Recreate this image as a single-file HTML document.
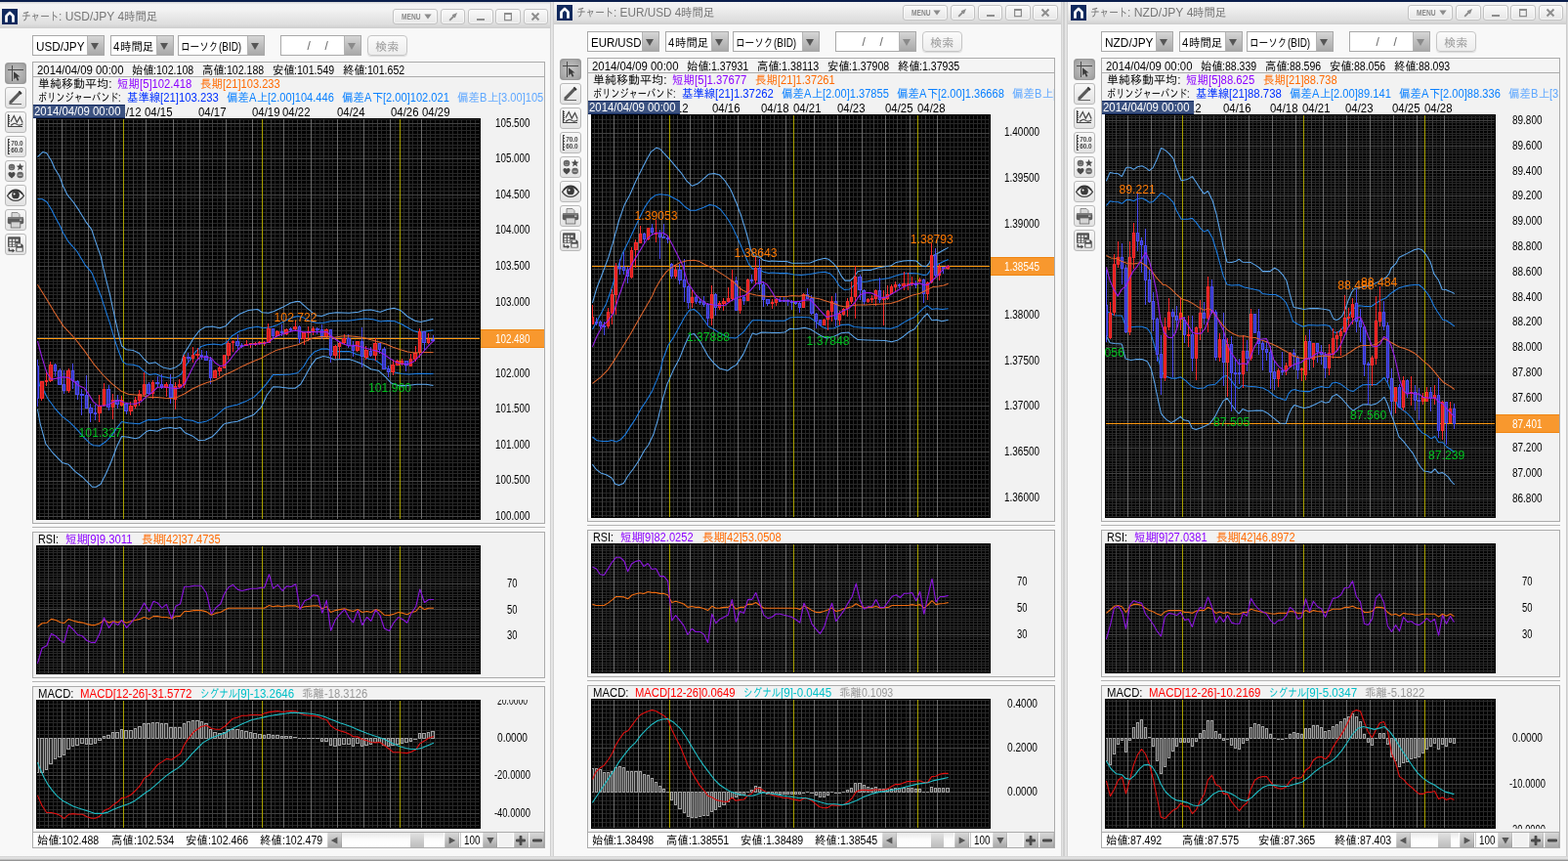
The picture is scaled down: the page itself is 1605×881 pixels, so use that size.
<!DOCTYPE html>
<html lang="ja"><head><meta charset="utf-8"><title>チャート</title>
<style>
html,body{margin:0;padding:0}
body{width:1605px;height:881px;overflow:hidden;position:relative;background:#f8f8f8;font:12px/14px 'Liberation Sans','IPAGothic',sans-serif}
div,span.t,svg{position:absolute;box-sizing:border-box}
span.t{white-space:pre;display:block;transform-origin:0 50%}
.tb{background:linear-gradient(#d4d4d4,#f3f3f3 9%,#f2f2f2 30%,#dedede 88%,#d2d2d2);}
.btn{border:1px solid #c2c2c2;border-radius:3px;background:linear-gradient(#fafafa,#e6e6e6);box-shadow:inset 0 0 0 1px rgba(255,255,255,.6)}
.cb{border:1px solid #a9a9a9;background:#fff}
.dd{background:linear-gradient(#d6d6d6,#bcbcbc 55%,#a9a9a9);border-left:1px solid #b4b4b4}
.tri{width:0;height:0;border-left:4.5px solid transparent;border-right:4.5px solid transparent;border-top:7px solid #555}
.pn{border:1px solid #ababab;background:#f2f2f2}
.tool{border:1px solid #b9b9b9;border-radius:3px;background:linear-gradient(#f8f8f8,#e2e2e2)}
.tool.sel{border-color:#9a9a9a;background:radial-gradient(ellipse at center,#c6c6c6,#a4a4a4 80%,#8c8c8c)}
.sb{background:linear-gradient(#d6d6d6,#c2c2c2 50%,#a8a8a8);box-shadow:inset 1px 0 0 rgba(255,255,255,.25),inset -1px 0 0 rgba(0,0,0,.08)}
</style></head><body>
<div id="root" style="left:0;top:0;width:1605px;height:881px;will-change:transform">
<div style="left:-1.00px;top:2.00px;width:565.50px;height:881.00px;background:#f8f8f8"></div>
<div style="left:-5.00px;top:2.00px;width:573.50px;height:27.00px;"></div>
<div class="tb" style="left:-5.0px;top:2.0px;width:573.5px;height:26.6px;border-bottom:1px solid #cfcfcf"></div>
<svg style="left:2.0px;top:9.0px" width="16" height="16" viewBox="0 0 16 16"><rect width="16" height="16" fill="#10295d"/><path d="M4.500 13.800V7.400L8 3.900L11.500 7.400V13.800" fill="none" stroke="#fff" stroke-width="2.700" stroke-linejoin="round"/></svg>
<span class="t" style="left:21.60px;top:10.30px;line-height:14px;color:#777;transform:scaleX(0.8000);">チャート</span><span class="t" style="left:60.00px;top:10.30px;line-height:14px;color:#777;">: USD/JPY 4</span><span class="t" style="left:127.40px;top:10.30px;line-height:14px;color:#777;transform:scaleX(0.9500);">時間足</span>
<div class="btn" style="left:535.5px;top:9.0px;width:25.5px;height:15.5px"></div>
<svg style="left:543.2px;top:11.8px" width="10" height="10" viewBox="0 0 10 10"><path d="M1.5 1.5l7 7M8.5 1.5l-7 7" stroke="#8c8c8c" stroke-width="1.9" fill="none"/></svg>
<div class="btn" style="left:507.3px;top:9.0px;width:25.5px;height:15.5px"></div>
<svg style="left:515.0px;top:11.8px" width="10" height="10" viewBox="0 0 10 10"><path d="M1.6 2.4h6.8v6.2H1.6z" stroke="#8c8c8c" stroke-width="1.2" fill="none"/><path d="M1 1.9h8" stroke="#8c8c8c" stroke-width="1.8"/></svg>
<div class="btn" style="left:479.1px;top:9.0px;width:25.5px;height:15.5px"></div>
<svg style="left:486.8px;top:11.8px" width="10" height="10" viewBox="0 0 10 10"><path d="M1 8h8" stroke="#8c8c8c" stroke-width="2"/></svg>
<div class="btn" style="left:450.9px;top:9.0px;width:25.5px;height:15.5px"></div>
<svg style="left:458.6px;top:11.8px" width="10" height="10" viewBox="0 0 10 10"><path d="M1.2 8.8L6 4" stroke="#8c8c8c" stroke-width="1.8" fill="none"/><path d="M3.6 3.2L9 1 6.8 6.4z" fill="#8c8c8c"/></svg>
<div class="btn" style="left:402.2px;top:9.0px;width:46.0px;height:15.5px"></div>
<span class="t" style="left:410.80px;top:12.10px;line-height:11px;color:#8a8a8a;font-size:9px;font-weight:bold;transform:scaleX(0.7358);">MENU</span>
<svg style="left:433.6px;top:14.2px" width="8" height="6" viewBox="0 0 8 6"><path d="M0.3 0.6h7.4L4 5.4z" fill="#8c8c8c"/></svg>
<div class="cb" style="left:33.3px;top:36.0px;width:74.0px;height:21px"></div>
<div class="dd" style="left:89.3px;top:37.0px;width:17px;height:19px"></div>
<div class="tri" style="left:93.3px;top:43.5px;"></div>
<span class="t" style="left:36.60px;top:40.50px;line-height:14px;color:#000;transform:scaleX(0.9766);">USD/JPY</span>
<div class="cb" style="left:113.0px;top:36.0px;width:64.5px;height:21px"></div>
<div class="dd" style="left:159.5px;top:37.0px;width:17px;height:19px"></div>
<div class="tri" style="left:163.5px;top:43.5px;"></div>
<span class="t" style="left:116.30px;top:40.50px;line-height:14px;color:#000;transform:scaleX(0.9421);">4</span><span class="t" style="left:122.60px;top:40.50px;line-height:14px;color:#000;transform:scaleX(0.9500);">時間足</span>
<div class="cb" style="left:182.0px;top:36.0px;width:88.5px;height:21px"></div>
<div class="dd" style="left:252.5px;top:37.0px;width:17px;height:19px"></div>
<div class="tri" style="left:256.5px;top:43.5px;"></div>
<span class="t" style="left:185.30px;top:40.50px;line-height:14px;color:#000;transform:scaleX(0.8000);">ローソク</span><span class="t" style="left:223.70px;top:40.50px;line-height:14px;color:#000;transform:scaleX(0.8250);">(BID)</span>
<div class="cb" style="left:287.0px;top:36.0px;width:82.5px;height:21px"></div>
<div class="dd" style="left:351.5px;top:37.0px;width:17px;height:19px"></div>
<div class="tri" style="left:355.5px;top:43.5px;border-top-color:#8a8a8a"></div>
<span class="t" style="left:314.50px;top:40.00px;line-height:14px;color:#666;">/</span>
<span class="t" style="left:332.50px;top:40.00px;line-height:14px;color:#666;">/</span>
<div style="left:375.5px;top:36.0px;width:41.5px;height:21px;border:1px solid #c6c6c6;border-radius:4px;background:linear-gradient(#fbfbfb,#ededed);box-shadow:0 1px 1px rgba(0,0,0,.12)"></div>
<span class="t" style="left:384.20px;top:40.50px;line-height:14px;color:#9a9a9a;">検索</span>
<div class="tool sel" style="left:5.2px;top:64.0px;width:22px;height:22px"></div>
<svg style="left:5.2px;top:64.0px" width="22" height="22" viewBox="0 0 22 22"><path d="M3 7.5h16M7.5 3v16" stroke="#4a4a4a" stroke-width="1" fill="none"/><path d="M9 9.3l0.2 8 2-2 1.6 3.4 1.6-0.8-1.6-3.3 2.8-0.2z" fill="#3c3c3c"/></svg>
<div class="tool" style="left:5.2px;top:89.0px;width:22px;height:22px"></div>
<svg style="left:5.2px;top:89.0px" width="22" height="22" viewBox="0 0 22 22"><path d="M4.500 17.500h12.500" stroke="#666" stroke-width="1"/><path d="M5.600 15.800L15.600 5.600" stroke="#5a5a5a" stroke-width="3.200" stroke-linecap="butt"/><path d="M14.400 4.400l2.600 2.600" stroke="#333" stroke-width="1.800"/><path d="M4.300 17.100l0.600-2.600 2 2z" fill="#444"/></svg>
<div class="tool" style="left:5.2px;top:114.0px;width:22px;height:22px"></div>
<svg style="left:5.2px;top:114.0px" width="22" height="22" viewBox="0 0 22 22"><path d="M3.5 3v12.5H18" stroke="#444" stroke-width="1.2" fill="none"/><path d="M6 10.5l3.3-6 3 6.6 3.2-5.6 2.6 6" stroke="#444" stroke-width="1.2" fill="none"/><path d="M6 14.3c1.6-.4 2.4-2 4-2s2.600 1.800 4.500 1.800 2.600-1 3.800-1.200" stroke="#444" stroke-width="1.1" fill="none"/><path d="M3.500 4.500h1.500M3.500 6.500h1.500M3.500 8.500h1.500M3.500 10.500h1.500M3.500 12.500h1.500" stroke="#444" stroke-width="1"/></svg>
<div class="tool" style="left:5.2px;top:139.0px;width:22px;height:22px"></div>
<svg style="left:5.2px;top:139.0px" width="22" height="22" viewBox="0 0 22 22"><path d="M5 3.500H3.500v15H5M3.500 6.500h1.500M3.500 9.500h1.500M3.500 12.500h1.500M3.500 15.500h1.500" stroke="#444" stroke-width="1.1" fill="none"/><text x="6.200" y="9.600" font-family="Liberation Sans,sans-serif" font-size="6.500" font-weight="bold" fill="#444" textLength="12.500" lengthAdjust="spacingAndGlyphs">70.0</text><text x="6.200" y="16.600" font-family="Liberation Sans,sans-serif" font-size="6.500" font-weight="bold" fill="#444" textLength="12.500" lengthAdjust="spacingAndGlyphs">60.0</text></svg>
<div class="tool" style="left:5.2px;top:164.0px;width:22px;height:22px"></div>
<svg style="left:5.2px;top:164.0px" width="22" height="22" viewBox="0 0 22 22"><circle cx="7" cy="7" r="3.300" fill="#666"/><path d="M5.300 6.200h1.200M7.600 6.200h1.200M5.400 8.200q1.600 1.300 3.200 0" stroke="#aaa" stroke-width=".7" fill="none"/><path d="M15.600 3l1.100 2.600 2.800.2-2.200 1.800.8 2.800-2.500-1.600-2.500 1.600.8-2.800-2.200-1.800 2.800-.2z" fill="#4a4a4a"/><path d="M7 18.400c-2-1.600-3.600-2.800-3.600-4.600 0-1.100.9-1.900 1.900-1.900.7 0 1.300.4 1.700 1 .4-.6 1-1 1.700-1 1 0 1.900.8 1.900 1.900 0 1.800-1.600 3-3.600 4.600z" fill="#4a4a4a"/><circle cx="15.600" cy="15" r="3.300" fill="#666"/><path d="M13.600 15.200h4" stroke="#ccc" stroke-width="1"/></svg>
<div class="tool" style="left:5.2px;top:189.0px;width:22px;height:22px"></div>
<svg style="left:5.2px;top:189.0px" width="22" height="22" viewBox="0 0 22 22"><path d="M2.600 11.400c2.200-3.600 5.200-5.400 8.400-5.400s6.200 1.800 8.400 5.400c-2.200 3.400-5.200 5-8.400 5s-6.200-1.600-8.400-5z" fill="#eee" stroke="#444" stroke-width="1.300"/><circle cx="11" cy="10.400" r="3.900" fill="#3a3a3a"/><path d="M4 9.500c2-2.800 4.400-4.100 7-4.100s5 1.300 7 4.100" stroke="#333" stroke-width="1.600" fill="none"/><circle cx="9.600" cy="9.400" r="1" fill="#fff"/></svg>
<div class="tool" style="left:5.2px;top:214.0px;width:22px;height:22px"></div>
<svg style="left:5.2px;top:214.0px" width="22" height="22" viewBox="0 0 22 22"><path d="M7 3.500h6l2 2v4H7z" fill="#d8d8d8" stroke="#777" stroke-width=".8"/><rect x="2.800" y="8" width="16.400" height="7.200" rx="1.800" fill="#5c5c5c"/><rect x="3" y="8" width="16" height="2" rx="1" fill="#7a7a7a"/><rect x="6.200" y="13" width="9.600" height="6" fill="#d4d4d4" stroke="#666" stroke-width=".8"/><rect x="15" y="10.600" width="2.400" height="1" fill="#eee"/></svg>
<div class="tool" style="left:5.2px;top:239.0px;width:22px;height:22px"></div>
<svg style="left:5.2px;top:239.0px" width="22" height="22" viewBox="0 0 22 22"><rect x="3" y="3.300" width="13" height="10.600" rx="1" fill="#555"/><path d="M4.500 5.700h2.300v2.100H4.500zM7.900 5.700h2.300v2.100H7.900zM11.300 5.700h2.300v2.100h-2.300zM4.500 8.800h2.300v2H4.500zM7.900 8.800h2.300v2H7.900zM4.500 11.600h2.300v1.600H4.500zM7.900 11.600h2.300v1.600H7.900z" fill="#eee"/><rect x="10.800" y="10.200" width="8.200" height="8.600" fill="#f2f2f2"/><path d="M11.300 10.600h6l1.400 1.400v6.400h-7.400z" fill="#444"/><rect x="12.800" y="10.800" width="3.600" height="2.200" fill="#ddd"/><rect x="12.300" y="14.600" width="5.400" height="3.300" fill="#eee"/><path d="M4.200 14.800v2.700h4" stroke="#444" stroke-width="1.300" fill="none"/><path d="M7.600 15.600l2.600 1.900-2.600 1.900z" fill="#444"/></svg>
<div class="pn" style="left:33.0px;top:63.0px;width:525.0px;height:473.0px"></div>
<div style="left:33.0px;top:63.0px;width:525.0px;height:16px;border:1px solid #ababab;background:#f4f4f4"></div>
<span class="t" style="left:37.60px;top:64.70px;line-height:14px;color:#000;transform:scaleX(0.9473);">2014/04/09 00:00</span>
<span class="t" style="left:134.60px;top:64.70px;line-height:14px;color:#000;transform:scaleX(0.9500);">始値</span><span class="t" style="left:157.40px;top:64.70px;line-height:14px;color:#000;transform:scaleX(0.8819);">:102.108</span>
<span class="t" style="left:206.60px;top:64.70px;line-height:14px;color:#000;transform:scaleX(0.9500);">高値</span><span class="t" style="left:229.40px;top:64.70px;line-height:14px;color:#000;transform:scaleX(0.8819);">:102.188</span>
<span class="t" style="left:278.60px;top:64.70px;line-height:14px;color:#000;transform:scaleX(0.9500);">安値</span><span class="t" style="left:301.40px;top:64.70px;line-height:14px;color:#000;transform:scaleX(0.8819);">:101.549</span>
<span class="t" style="left:350.60px;top:64.70px;line-height:14px;color:#000;transform:scaleX(0.9500);">終値</span><span class="t" style="left:373.40px;top:64.70px;line-height:14px;color:#000;transform:scaleX(0.8819);">:101.652</span>
<span class="t" style="left:39.00px;top:79.10px;line-height:14px;color:#000;">単純移動平均</span><span class="t" style="left:111.15px;top:79.10px;line-height:14px;color:#000;">:</span>
<span class="t" style="left:120.40px;top:79.10px;line-height:14px;color:#8c00ff;transform:scaleX(0.9500);">短期</span><span class="t" style="left:143.20px;top:79.10px;line-height:14px;color:#8c00ff;transform:scaleX(0.9380);">[5]102.418</span>
<span class="t" style="left:204.90px;top:79.10px;line-height:14px;color:#ff6a00;transform:scaleX(0.9500);">長期</span><span class="t" style="left:227.70px;top:79.10px;line-height:14px;color:#ff6a00;transform:scaleX(0.9258);">[21]103.233</span>
<span class="t" style="left:39.00px;top:93.10px;line-height:14px;color:#000;transform:scaleX(0.7634);">ボリンジャーバンド</span><span class="t" style="left:121.45px;top:93.10px;line-height:14px;color:#000;transform:scaleX(0.7634);">:</span>
<span class="t" style="left:129.80px;top:93.10px;line-height:14px;color:#0030ff;transform:scaleX(0.9500);">基準線</span><span class="t" style="left:164.00px;top:93.10px;line-height:14px;color:#0030ff;transform:scaleX(0.9431);">[21]103.233</span>
<span class="t" style="left:232.30px;top:93.10px;line-height:14px;color:#0a80ff;transform:scaleX(0.9500);">偏差</span><span class="t" style="left:255.10px;top:93.10px;line-height:14px;color:#0a80ff;transform:scaleX(0.9248);">A</span><span class="t" style="left:262.51px;top:93.10px;line-height:14px;color:#0a80ff;transform:scaleX(0.9500);">上</span><span class="t" style="left:273.91px;top:93.10px;line-height:14px;color:#0a80ff;transform:scaleX(0.9248);">[2.00]104.446</span>
<span class="t" style="left:350.30px;top:93.10px;line-height:14px;color:#0a80ff;transform:scaleX(0.9500);">偏差</span><span class="t" style="left:373.10px;top:93.10px;line-height:14px;color:#0a80ff;transform:scaleX(0.9248);">A</span><span class="t" style="left:380.51px;top:93.10px;line-height:14px;color:#0a80ff;transform:scaleX(0.9500);">下</span><span class="t" style="left:391.91px;top:93.10px;line-height:14px;color:#0a80ff;transform:scaleX(0.9248);">[2.00]102.021</span>
<span class="t" style="left:468.30px;top:93.10px;line-height:14px;color:#60a8ff;transform:scaleX(0.9500);">偏差</span><span class="t" style="left:491.10px;top:93.10px;line-height:14px;color:#60a8ff;transform:scaleX(0.9248);">B</span><span class="t" style="left:498.51px;top:93.10px;line-height:14px;color:#60a8ff;transform:scaleX(0.9500);">上</span><span class="t" style="left:509.91px;top:93.10px;line-height:14px;color:#60a8ff;transform:scaleX(0.9248);width:50.92px;overflow:hidden;">[3.00]105.659</span>
<div style="left:34.00px;top:107.00px;width:3.00px;height:425.00px;background:#fff"></div>
<span class="t" style="left:115.70px;top:107.50px;line-height:14px;color:#000;transform:scaleX(0.9490);">04/12</span>
<span class="t" style="left:148.00px;top:107.50px;line-height:14px;color:#000;transform:scaleX(0.9490);">04/15</span>
<span class="t" style="left:202.80px;top:107.50px;line-height:14px;color:#000;transform:scaleX(0.9490);">04/17</span>
<span class="t" style="left:257.50px;top:107.50px;line-height:14px;color:#000;transform:scaleX(0.9490);">04/19</span>
<span class="t" style="left:289.40px;top:107.50px;line-height:14px;color:#000;transform:scaleX(0.9490);">04/22</span>
<span class="t" style="left:344.60px;top:107.50px;line-height:14px;color:#000;transform:scaleX(0.9490);">04/24</span>
<span class="t" style="left:399.90px;top:107.50px;line-height:14px;color:#000;transform:scaleX(0.9490);">04/26</span>
<span class="t" style="left:431.70px;top:107.50px;line-height:14px;color:#000;transform:scaleX(0.9490);">04/29</span>
<div style="left:34.00px;top:107.00px;width:93.50px;height:14.00px;background:#3c5280;border-top:1px solid #142c62;border-bottom:1px solid #142c62"></div>
<span class="t" style="left:35.00px;top:107.30px;line-height:14px;color:#fff;transform:scaleX(0.9473);">2014/04/09 00:00</span>
<svg style="left:37.0px;top:121.0px;background:#000" width="455" height="411" viewBox="0 0 455 411"><g fill="none" stroke-width="1" shape-rendering="crispEdges"><path d="M1 1.5H454M1 5.5H454M1 8.5H454M1 12.5H454M1 16.5H454M1 19.5H454M1 23.5H454M1 27.5H454M1 30.5H454M1 34.5H454M1 38.5H454M1 41.5H454M1 45.5H454M1 48.5H454M1 52.5H454M1 56.5H454M1 59.5H454M1 63.5H454M1 67.5H454M1 70.5H454M1 74.5H454M1 78.5H454M1 81.5H454M1 85.5H454M1 89.5H454M1 92.5H454M1 96.5H454M1 100.5H454M1 103.5H454M1 107.5H454M1 111.5H454M1 114.5H454M1 118.5H454M1 122.5H454M1 125.5H454M1 129.5H454M1 133.5H454M1 136.5H454M1 140.5H454M1 144.5H454M1 147.5H454M1 151.5H454M1 155.5H454M1 158.5H454M1 162.5H454M1 166.5H454M1 169.5H454M1 173.5H454M1 177.5H454M1 180.5H454M1 184.5H454M1 188.5H454M1 191.5H454M1 195.5H454M1 199.5H454M1 202.5H454M1 206.5H454M1 210.5H454M1 213.5H454M1 217.5H454M1 221.5H454M1 224.5H454M1 228.5H454M1 231.5H454M1 235.5H454M1 239.5H454M1 242.5H454M1 246.5H454M1 250.5H454M1 253.5H454M1 257.5H454M1 261.5H454M1 264.5H454M1 268.5H454M1 272.5H454M1 275.5H454M1 279.5H454M1 283.5H454M1 286.5H454M1 290.5H454M1 294.5H454M1 297.5H454M1 301.5H454M1 305.5H454M1 308.5H454M1 312.5H454M1 316.5H454M1 319.5H454M1 323.5H454M1 327.5H454M1 330.5H454M1 334.5H454M1 338.5H454M1 341.5H454M1 345.5H454M1 349.5H454M1 352.5H454M1 356.5H454M1 360.5H454M1 363.5H454M1 367.5H454M1 371.5H454M1 374.5H454M1 378.5H454M1 382.5H454M1 385.5H454M1 389.5H454M1 393.5H454M1 396.5H454M1 400.5H454M1 404.5H454M1 407.5H454" stroke="#282828"/><path d="M3.5 1V410M8.5 1V410M12.5 1V410M17.5 1V410M21.5 1V410M26.5 1V410M30.5 1V410M35.5 1V410M39.5 1V410M44.5 1V410M49.5 1V410M53.5 1V410M58.5 1V410M62.5 1V410M67.5 1V410M71.5 1V410M76.5 1V410M80.5 1V410M85.5 1V410M89.5 1V410M94.5 1V410M99.5 1V410M103.5 1V410M108.5 1V410M112.5 1V410M117.5 1V410M121.5 1V410M126.5 1V410M130.5 1V410M135.5 1V410M140.5 1V410M144.5 1V410M149.5 1V410M153.5 1V410M158.5 1V410M162.5 1V410M167.5 1V410M171.5 1V410M176.5 1V410M180.5 1V410M185.5 1V410M190.5 1V410M194.5 1V410M199.5 1V410M203.5 1V410M208.5 1V410M212.5 1V410M217.5 1V410M221.5 1V410M226.5 1V410M231.5 1V410M235.5 1V410M240.5 1V410M244.5 1V410M249.5 1V410M253.5 1V410M258.5 1V410M262.5 1V410M267.5 1V410M271.5 1V410M276.5 1V410M281.5 1V410M285.5 1V410M290.5 1V410M294.5 1V410M299.5 1V410M303.5 1V410M308.5 1V410M312.5 1V410M317.5 1V410M322.5 1V410M326.5 1V410M331.5 1V410M335.5 1V410M340.5 1V410M344.5 1V410M349.5 1V410M353.5 1V410M358.5 1V410M362.5 1V410M367.5 1V410M372.5 1V410M376.5 1V410M381.5 1V410M385.5 1V410M390.5 1V410M394.5 1V410M399.5 1V410M403.5 1V410M408.5 1V410M413.5 1V410M417.5 1V410M422.5 1V410M426.5 1V410M431.5 1V410M435.5 1V410M440.5 1V410M444.5 1V410M449.5 1V410" stroke="#282828"/><path d="M1 5.5H454M1 41.5H454M1 78.5H454M1 114.5H454M1 151.5H454M1 188.5H454M1 224.5H454M1 261.5H454M1 297.5H454M1 334.5H454M1 371.5H454M1 407.5H454" stroke="#424242"/><path d="M12.5 1V410M39.5 1V410M67.5 1V410M99.5 1V410M126.5 1V410M153.5 1V410M180.5 1V410M208.5 1V410M240.5 1V410M267.5 1V410M294.5 1V410M322.5 1V410M349.5 1V410M381.5 1V410" stroke="#3e3e3e"/><path d="M26.5 1V410M53.5 1V410M80.5 1V410M112.5 1V410M140.5 1V410M167.5 1V410M194.5 1V410M221.5 1V410M253.5 1V410M281.5 1V410M308.5 1V410M335.5 1V410M362.5 1V410M394.5 1V410" stroke="#6c6c6c"/><path d="M89.5 1V410M231.5 1V410M372.5 1V410" stroke="#aaa200"/></g><path d="M1 225.5H454" stroke="#ff9a10" stroke-width="1.2" fill="none"/><path d="M1.4 39.6L7 34.4L10.8 35.8L15.5 43.3L19.2 51.8L23.9 59.3L27.6 69.6L32.3 78.9L37.9 85.5L43.6 93.9L51 106.1L56.7 113.6L61.3 127.6L66 140.7L70.7 161.3L75.4 180.1L77.3 189L81 205.8L84.8 222.7L87.6 233L92.2 236.7L99.7 237.6L105.4 240.5L111 247L115.7 251.1L122.2 249.8L126 252.6L129.7 254.9L137.2 256.4L142.8 254.9L148.4 250.8L151.2 241.4L155.9 233.9L161.5 224.5L167.2 217.1L172.8 213.7L180.3 212.9L187.8 214.8L194.3 212.4L200.5 205.8L208 200.6L217.3 196.4L226.7 195.5L231.4 198.7L237.9 199.3L243.6 197.4L252.9 193.1L260.4 189L266 187.5L269.8 187.6L275.4 192.7L281 197.4L286.6 201.7L292.2 202.4L299.7 199.8L307.2 198.7L320.3 199.3L329.7 198.3L335.3 196.4L342.8 196.1L352.2 198.3L359.7 195.5L366.2 194.2L372.8 196.4L380.3 203L387.8 207.3L393.4 208.6L399 207.3L406.5 205.2" stroke="#5aa6ee" stroke-width="1.05" fill="none" stroke-linejoin="round" /><path d="M1.4 297.7L4.2 312.7L9.9 333.3L17.3 342.7L26.7 352.4L33.3 354.3L39.8 361.4L47.3 367L52.9 372.6L57.6 377.3L61.3 377.3L66 374.5L71.7 363.3L77.3 350.2L82.9 335.2L87.6 325.4L94.1 326.2L101.6 327.7L105.4 326.8L112.8 320.6L116.6 319.3L124.1 320.2L129.7 317.4L137.2 316.4L142.8 317.4L147.5 316.4L152.2 321.7L159.7 324.9L166.2 329.6L172.8 329.2L180.3 325.8L185.9 320.2L191.5 313.6L193 312.6L200.5 311.1L206.1 310.3L213.6 306.9L223 303.2L230.4 295.7L236.1 283.5L242.6 274.7L249.2 275.1L258.5 276.2L265.1 276.2L270.7 272.3L275.4 263.9L281 253.6L286.6 246.1L294.1 243.6L299.7 244.8L305.4 247L312.9 246.6L320.3 246.6L327.8 248.9L335.3 252.3L342.8 256.8L350.3 258.2L357.8 264.8L363.4 271L370.9 273.6L380.3 273.6L389.6 272.3L399 272.3L406.5 273.6" stroke="#5aa6ee" stroke-width="1.05" fill="none" stroke-linejoin="round" /><path d="M1.4 82.7L6.1 82.7L10.8 85.5L15.5 93L20.1 102.3L24.8 110.8L27.6 117.3L33.3 126.7L41.7 136L50.1 150.1L56.7 157.6L61.3 168.8L67 183.8L69.8 192.7L75.4 209.6L81 228.3L84.8 239.5L88.5 248.9L92.2 251.7L99.7 252.3L105.4 254.1L111 259.2L115.7 262.4L122.2 261.6L127.8 263.9L137.2 266.1L142.8 265.4L148.4 262L152.2 254.5L157.8 247L163.4 238.6L169 233.5L174.7 231.7L182.1 231.1L189.6 232L195.2 229.2L200.5 222.7L208 218L217.3 214.8L226.7 213.3L232.3 214.8L239.8 213.7L247.3 211.4L254.8 207.3L262.3 203.9L267.9 202.4L273.5 203.9L279.1 207.3L286.6 209.2L294.1 209.2L301.6 207.7L309.1 207.3L320.3 207.3L329.7 205.8L337.2 204.9L344.7 205.8L352.2 208.1L359.7 207.3L367.2 207.7L373.7 210.5L380.3 214.2L385.9 217.4L391.5 218.9L399 218L406.5 216.7" stroke="#1c7fe6" stroke-width="1.05" fill="none" stroke-linejoin="round" /><path d="M1.4 263.9L3.3 273.2L8 279L11.7 286.5L19.2 296.8L26.7 305.2L34.2 310.8L41.7 318.3L49.2 326.8L54.8 332.4L58.5 334.8L65.1 335.2L71.7 330.5L77.3 324.9L82.9 316.4L87.6 310.5L94.1 311.8L105.4 312.7L114.7 308.6L124.1 308.6L129.7 306.7L140.9 306.7L147.5 305.6L152.2 308.6L159.7 309.3L166.2 311.8L174.7 309.9L182.1 306.1L189.6 299.6L193 296.6L200.5 294.2L206.1 292.9L213.6 290.1L223 285.4L230.4 277.9L236.1 271.4L242.6 262.4L249.2 262.4L260.4 262L267.9 260.5L273.5 254.5L279.1 245.1L284.8 239.1L292.2 236.1L297.9 236.1L303.5 238.6L312.9 238.6L320.3 238.6L327.8 241.4L335.3 243.3L340.9 246.6L346.6 247L354.1 252.6L359.7 256.4L367.2 260.1L374.6 261.6L382.1 262L391.5 261.2L406.5 261.4" stroke="#1c7fe6" stroke-width="1.05" fill="none" stroke-linejoin="round" /><path d="M5 269h1V289h-1zM4 269h4V287h-4zM10 258h1V274h-1zM9 268h3V270h-3zM14 249h1V270h-1zM13 252h4V269h-4zM33 256h1V281h-1zM31 258h4V279h-4zM64 283h1V311h-1zM63 294h4V302h-4zM69 271h1V295h-1zM68 277h3V294h-3zM78 282h1V308h-1zM77 288h3V296h-3zM87 284h1V295h-1zM86 288h3V294h-3zM96 290h1V304h-1zM95 294h4V300h-4zM101 285h1V297h-1zM100 288h3V295h-3zM105 278h1V294h-1zM104 282h4V289h-4zM110 260h1V284h-1zM109 272h3V283h-3zM119 268h1V287h-1zM118 270h3V282h-3zM133 270h1V285h-1zM131 272h4V276h-4zM142 270h1V298h-1zM141 274h3V288h-3zM146 267h1V276h-1zM145 272h4V275h-4zM151 242h1V276h-1zM150 244h3V273h-3zM160 234h1V250h-1zM159 242h3V246h-3zM165 235h1V247h-1zM163 241h4V243h-4zM183 257h1V266h-1zM181 258h4V266h-4zM187 254h1V264h-1zM186 255h4V259h-4zM192 242h1V256h-1zM191 242h3V256h-3zM196 228h1V247h-1zM195 230h4V243h-4zM201 227h1V239h-1zM200 228h3V230h-3zM215 227h1V233h-1zM213 231h4V233h-4zM219 230h1V235h-1zM218 230h3V232h-3zM224 229h1V233h-1zM222 230h4V232h-4zM228 228h1V232h-1zM227 229h4V231h-4zM233 228h1V233h-1zM232 229h3V231h-3zM237 210h1V230h-1zM236 215h4V230h-4zM246 217h1V223h-1zM245 218h4V223h-4zM256 215h1V222h-1zM254 216h4V221h-4zM265 207h1V217h-1zM263 213h4V216h-4zM274 219h1V232h-1zM272 219h4V226h-4zM278 213h1V228h-1zM277 218h4V220h-4zM283 213h1V222h-1zM282 215h3V218h-3zM297 215h1V225h-1zM295 216h4V224h-4zM306 232h1V246h-1zM304 233h4V243h-4zM310 229h1V246h-1zM309 230h3V234h-3zM315 221h1V232h-1zM313 225h4V230h-4zM328 228h1V239h-1zM327 228h4V238h-4zM337 233h1V247h-1zM336 237h4V245h-4zM347 225h1V248h-1zM345 230h4V243h-4zM365 247h1V263h-1zM363 252h4V260h-4zM369 247h1V253h-1zM368 248h4V253h-4zM374 246h1V253h-1zM373 248h3V252h-3zM383 241h1V254h-1zM382 246h3V254h-3zM388 233h1V249h-1zM386 240h4V247h-4zM392 215h1V245h-1zM391 218h3V240h-3zM401 220h1V231h-1zM400 226h3V230h-3z" fill="#ff2a2a" shape-rendering="crispEdges"/><path d="M5 270h2V286h-2zM14 253h2V268h-2zM32 259h2V278h-2zM64 295h2V301h-2zM69 278h1V293h-1zM78 289h1V295h-1zM87 289h1V293h-1zM96 295h2V299h-2zM101 289h1V294h-1zM105 283h2V288h-2zM110 273h1V282h-1zM119 271h1V281h-1zM132 273h2V275h-2zM142 275h1V287h-1zM146 273h2V274h-2zM151 245h1V272h-1zM160 243h1V245h-1zM182 259h2V265h-2zM187 256h2V258h-2zM192 243h1V255h-1zM196 231h2V242h-2zM237 216h2V229h-2zM246 219h2V222h-2zM255 217h2V220h-2zM264 214h2V215h-2zM273 220h2V225h-2zM283 216h1V217h-1zM296 217h2V223h-2zM305 234h2V242h-2zM310 231h1V233h-1zM314 226h2V229h-2zM328 229h2V237h-2zM337 238h2V244h-2zM346 231h2V242h-2zM364 253h2V259h-2zM369 249h2V252h-2zM374 249h1V251h-1zM383 247h1V253h-1zM387 241h2V246h-2zM392 219h1V239h-1zM401 227h1V229h-1z" fill="#d41c1c" shape-rendering="crispEdges"/><path d="M1 247h1V295h-1zM0 253h3V287h-3zM19 251h1V264h-1zM18 252h3V259h-3zM24 256h1V273h-1zM22 258h4V273h-4zM28 258h1V282h-1zM27 272h3V279h-3zM37 251h1V277h-1zM36 258h3V269h-3zM42 268h1V288h-1zM40 269h4V283h-4zM46 277h1V304h-1zM45 282h4V284h-4zM51 263h1V297h-1zM50 283h3V297h-3zM55 292h1V311h-1zM54 296h4V302h-4zM60 293h1V309h-1zM59 301h3V303h-3zM74 273h1V299h-1zM72 277h4V296h-4zM83 283h1V297h-1zM81 288h4V293h-4zM92 291h1V303h-1zM90 292h4V300h-4zM115 270h1V282h-1zM113 272h4V282h-4zM124 264h1V275h-1zM122 270h4V272h-4zM128 262h1V277h-1zM127 272h3V276h-3zM137 262h1V292h-1zM136 272h4V286h-4zM155 240h1V250h-1zM154 244h4V246h-4zM169 237h1V247h-1zM168 242h3V244h-3zM174 238h1V248h-1zM172 243h4V248h-4zM178 244h1V272h-1zM177 247h3V266h-3zM206 221h1V236h-1zM204 228h4V233h-4zM210 230h1V235h-1zM209 232h3V234h-3zM242 215h1V225h-1zM241 215h3V223h-3zM251 211h1V223h-1zM250 218h3V220h-3zM260 214h1V218h-1zM259 215h3V217h-3zM269 212h1V230h-1zM268 213h3V226h-3zM287 214h1V221h-1zM286 215h4V217h-4zM292 211h1V226h-1zM291 216h3V223h-3zM301 216h1V250h-1zM300 216h3V243h-3zM319 221h1V235h-1zM318 225h4V233h-4zM324 228h1V244h-1zM323 233h3V238h-3zM333 214h1V255h-1zM332 228h3V244h-3zM342 234h1V244h-1zM341 238h3V243h-3zM351 230h1V241h-1zM350 230h3V237h-3zM356 234h1V257h-1zM354 236h4V257h-4zM360 253h1V265h-1zM359 256h3V260h-3zM378 248h1V259h-1zM377 248h4V253h-4zM397 218h1V237h-1zM395 218h4V230h-4zM406 222h1V229h-1zM404 226h4V228h-4z" fill="#4a4af6" shape-rendering="crispEdges"/><path d="M1 254h1V286h-1zM19 253h1V258h-1zM23 259h2V272h-2zM28 273h1V278h-1zM37 259h1V268h-1zM41 270h2V282h-2zM51 284h1V296h-1zM55 297h2V301h-2zM73 278h2V295h-2zM82 289h2V292h-2zM91 293h2V299h-2zM114 273h2V281h-2zM128 273h1V275h-1zM137 273h2V285h-2zM173 244h2V247h-2zM178 248h1V265h-1zM205 229h2V232h-2zM242 216h1V222h-1zM269 214h1V225h-1zM292 217h1V222h-1zM301 217h1V242h-1zM319 226h2V232h-2zM324 234h1V237h-1zM333 229h1V243h-1zM342 239h1V242h-1zM351 231h1V236h-1zM355 237h2V256h-2zM360 257h1V259h-1zM378 249h2V252h-2zM396 219h2V229h-2z" fill="#3232b4" shape-rendering="crispEdges"/><path d="M1.4 170.3L9.9 183.8L19.2 199.3L27.6 212.4L39.8 225.5L49.2 237.6L58.5 250.8L67.9 262L77.3 271.4L86.6 278.9L94.1 282.2L101.6 283L109.1 284.1L116.6 285.4L124.1 285.4L131.6 286.3L139.1 286.7L144.7 285.4L152.2 281.7L159.7 277L167.2 273.6L174.7 270.4L182.1 268.6L189.6 264.8L193 262.4L200.5 259.2L208 255.4L215.5 251.7L223 248.5L230.4 245.5L237.9 241.4L245.4 237.6L252.9 235.4L260.4 233.5L267.9 231.7L275.4 228.3L282.9 224.9L290.4 223.6L297.9 223.6L305.4 224.2L312.9 223L320.3 222.7L327.8 223.6L335.3 224.5L342.8 226.8L350.3 228.7L357.8 231.1L365.3 234.3L372.8 236.7L380.3 239.1L387.8 239.9L395.2 239.5L406.5 239.5" stroke="#e0662c" stroke-width="1.05" fill="none" stroke-linejoin="round" /><path d="M1.4 227.9L6.1 245.1L10.8 260.1L15.5 267.2L21.1 266.1L26.7 264.8L33.3 265.4L38.9 269.5L43.6 273.6L49.2 276L53.9 282.6L58.5 290.1L63.2 294.2L67.9 294.2L73.5 293.5L79.1 290.1L84.8 288.6L90.4 291L96 292.3L101.6 292.3L107.2 290.1L112.8 284.8L118.5 280.7L124.1 275.5L129.7 274.7L135.3 275.5L142.8 276.6L147.5 276L152.2 271.4L157.8 260.1L163.4 248.9L168.1 244.2L173.7 244.2L179.3 245.5L184 250.8L188.7 253.6L191.5 253L193 252.6L198.6 247L204.2 239.5L209.8 233.5L217.3 231.7L224.8 231.1L232.3 230.5L237.9 229.2L243.6 224.5L249.2 221.7L256.7 219.3L264.2 217.1L267.9 217.4L273.5 218.9L281 218.6L288.5 218.6L297.9 218.6L301.6 222.7L307.2 226.8L312.9 230.2L320.3 233L327.8 232.4L335.3 234.8L342.8 236.7L350.3 238.6L355.9 241.4L361.5 245.5L367.2 248.9L372.8 251.1L380.3 251.7L385.9 249.3L391.5 244.2L397.1 238L402.7 231.7L407.4 227.4" stroke="#9a1fe8" stroke-width="1.1" fill="none" stroke-linejoin="round" /><path d="M0.5 0.5H454.5V410.5H0.5z" stroke="#000" stroke-width="1" fill="none" shape-rendering="crispEdges"/><text x="243.6" y="208" fill="#ff7a00" font-family="Liberation Sans,sans-serif" font-size="12.2">102.722</text><text x="43.6" y="326.1" fill="#00c020" font-family="Liberation Sans,sans-serif" font-size="12.2">101.327</text><text x="340" y="279.9" fill="#00c020" font-family="Liberation Sans,sans-serif" font-size="12.2">101.960</text></svg>
<span class="t" style="left:506.55px;top:520.80px;line-height:14px;color:#000;transform:scaleX(0.8181);">100.000</span>
<span class="t" style="left:506.55px;top:484.25px;line-height:14px;color:#000;transform:scaleX(0.8181);">100.500</span>
<span class="t" style="left:506.55px;top:447.70px;line-height:14px;color:#000;transform:scaleX(0.8181);">101.000</span>
<span class="t" style="left:506.55px;top:411.15px;line-height:14px;color:#000;transform:scaleX(0.8181);">101.500</span>
<span class="t" style="left:506.55px;top:374.60px;line-height:14px;color:#000;transform:scaleX(0.8181);">102.000</span>
<span class="t" style="left:506.55px;top:338.05px;line-height:14px;color:#000;transform:scaleX(0.8181);">102.500</span>
<span class="t" style="left:506.55px;top:301.50px;line-height:14px;color:#000;transform:scaleX(0.8181);">103.000</span>
<span class="t" style="left:506.55px;top:264.95px;line-height:14px;color:#000;transform:scaleX(0.8181);">103.500</span>
<span class="t" style="left:506.55px;top:228.40px;line-height:14px;color:#000;transform:scaleX(0.8181);">104.000</span>
<span class="t" style="left:506.55px;top:191.85px;line-height:14px;color:#000;transform:scaleX(0.8181);">104.500</span>
<span class="t" style="left:506.55px;top:155.30px;line-height:14px;color:#000;transform:scaleX(0.8181);">105.000</span>
<span class="t" style="left:506.55px;top:118.75px;line-height:14px;color:#000;transform:scaleX(0.8181);">105.500</span>
<div style="left:492.00px;top:337.00px;width:65.00px;height:19.00px;background:#f8982e;border-top:1px solid #ef8410;border-bottom:1px solid #ef8410"></div>
<span class="t" style="left:506.55px;top:340.00px;line-height:14px;color:#fff;transform:scaleX(0.8181);">102.480</span>
<div style="left:33.0px;top:539.0px;width:525.0px;height:1px;background:#b4b4b4"></div>
<div class="pn" style="left:33.0px;top:544.0px;width:525.0px;height:150.0px"></div>
<span class="t" style="left:39.00px;top:545.10px;line-height:14px;color:#000;transform:scaleX(0.8996);">RSI:</span>
<span class="t" style="left:66.50px;top:545.10px;line-height:14px;color:#8c00ff;transform:scaleX(0.9500);">短期</span><span class="t" style="left:89.30px;top:545.10px;line-height:14px;color:#8c00ff;transform:scaleX(0.9500);">[9]9.3011</span>
<span class="t" style="left:144.50px;top:545.10px;line-height:14px;color:#ff6a00;transform:scaleX(0.9500);">長期</span><span class="t" style="left:167.30px;top:545.10px;line-height:14px;color:#ff6a00;transform:scaleX(0.9258);">[42]37.4735</span>
<svg style="left:37.0px;top:558.0px;background:#000" width="455" height="132" viewBox="0 0 455 132"><g fill="none" stroke-width="1" shape-rendering="crispEdges"><path d="M1 2.5H454M1 5.5H454M1 7.5H454M1 10.5H454M1 13.5H454M1 15.5H454M1 18.5H454M1 21.5H454M1 23.5H454M1 26.5H454M1 29.5H454M1 31.5H454M1 34.5H454M1 36.5H454M1 39.5H454M1 42.5H454M1 44.5H454M1 47.5H454M1 50.5H454M1 52.5H454M1 55.5H454M1 58.5H454M1 60.5H454M1 63.5H454M1 65.5H454M1 68.5H454M1 71.5H454M1 73.5H454M1 76.5H454M1 79.5H454M1 81.5H454M1 84.5H454M1 87.5H454M1 89.5H454M1 92.5H454M1 94.5H454M1 97.5H454M1 100.5H454M1 102.5H454M1 105.5H454M1 108.5H454M1 110.5H454M1 113.5H454M1 116.5H454M1 118.5H454M1 121.5H454M1 123.5H454M1 126.5H454M1 129.5H454" stroke="#282828"/><path d="M3.5 1V131M8.5 1V131M12.5 1V131M17.5 1V131M21.5 1V131M26.5 1V131M30.5 1V131M35.5 1V131M39.5 1V131M44.5 1V131M49.5 1V131M53.5 1V131M58.5 1V131M62.5 1V131M67.5 1V131M71.5 1V131M76.5 1V131M80.5 1V131M85.5 1V131M89.5 1V131M94.5 1V131M99.5 1V131M103.5 1V131M108.5 1V131M112.5 1V131M117.5 1V131M121.5 1V131M126.5 1V131M130.5 1V131M135.5 1V131M140.5 1V131M144.5 1V131M149.5 1V131M153.5 1V131M158.5 1V131M162.5 1V131M167.5 1V131M171.5 1V131M176.5 1V131M180.5 1V131M185.5 1V131M190.5 1V131M194.5 1V131M199.5 1V131M203.5 1V131M208.5 1V131M212.5 1V131M217.5 1V131M221.5 1V131M226.5 1V131M231.5 1V131M235.5 1V131M240.5 1V131M244.5 1V131M249.5 1V131M253.5 1V131M258.5 1V131M262.5 1V131M267.5 1V131M271.5 1V131M276.5 1V131M281.5 1V131M285.5 1V131M290.5 1V131M294.5 1V131M299.5 1V131M303.5 1V131M308.5 1V131M312.5 1V131M317.5 1V131M322.5 1V131M326.5 1V131M331.5 1V131M335.5 1V131M340.5 1V131M344.5 1V131M349.5 1V131M353.5 1V131M358.5 1V131M362.5 1V131M367.5 1V131M372.5 1V131M376.5 1V131M381.5 1V131M385.5 1V131M390.5 1V131M394.5 1V131M399.5 1V131M403.5 1V131M408.5 1V131M413.5 1V131M417.5 1V131M422.5 1V131M426.5 1V131M431.5 1V131M435.5 1V131M440.5 1V131M444.5 1V131M449.5 1V131" stroke="#282828"/><path d="M1 39.5H454M1 65.5H454M1 92.5H454" stroke="#424242"/><path d="M12.5 1V131M39.5 1V131M67.5 1V131M99.5 1V131M126.5 1V131M153.5 1V131M180.5 1V131M208.5 1V131M240.5 1V131M267.5 1V131M294.5 1V131M322.5 1V131M349.5 1V131M381.5 1V131" stroke="#3e3e3e"/><path d="M26.5 1V131M53.5 1V131M80.5 1V131M112.5 1V131M140.5 1V131M167.5 1V131M194.5 1V131M221.5 1V131M253.5 1V131M281.5 1V131M308.5 1V131M335.5 1V131M362.5 1V131M394.5 1V131" stroke="#6c6c6c"/><path d="M89.5 1V131M231.5 1V131M372.5 1V131" stroke="#aaa200"/></g><path d="M1.4 83.4L6.1 79.7L10.8 79.3L15.5 75.4L20.1 76.5L24.8 78.8L28.6 79.7L33.3 75.4L37.9 77.3L42.6 78.4L47.3 79.1L52 80.6L56.7 81.6L60.4 81.6L65.1 79.7L69.4 76.5L74.5 79.1L78.8 77.8L83.8 78.8L87.6 77.3L92.6 79.3L96.9 77.8L101.6 76.5L106.3 75.4L110.6 73.5L115.7 75.4L120 72.6L124.5 72.6L128.8 73.5L133.4 73.5L138.7 75L142.8 72.8L147.5 72.4L151.8 67.5L156.9 67.5L161.5 66.6L169 66.6L174.3 67.9L179.3 71.3L184 69.4L188.7 68.5L191.5 67L193 66L197.1 64.3L211.7 64.3L233.6 64.3L238.5 61.5L242.6 62.8L247.3 61.9L252 62.7L256.7 61.9L265.7 61.9L270.1 64.1L274.8 62.7L283.8 61.9L288.5 61.9L292.8 64.7L297.3 62.7L301.6 68.5L306.3 66.6L311 65.6L315.7 64.7L320.3 66.6L324.6 67.5L329.3 65.6L333.8 68.5L338.5 67.5L342.8 68.5L347.5 65.6L351.8 67.1L356.5 71.3L361.5 71.6L366.2 70.3L370.9 68.6L375.6 69.4L379.7 70.7L384 68.6L388.7 67.5L392.8 62.5L397.5 65.6L401.8 64.3L407 64.3" stroke="#f06c10" stroke-width="1.1" fill="none" stroke-linejoin="round" /><path d="M1.4 120.9L6.1 105L10.8 102.7L15.5 90.4L20.1 92.8L24.8 97.5L28.6 99.4L33.3 81.6L37.9 86.2L42.6 91.5L47.3 92.8L52 97.5L56.7 99.4L60.4 99.4L65.1 90L69.4 74.1L74.5 84.4L78.8 78.4L83.8 81.6L87.6 76.5L92.6 84.4L96.9 79.7L101.6 73.5L106.3 67.1L110.6 59.1L115.7 67.5L120 57.2L124.5 59.1L128.8 64.1L133.4 60.4L138.7 75L142.8 62.3L147.5 60L151.8 42.2L156.9 42.2L161.5 41.3L169 41.3L174.3 48.8L179.3 70.3L184 63.8L188.7 60L191.5 52.5L193 48.8L197.1 42.8L201.4 40.4L206.5 45.4L210.8 46.5L215.5 45.4L220.1 44.3L225.8 44.3L230.4 43.2L233.6 43.2L238.5 29.7L242.6 44.1L247.3 40.4L252 46.5L256.7 41.7L260.8 42.4L265.7 39.8L270.1 65.6L274.8 56.7L279.5 54.8L283.8 50.7L288.5 51.6L292.8 69.4L297.3 56.3L301.6 87.2L306.3 76L311 70.3L315.7 65.6L320.3 74.1L324.6 78.8L329.3 66.6L333.8 81.6L338.5 73.5L342.8 77.5L347.5 66L351.8 71.3L356.5 85.3L361.5 87.6L366.2 78.8L370.9 73.5L375.6 76L379.7 79.3L384 69.4L388.7 62.8L392.8 45L397.5 58.5L401.8 55.5L407 55.5" stroke="#8c14e0" stroke-width="1.1" fill="none" stroke-linejoin="round" /><path d="M0.5 0.5H454.5V131.5H0.5z" stroke="#000" stroke-width="1" fill="none" shape-rendering="crispEdges"/></svg>
<span class="t" style="left:519.05px;top:590.30px;line-height:14px;color:#000;transform:scaleX(0.7860);">70</span>
<span class="t" style="left:519.05px;top:617.00px;line-height:14px;color:#000;transform:scaleX(0.7860);">50</span>
<span class="t" style="left:519.05px;top:643.00px;line-height:14px;color:#000;transform:scaleX(0.7860);">30</span>
<div style="left:33.0px;top:697.0px;width:525.0px;height:1px;background:#b4b4b4"></div>
<div class="pn" style="left:33.0px;top:702.0px;width:525.0px;height:166.0px"></div>
<span class="t" style="left:39.00px;top:703.10px;line-height:14px;color:#000;transform:scaleX(0.9438);">MACD:</span>
<span class="t" style="left:82.00px;top:703.10px;line-height:14px;color:#ff0000;transform:scaleX(0.9535);">MACD[12-26]-31.5772</span>
<span class="t" style="left:204.50px;top:703.10px;line-height:14px;color:#00c0c8;transform:scaleX(0.8000);">シグナル</span><span class="t" style="left:242.90px;top:703.10px;line-height:14px;color:#00c0c8;transform:scaleX(0.9569);">[9]-13.2646</span>
<span class="t" style="left:309.00px;top:703.10px;line-height:14px;color:#999;transform:scaleX(0.9500);">乖離</span><span class="t" style="left:331.80px;top:703.10px;line-height:14px;color:#999;transform:scaleX(0.9330);">-18.3126</span>
<svg style="left:37.0px;top:716.0px;background:#000" width="455" height="132" viewBox="0 0 455 132"><g fill="none" stroke-width="1" shape-rendering="crispEdges"><path d="M1 4.5H454M1 8.5H454M1 12.5H454M1 16.5H454M1 20.5H454M1 23.5H454M1 27.5H454M1 31.5H454M1 35.5H454M1 39.5H454M1 43.5H454M1 47.5H454M1 50.5H454M1 54.5H454M1 58.5H454M1 62.5H454M1 66.5H454M1 70.5H454M1 74.5H454M1 77.5H454M1 81.5H454M1 85.5H454M1 89.5H454M1 93.5H454M1 97.5H454M1 101.5H454M1 104.5H454M1 108.5H454M1 112.5H454M1 116.5H454M1 120.5H454M1 124.5H454M1 128.5H454" stroke="#282828"/><path d="M3.5 1V131M8.5 1V131M12.5 1V131M17.5 1V131M21.5 1V131M26.5 1V131M30.5 1V131M35.5 1V131M39.5 1V131M44.5 1V131M49.5 1V131M53.5 1V131M58.5 1V131M62.5 1V131M67.5 1V131M71.5 1V131M76.5 1V131M80.5 1V131M85.5 1V131M89.5 1V131M94.5 1V131M99.5 1V131M103.5 1V131M108.5 1V131M112.5 1V131M117.5 1V131M121.5 1V131M126.5 1V131M130.5 1V131M135.5 1V131M140.5 1V131M144.5 1V131M149.5 1V131M153.5 1V131M158.5 1V131M162.5 1V131M167.5 1V131M171.5 1V131M176.5 1V131M180.5 1V131M185.5 1V131M190.5 1V131M194.5 1V131M199.5 1V131M203.5 1V131M208.5 1V131M212.5 1V131M217.5 1V131M221.5 1V131M226.5 1V131M231.5 1V131M235.5 1V131M240.5 1V131M244.5 1V131M249.5 1V131M253.5 1V131M258.5 1V131M262.5 1V131M267.5 1V131M271.5 1V131M276.5 1V131M281.5 1V131M285.5 1V131M290.5 1V131M294.5 1V131M299.5 1V131M303.5 1V131M308.5 1V131M312.5 1V131M317.5 1V131M322.5 1V131M326.5 1V131M331.5 1V131M335.5 1V131M340.5 1V131M344.5 1V131M349.5 1V131M353.5 1V131M358.5 1V131M362.5 1V131M367.5 1V131M372.5 1V131M376.5 1V131M381.5 1V131M385.5 1V131M390.5 1V131M394.5 1V131M399.5 1V131M403.5 1V131M408.5 1V131M413.5 1V131M417.5 1V131M422.5 1V131M426.5 1V131M431.5 1V131M435.5 1V131M440.5 1V131M444.5 1V131M449.5 1V131" stroke="#282828"/><path d="M1 39.5H454M1 77.5H454M1 116.5H454" stroke="#424242"/><path d="M12.5 1V131M39.5 1V131M67.5 1V131M99.5 1V131M126.5 1V131M153.5 1V131M180.5 1V131M208.5 1V131M240.5 1V131M267.5 1V131M294.5 1V131M322.5 1V131M349.5 1V131M381.5 1V131" stroke="#3e3e3e"/><path d="M26.5 1V131M53.5 1V131M80.5 1V131M112.5 1V131M140.5 1V131M167.5 1V131M194.5 1V131M221.5 1V131M253.5 1V131M281.5 1V131M308.5 1V131M335.5 1V131M362.5 1V131M394.5 1V131" stroke="#6c6c6c"/><path d="M89.5 1V131M231.5 1V131M372.5 1V131" stroke="#aaa200"/></g><path d="M0 39h3V75h-3zM4 39h4V75h-4zM9 39h3V72h-3zM13 39h4V66h-4zM18 39h3V61h-3zM22 39h4V59h-4zM27 39h3V57h-3zM31 39h4V51h-4zM36 39h3V48h-3zM40 39h4V47h-4zM45 39h4V45h-4zM50 39h3V46h-3zM54 39h4V46h-4zM59 39h3V45h-3zM63 39h4V42h-4zM68 37h3V40h-3zM72 36h4V40h-4zM77 33h3V40h-3zM81 33h4V40h-4zM86 30h3V40h-3zM90 31h4V40h-4zM95 31h4V40h-4zM100 29h3V40h-3zM104 27h4V40h-4zM109 24h3V40h-3zM113 24h4V40h-4zM118 23h3V40h-3zM122 23h4V40h-4zM127 24h3V40h-3zM131 24h4V40h-4zM136 28h4V40h-4zM141 28h3V40h-3zM145 28h4V40h-4zM150 24h3V40h-3zM154 22h4V40h-4zM159 21h3V40h-3zM163 21h4V40h-4zM168 22h3V40h-3zM172 24h4V40h-4zM177 30h3V40h-3zM181 33h4V40h-4zM186 34h4V40h-4zM191 33h3V40h-3zM195 30h4V40h-4zM200 30h3V40h-3zM204 30h4V40h-4zM209 31h3V40h-3zM213 32h4V40h-4zM218 33h3V40h-3zM222 34h4V40h-4zM227 35h4V40h-4zM232 36h3V40h-3zM236 35h4V40h-4zM241 36h3V40h-3zM245 36h4V40h-4zM250 37h3V40h-3zM254 37h4V40h-4zM259 37h3V40h-3zM263 38h4V39h-4zM268 39h3V40h-3zM272 39h4V40h-4zM277 39h4V40h-4zM282 39h3V40h-3zM286 39h4V40h-4zM291 39h3V43h-3zM295 39h4V43h-4zM300 39h3V47h-3zM304 39h4V48h-4zM309 39h3V47h-3zM313 39h4V46h-4zM318 39h4V46h-4zM323 39h3V48h-3zM327 39h4V45h-4zM332 39h3V48h-3zM336 39h4V47h-4zM341 39h3V46h-3zM345 39h4V44h-4zM350 39h3V44h-3zM354 39h4V47h-4zM359 39h3V48h-3zM363 39h4V47h-4zM368 39h4V46h-4zM373 39h3V45h-3zM377 39h4V44h-4zM382 39h3V43h-3zM386 40h4V41h-4zM391 34h3V40h-3zM395 34h4V40h-4zM400 33h3V40h-3zM404 32h4V40h-4z" fill="#a2a2a2" shape-rendering="crispEdges"/><path d="M1 40h1V74h-1zM5 40h2V74h-2zM10 40h1V71h-1zM14 40h2V65h-2zM19 40h1V60h-1zM23 40h2V58h-2zM28 40h1V56h-1zM32 40h2V50h-2zM37 40h1V47h-1zM41 40h2V46h-2zM46 40h2V44h-2zM51 40h1V45h-1zM55 40h2V45h-2zM60 40h1V44h-1zM64 40h2V41h-2zM69 38h1V39h-1zM73 37h2V39h-2zM78 34h1V39h-1zM82 34h2V39h-2zM87 31h1V39h-1zM91 32h2V39h-2zM96 32h2V39h-2zM101 30h1V39h-1zM105 28h2V39h-2zM110 25h1V39h-1zM114 25h2V39h-2zM119 24h1V39h-1zM123 24h2V39h-2zM128 25h1V39h-1zM132 25h2V39h-2zM137 29h2V39h-2zM142 29h1V39h-1zM146 29h2V39h-2zM151 25h1V39h-1zM155 23h2V39h-2zM160 22h1V39h-1zM164 22h2V39h-2zM169 23h1V39h-1zM173 25h2V39h-2zM178 31h1V39h-1zM182 34h2V39h-2zM187 35h2V39h-2zM192 34h1V39h-1zM196 31h2V39h-2zM201 31h1V39h-1zM205 31h2V39h-2zM210 32h1V39h-1zM214 33h2V39h-2zM219 34h1V39h-1zM223 35h2V39h-2zM228 36h2V39h-2zM233 37h1V39h-1zM237 36h2V39h-2zM242 37h1V39h-1zM246 37h2V39h-2zM251 38h1V39h-1zM255 38h2V39h-2zM260 38h1V39h-1zM292 40h1V42h-1zM296 40h2V42h-2zM301 40h1V46h-1zM305 40h2V47h-2zM310 40h1V46h-1zM314 40h2V45h-2zM319 40h2V45h-2zM324 40h1V47h-1zM328 40h2V44h-2zM333 40h1V47h-1zM337 40h2V46h-2zM342 40h1V45h-1zM346 40h2V43h-2zM351 40h1V43h-1zM355 40h2V46h-2zM360 40h1V47h-1zM364 40h2V46h-2zM369 40h2V45h-2zM374 40h1V44h-1zM378 40h2V43h-2zM383 40h1V42h-1zM392 35h1V39h-1zM396 35h2V39h-2zM401 34h1V39h-1zM405 33h2V39h-2z" fill="#2e2e2e" shape-rendering="crispEdges"/><path d="M1.4 97.9L6.1 108.5L10.8 115.5L15.5 115.5L20.1 116.6L24.8 118.5L28.6 121.6L33.3 117.3L37.9 116.6L42.6 117.3L47.3 117.3L52 119.8L56.7 121.3L60.4 121.3L65.1 119.2L69.4 113.6L74.5 111.3L78.8 107.6L83.8 104.2L87.6 100.5L92.2 99.7L96.9 97.3L101.6 93L106.3 87.9L110.6 80.4L115.7 77.3L120 71.6L124.5 66.4L128.8 63.6L133.4 60.4L138.7 61.3L142.8 58.5L147.5 55.2L151.8 45.8L156.9 38.3L161.5 32.7L169 27.5L174.3 26.3L179.3 29.3L184 30.2L188.7 30.1L191.5 28L193 27.5L197.1 23.3L201.4 19.2L206.5 18.1L210.8 16.2L215.5 16.2L220.1 15.5L225.8 15.5L230.4 15.5L233.6 14L238.5 12.6L242.6 12.1L247.3 11.5L252 12.5L256.7 11.7L260.8 11.5L265.7 11.7L270.1 14L274.8 15.5L279.5 16.2L283.8 16.4L288.5 17.3L292.8 19.2L297.3 20.5L301.6 26.7L306.3 29.9L311 31.8L315.7 33.1L320.3 34.9L324.6 37.8L329.3 37.9L333.8 40.5L338.5 41.7L342.8 43.5L347.5 43.9L351.8 43.5L356.5 46.7L361.5 50.5L365.3 53.7L370.9 53.7L375.6 54.2L379.7 54.6L384 53.3L388.7 51L392.8 44.9L397.5 42L401.8 39.2L407 37.4" stroke="#e01010" stroke-width="1.1" fill="none" stroke-linejoin="round" /><path d="M1.4 64.1L4.2 71.1L8 79.5L11.7 86.1L16.4 92.6L21.1 98.2L26.7 102.9L32.3 106.1L37.9 108.9L43.6 111L49.2 112.8L54.8 114.5L60.4 116.4L67.9 116.4L73.5 115.1L79.1 112.3L84.8 110L90.4 108L96 106.1L101.6 102.9L107.2 98.8L112.8 94.5L116.6 92.2L122.2 87.4L127.8 82.3L133.4 77.6L139.1 73.5L144.7 70.1L148.4 67.3L154.1 61.7L159.7 55.2L165.3 49.5L170.9 43.9L176.5 40.5L182.1 37.9L187.8 35.9L191.5 34.6L193 34.2L198.6 30.8L204.2 28L209.8 25.2L215.5 22.8L221.1 20.5L226.7 19.2L232.3 18.1L237.9 16.8L243.6 15.8L249.2 14.9L254.8 14.3L260.4 13.4L266 13.4L271.6 13.6L277.3 14L282.9 14.5L288.5 15.5L294.1 17L299.7 19.2L305.4 21.5L311 23.7L316.6 25.6L322.2 27.5L327.8 29.9L333.4 32.3L339.1 34.6L344.7 36.4L350.3 38.3L355.9 40.2L361.5 43L367.2 45.8L372.8 48L378.4 49.5L384 50.5L389.6 50.5L395.2 49.2L400.9 46.7L407 44.3" stroke="#1fbcc4" stroke-width="1.1" fill="none" stroke-linejoin="round" /><path d="M0.5 0.5H454.5V131.5H0.5z" stroke="#000" stroke-width="1" fill="none" shape-rendering="crispEdges"/></svg>
<div style="left:492.0px;top:715.5px;width:65.0px;height:132.5px;overflow:hidden">
<span class="t" style="left:16.80px;top:-5.80px;line-height:14px;color:#000;transform:scaleX(0.7144);">20.0000</span>
<span class="t" style="left:16.80px;top:32.80px;line-height:14px;color:#000;transform:scaleX(0.8446);">0.0000</span>
<span class="t" style="left:13.80px;top:70.80px;line-height:14px;color:#000;transform:scaleX(0.7810);">-20.0000</span>
<span class="t" style="left:13.80px;top:109.60px;line-height:14px;color:#000;transform:scaleX(0.7810);">-40.0000</span>
</div>
<div style="left:33.0px;top:851px;width:525.0px;height:17px;border:1px solid #ababab;background:#fff"></div>
<span class="t" style="left:37.60px;top:853.10px;line-height:14px;color:#000;transform:scaleX(0.9500);">始値</span><span class="t" style="left:60.40px;top:853.10px;line-height:14px;color:#000;transform:scaleX(0.8819);">:102.488</span>
<span class="t" style="left:113.70px;top:853.10px;line-height:14px;color:#000;transform:scaleX(0.9500);">高値</span><span class="t" style="left:136.50px;top:853.10px;line-height:14px;color:#000;transform:scaleX(0.8819);">:102.534</span>
<span class="t" style="left:189.80px;top:853.10px;line-height:14px;color:#000;transform:scaleX(0.9500);">安値</span><span class="t" style="left:212.60px;top:853.10px;line-height:14px;color:#000;transform:scaleX(0.8819);">:102.466</span>
<span class="t" style="left:265.90px;top:853.10px;line-height:14px;color:#000;transform:scaleX(0.9500);">終値</span><span class="t" style="left:288.70px;top:853.10px;line-height:14px;color:#000;transform:scaleX(0.8819);">:102.479</span>
<div class="sb" style="left:334.6px;top:852px;width:15.5px;height:15px"></div>
<svg style="left:338.0px;top:855.6px" width="8" height="8" viewBox="0 0 8 8"><path d="M7.4 0.4v7.2L0.8 4z" fill="#555"/></svg>
<div style="left:350.4px;top:852px;width:104.1px;height:15px;background:linear-gradient(#e8e8e8,#fcfcfc 45%,#fff)"></div>
<div style="left:420.0px;top:852px;width:13.7px;height:15px;background:linear-gradient(#e2e2e2,#cfcfcf 50%,#bdbdbd)"></div>
<div class="sb" style="left:454.5px;top:852px;width:15.5px;height:15px"></div>
<svg style="left:459.0px;top:855.6px" width="8" height="8" viewBox="0 0 8 8"><path d="M0.6 0.4v7.2L7.2 4z" fill="#555"/></svg>
<div style="left:470.5px;top:852px;width:1px;height:15px;background:#c8c8c8"></div>
<span class="t" style="left:474.50px;top:853.10px;line-height:14px;color:#000;transform:scaleX(0.8237);">100</span>
<div class="sb" style="left:494.0px;top:852px;width:15px;height:15px"></div>
<svg style="left:497.5px;top:856.0px" width="8" height="8" viewBox="0 0 8 8"><path d="M0.4 1h7.2L4 7.4z" fill="#555"/></svg>
<div style="left:509.50px;top:852.00px;width:15.50px;height:15.00px;background:#f2f2f2"></div>
<div class="sb" style="left:525.5px;top:852px;width:15.5px;height:15px"></div>
<svg style="left:528.3px;top:854.6px" width="10" height="10" viewBox="0 0 10 10"><path d="M1 5h8M5 1v8" stroke="#4a4a4a" stroke-width="2.800" stroke-linecap="round"/></svg>
<div class="sb" style="left:541.8px;top:852px;width:15.5px;height:15px"></div>
<svg style="left:544.6px;top:854.6px" width="10" height="10" viewBox="0 0 10 10"><path d="M1 5h8" stroke="#4a4a4a" stroke-width="2.800" stroke-linecap="round"/></svg>
<div style="left:567.00px;top:-2.00px;width:519.25px;height:881.00px;background:#f8f8f8"></div>
<div style="left:563.00px;top:-2.00px;width:527.25px;height:27.00px;"></div>
<div class="tb" style="left:563.0px;top:-2.0px;width:527.2px;height:26.6px;border-bottom:1px solid #cfcfcf"></div>
<svg style="left:570.0px;top:5.0px" width="16" height="16" viewBox="0 0 16 16"><rect width="16" height="16" fill="#10295d"/><path d="M4.500 13.800V7.400L8 3.900L11.500 7.400V13.800" fill="none" stroke="#fff" stroke-width="2.700" stroke-linejoin="round"/></svg>
<span class="t" style="left:589.60px;top:6.30px;line-height:14px;color:#777;transform:scaleX(0.8000);">チャート</span><span class="t" style="left:628.00px;top:6.30px;line-height:14px;color:#777;transform:scaleX(0.9818);">: EUR/USD 4</span><span class="t" style="left:697.40px;top:6.30px;line-height:14px;color:#777;transform:scaleX(0.9500);">時間足</span>
<div class="btn" style="left:1057.2px;top:5.0px;width:25.5px;height:15.5px"></div>
<svg style="left:1065.0px;top:7.8px" width="10" height="10" viewBox="0 0 10 10"><path d="M1.5 1.5l7 7M8.5 1.5l-7 7" stroke="#8c8c8c" stroke-width="1.9" fill="none"/></svg>
<div class="btn" style="left:1029.0px;top:5.0px;width:25.5px;height:15.5px"></div>
<svg style="left:1036.8px;top:7.8px" width="10" height="10" viewBox="0 0 10 10"><path d="M1.6 2.4h6.8v6.2H1.6z" stroke="#8c8c8c" stroke-width="1.2" fill="none"/><path d="M1 1.9h8" stroke="#8c8c8c" stroke-width="1.8"/></svg>
<div class="btn" style="left:1000.8px;top:5.0px;width:25.5px;height:15.5px"></div>
<svg style="left:1008.6px;top:7.8px" width="10" height="10" viewBox="0 0 10 10"><path d="M1 8h8" stroke="#8c8c8c" stroke-width="2"/></svg>
<div class="btn" style="left:972.6px;top:5.0px;width:25.5px;height:15.5px"></div>
<svg style="left:980.4px;top:7.8px" width="10" height="10" viewBox="0 0 10 10"><path d="M1.2 8.8L6 4" stroke="#8c8c8c" stroke-width="1.8" fill="none"/><path d="M3.6 3.2L9 1 6.8 6.4z" fill="#8c8c8c"/></svg>
<div class="btn" style="left:923.9px;top:5.0px;width:46.0px;height:15.5px"></div>
<span class="t" style="left:932.55px;top:8.10px;line-height:11px;color:#8a8a8a;font-size:9px;font-weight:bold;transform:scaleX(0.7358);">MENU</span>
<svg style="left:955.3px;top:10.2px" width="8" height="6" viewBox="0 0 8 6"><path d="M0.3 0.6h7.4L4 5.4z" fill="#8c8c8c"/></svg>
<div class="cb" style="left:601.3px;top:32.0px;width:74.0px;height:21px"></div>
<div class="dd" style="left:657.3px;top:33.0px;width:17px;height:19px"></div>
<div class="tri" style="left:661.3px;top:39.5px;"></div>
<span class="t" style="left:604.60px;top:36.50px;line-height:14px;color:#000;transform:scaleX(0.9534);">EUR/USD</span>
<div class="cb" style="left:681.0px;top:32.0px;width:64.5px;height:21px"></div>
<div class="dd" style="left:727.5px;top:33.0px;width:17px;height:19px"></div>
<div class="tri" style="left:731.5px;top:39.5px;"></div>
<span class="t" style="left:684.30px;top:36.50px;line-height:14px;color:#000;transform:scaleX(0.9421);">4</span><span class="t" style="left:690.60px;top:36.50px;line-height:14px;color:#000;transform:scaleX(0.9500);">時間足</span>
<div class="cb" style="left:750.0px;top:32.0px;width:88.5px;height:21px"></div>
<div class="dd" style="left:820.5px;top:33.0px;width:17px;height:19px"></div>
<div class="tri" style="left:824.5px;top:39.5px;"></div>
<span class="t" style="left:753.30px;top:36.50px;line-height:14px;color:#000;transform:scaleX(0.8000);">ローソク</span><span class="t" style="left:791.70px;top:36.50px;line-height:14px;color:#000;transform:scaleX(0.8250);">(BID)</span>
<div class="cb" style="left:855.0px;top:32.0px;width:82.5px;height:21px"></div>
<div class="dd" style="left:919.5px;top:33.0px;width:17px;height:19px"></div>
<div class="tri" style="left:923.5px;top:39.5px;border-top-color:#8a8a8a"></div>
<span class="t" style="left:882.50px;top:36.00px;line-height:14px;color:#666;">/</span>
<span class="t" style="left:900.50px;top:36.00px;line-height:14px;color:#666;">/</span>
<div style="left:943.5px;top:32.0px;width:41.5px;height:21px;border:1px solid #c6c6c6;border-radius:4px;background:linear-gradient(#fbfbfb,#ededed);box-shadow:0 1px 1px rgba(0,0,0,.12)"></div>
<span class="t" style="left:952.20px;top:36.50px;line-height:14px;color:#9a9a9a;">検索</span>
<div class="tool sel" style="left:573.2px;top:60.0px;width:22px;height:22px"></div>
<svg style="left:573.2px;top:60.0px" width="22" height="22" viewBox="0 0 22 22"><path d="M3 7.5h16M7.5 3v16" stroke="#4a4a4a" stroke-width="1" fill="none"/><path d="M9 9.3l0.2 8 2-2 1.6 3.4 1.6-0.8-1.6-3.3 2.8-0.2z" fill="#3c3c3c"/></svg>
<div class="tool" style="left:573.2px;top:85.0px;width:22px;height:22px"></div>
<svg style="left:573.2px;top:85.0px" width="22" height="22" viewBox="0 0 22 22"><path d="M4.500 17.500h12.500" stroke="#666" stroke-width="1"/><path d="M5.600 15.800L15.600 5.600" stroke="#5a5a5a" stroke-width="3.200" stroke-linecap="butt"/><path d="M14.400 4.400l2.600 2.600" stroke="#333" stroke-width="1.800"/><path d="M4.300 17.100l0.600-2.600 2 2z" fill="#444"/></svg>
<div class="tool" style="left:573.2px;top:110.0px;width:22px;height:22px"></div>
<svg style="left:573.2px;top:110.0px" width="22" height="22" viewBox="0 0 22 22"><path d="M3.5 3v12.5H18" stroke="#444" stroke-width="1.2" fill="none"/><path d="M6 10.5l3.3-6 3 6.6 3.2-5.6 2.6 6" stroke="#444" stroke-width="1.2" fill="none"/><path d="M6 14.3c1.6-.4 2.4-2 4-2s2.600 1.800 4.500 1.800 2.600-1 3.800-1.200" stroke="#444" stroke-width="1.1" fill="none"/><path d="M3.500 4.500h1.500M3.500 6.500h1.500M3.500 8.500h1.500M3.500 10.500h1.500M3.500 12.500h1.500" stroke="#444" stroke-width="1"/></svg>
<div class="tool" style="left:573.2px;top:135.0px;width:22px;height:22px"></div>
<svg style="left:573.2px;top:135.0px" width="22" height="22" viewBox="0 0 22 22"><path d="M5 3.500H3.500v15H5M3.500 6.500h1.500M3.500 9.500h1.500M3.500 12.500h1.500M3.500 15.500h1.500" stroke="#444" stroke-width="1.1" fill="none"/><text x="6.200" y="9.600" font-family="Liberation Sans,sans-serif" font-size="6.500" font-weight="bold" fill="#444" textLength="12.500" lengthAdjust="spacingAndGlyphs">70.0</text><text x="6.200" y="16.600" font-family="Liberation Sans,sans-serif" font-size="6.500" font-weight="bold" fill="#444" textLength="12.500" lengthAdjust="spacingAndGlyphs">60.0</text></svg>
<div class="tool" style="left:573.2px;top:160.0px;width:22px;height:22px"></div>
<svg style="left:573.2px;top:160.0px" width="22" height="22" viewBox="0 0 22 22"><circle cx="7" cy="7" r="3.300" fill="#666"/><path d="M5.300 6.200h1.200M7.600 6.200h1.200M5.400 8.200q1.600 1.300 3.200 0" stroke="#aaa" stroke-width=".7" fill="none"/><path d="M15.600 3l1.100 2.600 2.800.2-2.200 1.800.8 2.800-2.500-1.600-2.500 1.600.8-2.800-2.200-1.800 2.800-.2z" fill="#4a4a4a"/><path d="M7 18.400c-2-1.600-3.600-2.800-3.600-4.600 0-1.100.9-1.900 1.900-1.900.7 0 1.300.4 1.700 1 .4-.6 1-1 1.700-1 1 0 1.900.8 1.900 1.900 0 1.800-1.600 3-3.600 4.600z" fill="#4a4a4a"/><circle cx="15.600" cy="15" r="3.300" fill="#666"/><path d="M13.600 15.200h4" stroke="#ccc" stroke-width="1"/></svg>
<div class="tool" style="left:573.2px;top:185.0px;width:22px;height:22px"></div>
<svg style="left:573.2px;top:185.0px" width="22" height="22" viewBox="0 0 22 22"><path d="M2.600 11.400c2.200-3.600 5.200-5.400 8.400-5.400s6.200 1.800 8.400 5.400c-2.200 3.400-5.200 5-8.400 5s-6.200-1.600-8.400-5z" fill="#eee" stroke="#444" stroke-width="1.300"/><circle cx="11" cy="10.400" r="3.900" fill="#3a3a3a"/><path d="M4 9.500c2-2.800 4.400-4.100 7-4.100s5 1.300 7 4.100" stroke="#333" stroke-width="1.600" fill="none"/><circle cx="9.600" cy="9.400" r="1" fill="#fff"/></svg>
<div class="tool" style="left:573.2px;top:210.0px;width:22px;height:22px"></div>
<svg style="left:573.2px;top:210.0px" width="22" height="22" viewBox="0 0 22 22"><path d="M7 3.500h6l2 2v4H7z" fill="#d8d8d8" stroke="#777" stroke-width=".8"/><rect x="2.800" y="8" width="16.400" height="7.200" rx="1.800" fill="#5c5c5c"/><rect x="3" y="8" width="16" height="2" rx="1" fill="#7a7a7a"/><rect x="6.200" y="13" width="9.600" height="6" fill="#d4d4d4" stroke="#666" stroke-width=".8"/><rect x="15" y="10.600" width="2.400" height="1" fill="#eee"/></svg>
<div class="tool" style="left:573.2px;top:235.0px;width:22px;height:22px"></div>
<svg style="left:573.2px;top:235.0px" width="22" height="22" viewBox="0 0 22 22"><rect x="3" y="3.300" width="13" height="10.600" rx="1" fill="#555"/><path d="M4.500 5.700h2.300v2.100H4.500zM7.900 5.700h2.300v2.100H7.900zM11.300 5.700h2.300v2.100h-2.300zM4.500 8.800h2.300v2H4.500zM7.900 8.800h2.300v2H7.900zM4.500 11.600h2.300v1.600H4.500zM7.900 11.600h2.300v1.600H7.900z" fill="#eee"/><rect x="10.800" y="10.200" width="8.200" height="8.600" fill="#f2f2f2"/><path d="M11.300 10.600h6l1.400 1.400v6.400h-7.400z" fill="#444"/><rect x="12.800" y="10.800" width="3.600" height="2.200" fill="#ddd"/><rect x="12.300" y="14.600" width="5.400" height="3.300" fill="#eee"/><path d="M4.200 14.800v2.700h4" stroke="#444" stroke-width="1.300" fill="none"/><path d="M7.600 15.600l2.600 1.900-2.600 1.900z" fill="#444"/></svg>
<div class="pn" style="left:601.0px;top:59.0px;width:479.0px;height:475.0px"></div>
<div style="left:601.0px;top:59.0px;width:479.0px;height:16px;border:1px solid #ababab;background:#f4f4f4"></div>
<span class="t" style="left:605.60px;top:60.70px;line-height:14px;color:#000;transform:scaleX(0.9473);">2014/04/09 00:00</span>
<span class="t" style="left:702.60px;top:60.70px;line-height:14px;color:#000;transform:scaleX(0.9500);">始値</span><span class="t" style="left:725.40px;top:60.70px;line-height:14px;color:#000;transform:scaleX(0.8819);">:1.37931</span>
<span class="t" style="left:774.60px;top:60.70px;line-height:14px;color:#000;transform:scaleX(0.9500);">高値</span><span class="t" style="left:797.40px;top:60.70px;line-height:14px;color:#000;transform:scaleX(0.8990);">:1.38113</span>
<span class="t" style="left:846.60px;top:60.70px;line-height:14px;color:#000;transform:scaleX(0.9500);">安値</span><span class="t" style="left:869.40px;top:60.70px;line-height:14px;color:#000;transform:scaleX(0.8819);">:1.37908</span>
<span class="t" style="left:918.60px;top:60.70px;line-height:14px;color:#000;transform:scaleX(0.9500);">終値</span><span class="t" style="left:941.40px;top:60.70px;line-height:14px;color:#000;transform:scaleX(0.8819);">:1.37935</span>
<span class="t" style="left:607.00px;top:75.10px;line-height:14px;color:#000;">単純移動平均</span><span class="t" style="left:679.15px;top:75.10px;line-height:14px;color:#000;">:</span>
<span class="t" style="left:688.40px;top:75.10px;line-height:14px;color:#8c00ff;transform:scaleX(0.9500);">短期</span><span class="t" style="left:711.20px;top:75.10px;line-height:14px;color:#8c00ff;transform:scaleX(0.9380);">[5]1.37677</span>
<span class="t" style="left:772.90px;top:75.10px;line-height:14px;color:#ff6a00;transform:scaleX(0.9500);">長期</span><span class="t" style="left:795.70px;top:75.10px;line-height:14px;color:#ff6a00;transform:scaleX(0.9258);">[21]1.37261</span>
<span class="t" style="left:607.00px;top:89.10px;line-height:14px;color:#000;transform:scaleX(0.7634);">ボリンジャーバンド</span><span class="t" style="left:689.45px;top:89.10px;line-height:14px;color:#000;transform:scaleX(0.7634);">:</span>
<span class="t" style="left:697.80px;top:89.10px;line-height:14px;color:#0030ff;transform:scaleX(0.9500);">基準線</span><span class="t" style="left:732.00px;top:89.10px;line-height:14px;color:#0030ff;transform:scaleX(0.9431);">[21]1.37262</span>
<span class="t" style="left:800.30px;top:89.10px;line-height:14px;color:#0a80ff;transform:scaleX(0.9500);">偏差</span><span class="t" style="left:823.10px;top:89.10px;line-height:14px;color:#0a80ff;transform:scaleX(0.9248);">A</span><span class="t" style="left:830.51px;top:89.10px;line-height:14px;color:#0a80ff;transform:scaleX(0.9500);">上</span><span class="t" style="left:841.91px;top:89.10px;line-height:14px;color:#0a80ff;transform:scaleX(0.9248);">[2.00]1.37855</span>
<span class="t" style="left:918.30px;top:89.10px;line-height:14px;color:#0a80ff;transform:scaleX(0.9500);">偏差</span><span class="t" style="left:941.10px;top:89.10px;line-height:14px;color:#0a80ff;transform:scaleX(0.9248);">A</span><span class="t" style="left:948.51px;top:89.10px;line-height:14px;color:#0a80ff;transform:scaleX(0.9500);">下</span><span class="t" style="left:959.91px;top:89.10px;line-height:14px;color:#0a80ff;transform:scaleX(0.9248);">[2.00]1.36668</span>
<span class="t" style="left:1036.30px;top:89.10px;line-height:14px;color:#60a8ff;transform:scaleX(0.9500);">偏差</span><span class="t" style="left:1059.10px;top:89.10px;line-height:14px;color:#60a8ff;transform:scaleX(0.9248);">B</span><span class="t" style="left:1066.51px;top:89.10px;line-height:14px;color:#60a8ff;transform:scaleX(0.9500);">上</span><span class="t" style="left:1077.91px;top:89.10px;line-height:14px;color:#60a8ff;transform:scaleX(0.9248);width:1.18px;overflow:hidden;">[3.00]1.38152</span>
<div style="left:602.00px;top:103.00px;width:3.00px;height:427.00px;background:#fff"></div>
<span class="t" style="left:675.50px;top:103.50px;line-height:14px;color:#000;transform:scaleX(0.9490);">04/12</span>
<span class="t" style="left:728.90px;top:103.50px;line-height:14px;color:#000;transform:scaleX(0.9490);">04/16</span>
<span class="t" style="left:778.70px;top:103.50px;line-height:14px;color:#000;transform:scaleX(0.9490);">04/18</span>
<span class="t" style="left:811.70px;top:103.50px;line-height:14px;color:#000;transform:scaleX(0.9490);">04/21</span>
<span class="t" style="left:856.80px;top:103.50px;line-height:14px;color:#000;transform:scaleX(0.9490);">04/23</span>
<span class="t" style="left:905.60px;top:103.50px;line-height:14px;color:#000;transform:scaleX(0.9490);">04/25</span>
<span class="t" style="left:938.50px;top:103.50px;line-height:14px;color:#000;transform:scaleX(0.9490);">04/28</span>
<div style="left:602.00px;top:103.00px;width:93.50px;height:14.00px;background:#3c5280;border-top:1px solid #142c62;border-bottom:1px solid #142c62"></div>
<span class="t" style="left:603.00px;top:103.30px;line-height:14px;color:#fff;transform:scaleX(0.9473);">2014/04/09 00:00</span>
<svg style="left:605.0px;top:117.0px;background:#000" width="409" height="413" viewBox="0 0 409 413"><g fill="none" stroke-width="1" shape-rendering="crispEdges"><path d="M1 5.5H408M1 9.5H408M1 14.5H408M1 19.5H408M1 23.5H408M1 28.5H408M1 33.5H408M1 37.5H408M1 42.5H408M1 47.5H408M1 51.5H408M1 56.5H408M1 61.5H408M1 65.5H408M1 70.5H408M1 75.5H408M1 79.5H408M1 84.5H408M1 89.5H408M1 93.5H408M1 98.5H408M1 103.5H408M1 107.5H408M1 112.5H408M1 116.5H408M1 121.5H408M1 126.5H408M1 130.5H408M1 135.5H408M1 140.5H408M1 144.5H408M1 149.5H408M1 154.5H408M1 158.5H408M1 163.5H408M1 168.5H408M1 172.5H408M1 177.5H408M1 182.5H408M1 186.5H408M1 191.5H408M1 196.5H408M1 200.5H408M1 205.5H408M1 210.5H408M1 214.5H408M1 219.5H408M1 224.5H408M1 228.5H408M1 233.5H408M1 238.5H408M1 242.5H408M1 247.5H408M1 252.5H408M1 256.5H408M1 261.5H408M1 266.5H408M1 270.5H408M1 275.5H408M1 280.5H408M1 284.5H408M1 289.5H408M1 294.5H408M1 298.5H408M1 303.5H408M1 308.5H408M1 312.5H408M1 317.5H408M1 322.5H408M1 326.5H408M1 331.5H408M1 336.5H408M1 340.5H408M1 345.5H408M1 350.5H408M1 354.5H408M1 359.5H408M1 364.5H408M1 368.5H408M1 373.5H408M1 378.5H408M1 382.5H408M1 387.5H408M1 392.5H408M1 396.5H408M1 401.5H408M1 406.5H408M1 410.5H408" stroke="#282828"/><path d="M3.5 1V412M7.5 1V412M11.5 1V412M15.5 1V412M19.5 1V412M23.5 1V412M27.5 1V412M31.5 1V412M35.5 1V412M39.5 1V412M43.5 1V412M48.5 1V412M52.5 1V412M56.5 1V412M60.5 1V412M64.5 1V412M68.5 1V412M72.5 1V412M76.5 1V412M80.5 1V412M84.5 1V412M88.5 1V412M93.5 1V412M97.5 1V412M101.5 1V412M105.5 1V412M109.5 1V412M113.5 1V412M117.5 1V412M121.5 1V412M125.5 1V412M129.5 1V412M133.5 1V412M138.5 1V412M142.5 1V412M146.5 1V412M150.5 1V412M154.5 1V412M158.5 1V412M162.5 1V412M166.5 1V412M170.5 1V412M174.5 1V412M178.5 1V412M183.5 1V412M187.5 1V412M191.5 1V412M195.5 1V412M199.5 1V412M203.5 1V412M207.5 1V412M211.5 1V412M215.5 1V412M219.5 1V412M223.5 1V412M228.5 1V412M232.5 1V412M236.5 1V412M240.5 1V412M244.5 1V412M248.5 1V412M252.5 1V412M256.5 1V412M260.5 1V412M264.5 1V412M268.5 1V412M272.5 1V412M277.5 1V412M281.5 1V412M285.5 1V412M289.5 1V412M293.5 1V412M297.5 1V412M301.5 1V412M305.5 1V412M309.5 1V412M313.5 1V412M317.5 1V412M322.5 1V412M326.5 1V412M330.5 1V412M334.5 1V412M338.5 1V412M342.5 1V412M346.5 1V412M350.5 1V412M354.5 1V412M358.5 1V412M362.5 1V412M367.5 1V412M371.5 1V412M375.5 1V412M379.5 1V412M383.5 1V412M387.5 1V412M391.5 1V412M395.5 1V412M399.5 1V412M403.5 1V412M407.5 1V412" stroke="#282828"/><path d="M1 19.5H408M1 65.5H408M1 112.5H408M1 158.5H408M1 205.5H408M1 252.5H408M1 298.5H408M1 345.5H408M1 392.5H408" stroke="#424242"/><path d="M11.5 1V412M35.5 1V412M60.5 1V412M88.5 1V412M113.5 1V412M138.5 1V412M162.5 1V412M187.5 1V412M215.5 1V412M240.5 1V412M264.5 1V412M289.5 1V412M313.5 1V412M342.5 1V412" stroke="#3e3e3e"/><path d="M23.5 1V412M48.5 1V412M72.5 1V412M101.5 1V412M125.5 1V412M150.5 1V412M174.5 1V412M199.5 1V412M228.5 1V412M252.5 1V412M277.5 1V412M301.5 1V412M326.5 1V412M354.5 1V412" stroke="#6c6c6c"/><path d="M80.5 1V412M207.5 1V412M334.5 1V412" stroke="#aaa200"/></g><path d="M1 155.5H408" stroke="#ff9a10" stroke-width="1.2" fill="none"/><path d="M1.4 193L6.1 177L11.7 162.8L17.3 147.8L23 129.1L28.6 108.5L34.2 92.6L39.8 82.3L45.4 69.2L51 57.9L56.7 46.7L61.4 38.3L67 34.2L70.7 35.5L75.4 40.7L81 46.7L86.6 53.3L92.2 59.8L97.9 68.2L103.5 73.3L109.1 71.1L114.7 66.4L120.3 61.3L126 60.4L131.6 62.1L137.2 68.2L142.8 76.7L148.4 89.8L154 104.8L159.7 123.5L163.4 138.5L167.2 145L172.8 146.3L176.5 149.3L182.1 150.6L185 149.9L192.5 150.4L200 150.4L205.6 152.3L215 152.3L224.3 151.9L231.8 148.9L239.3 147.2L243 148.2L248.7 153.2L252.4 157.9L256.2 165.4L259.9 170.1L265.5 170.1L269.3 166.3L273 160.7L278.6 159.4L286.1 159.4L293.6 157L301.1 155.7L306.7 155.1L312.3 151.4L319.8 150L327.3 149.5L332.9 150L338.6 155.1L343.2 155.7L346 152.3L349.8 144.8L355.4 142L361 138.8L365.7 136.4" stroke="#5aa6ee" stroke-width="1.05" fill="none" stroke-linejoin="round" /><path d="M1.4 358.1L5.2 363.2L9.9 366.9L15.5 368.8L21.1 372L24.8 378.2L28.6 379.5L33.3 377.6L37.9 369.7L43.6 362.2L49.2 353.8L54.8 343.5L58.5 338.8L64.2 326.7L68.8 310.8L73.5 291.1L78.2 275.2L79.1 273.5L84.8 260.4L90.4 250.1L96 236L100.7 225.7L105.4 224.4L111 231.4L116.6 241.6L120.3 248.2L126 254.8L131.6 260L140 262.2L144.7 258.5L148.4 256.6L155.9 245.4L161.5 232.3L165.3 223.9L169 225.2L174.6 222.9L182.1 223.3L185 223.4L192.5 223.4L198.1 223.1L203.7 219.3L209.3 219.7L218.7 218.2L224.3 219.7L229.9 223.1L235.6 226.8L241.2 229.1L248.7 227.2L256.2 223.8L263.6 223.1L268.3 227.2L273 230.6L282.4 230.9L291.7 231.3L301.1 231.5L307.7 232.8L314.2 230.9L319.8 227.2L325.5 222.5L331.1 219.7L336.7 212.2L340.4 207.5L344.2 203.8L348.9 210.7L353.5 210.3L359.2 211.8L365.7 210.3" stroke="#5aa6ee" stroke-width="1.05" fill="none" stroke-linejoin="round" /><path d="M1.4 220.1L8 207.9L15.5 193.9L21.1 178L26.7 159.1L32.3 142.2L37.9 131L43.6 118.8L49.2 106.6L54.8 95.4L60.4 87L66 82.7L70.7 81.7L79.1 82.7L84.8 85.7L90.4 88.8L96 94.5L101.6 98.2L107.2 98.2L114.7 95.4L121.3 92.6L126.9 93.5L132.5 97.3L139.1 105.7L144.7 115.1L150.3 127.2L155.9 140.3L161.5 153.4L165.3 158.1L170.9 158.1L176.5 161.3L182.1 162.4L185 162L192.5 162.6L200 162.6L207.5 163.9L215 164.5L224.3 163.5L231.8 162L239.3 161.3L244.9 163.1L249.6 168.2L254.3 175.7L259 179.4L264.6 178.9L269.3 174.8L274.9 171.4L282.4 171L289.9 169.5L297.4 168.8L304.9 167.6L312.3 165L319.8 163.1L327.3 162.6L334.8 163.1L340.4 164.5L344.2 163.9L347.9 158.8L352.6 154.2L357.3 152.3L362 150L365.7 148.5" stroke="#1c7fe6" stroke-width="1.05" fill="none" stroke-linejoin="round" /><path d="M1.4 330L6.1 333.8L11.7 334.5L17.3 334.5L21.1 333.6L25.8 335.1L30.5 332.7L35.1 327.6L39.8 320.1L45.4 311.7L51 301.4L56.7 293L62.3 283.6L67 272.4L70.7 263L73.5 251L79.1 236L84.8 227.6L90.4 217.3L96 207L100.7 200.4L105.4 199.5L111 204.2L116.6 211.7L120.3 217.3L126 220.1L131.6 223.9L140.9 228.5L148.4 228.9L155.9 222.9L161.5 215.4L165.3 210.8L172.8 210.8L182.1 211.3L185 211.3L192.5 211.3L198.1 211.3L203.7 208.1L209.3 207.5L216.8 207.5L224.3 208.1L229.9 212.2L235.6 216.9L241.2 219.3L248.7 218.8L256.2 215.6L263.6 215L269.3 217.5L278.6 218.2L288 218.8L297.4 218.8L306.7 219.3L314.2 216.9L319.8 213.1L325.5 210L331.1 207.5L336.7 201.9L340.4 198.2L344.2 195.7L348.9 199.5L353.5 198.7L359.2 199.5L365.7 198.7" stroke="#1c7fe6" stroke-width="1.05" fill="none" stroke-linejoin="round" /><path d="M1 195h1V215h-1zM0 207h3V215h-3zM17 198h1V219h-1zM16 202h3V217h-3zM21 179h1V215h-1zM20 184h3V204h-3zM25 152h1V205h-1zM24 155h3V185h-3zM41 136h1V168h-1zM40 139h3V167h-3zM45 128h1V157h-1zM44 131h4V139h-4zM50 114h1V132h-1zM49 122h3V132h-3zM58 116h1V129h-1zM57 116h3V128h-3zM66 108h1V131h-1zM65 121h3V123h-3zM86 154h1V168h-1zM85 159h3V166h-3zM103 180h1V198h-1zM102 187h3V193h-3zM123 175h1V216h-1zM122 184h3V209h-3zM131 191h1V200h-1zM130 193h3V198h-3zM135 188h1V201h-1zM134 191h4V194h-4zM140 177h1V192h-1zM139 188h3V192h-3zM144 159h1V191h-1zM143 170h3V189h-3zM152 176h1V204h-1zM151 189h3V201h-3zM160 168h1V191h-1zM159 169h3V191h-3zM168 146h1V174h-1zM167 157h3V170h-3zM185 189h1V199h-1zM184 192h3V194h-3zM189 188h1V196h-1zM188 189h3V193h-3zM217 183h1V198h-1zM216 184h3V198h-3zM238 209h1V216h-1zM237 210h3V216h-3zM242 200h1V221h-1zM241 201h3V210h-3zM246 186h1V212h-1zM245 191h3V202h-3zM254 201h1V216h-1zM253 204h3V211h-3zM258 198h1V206h-1zM257 199h3V205h-3zM262 188h1V207h-1zM261 191h3V199h-3zM266 171h1V194h-1zM265 187h3V192h-3zM270 155h1V209h-1zM269 166h3V187h-3zM283 188h1V193h-1zM282 189h3V192h-3zM287 185h1V193h-1zM286 188h3V190h-3zM291 179h1V196h-1zM290 180h3V189h-3zM299 180h1V216h-1zM298 188h3V190h-3zM303 175h1V190h-1zM302 184h3V189h-3zM307 174h1V184h-1zM306 176h3V184h-3zM311 171h1V182h-1zM310 174h3V177h-3zM320 161h1V180h-1zM318 173h4V176h-4zM324 162h1V180h-1zM323 173h3V175h-3zM328 166h1V176h-1zM327 172h3V174h-3zM336 167h1V172h-1zM335 169h3V171h-3zM344 171h1V190h-1zM343 172h3V184h-3zM348 132h1V173h-1zM347 144h3V172h-3zM356 153h1V170h-1zM355 156h3V165h-3zM365 154h1V159h-1zM363 155h4V158h-4z" fill="#ff2a2a" shape-rendering="crispEdges"/><path d="M1 208h1V214h-1zM17 203h1V216h-1zM21 185h1V203h-1zM25 156h1V184h-1zM41 140h1V166h-1zM45 132h2V138h-2zM50 123h1V131h-1zM58 117h1V127h-1zM86 160h1V165h-1zM103 188h1V192h-1zM123 185h1V208h-1zM131 194h1V197h-1zM135 192h2V193h-2zM140 189h1V191h-1zM144 171h1V188h-1zM152 190h1V200h-1zM160 170h1V190h-1zM168 158h1V169h-1zM189 190h1V192h-1zM217 185h1V197h-1zM238 211h1V215h-1zM242 202h1V209h-1zM246 192h1V201h-1zM254 205h1V210h-1zM258 200h1V204h-1zM262 192h1V198h-1zM266 188h1V191h-1zM270 167h1V186h-1zM283 190h1V191h-1zM291 181h1V188h-1zM303 185h1V188h-1zM307 177h1V183h-1zM311 175h1V176h-1zM319 174h2V175h-2zM344 173h1V183h-1zM348 145h1V171h-1zM356 157h1V164h-1zM364 156h2V157h-2z" fill="#d41c1c" shape-rendering="crispEdges"/><path d="M5 208h1V216h-1zM4 212h3V214h-3zM9 211h1V219h-1zM8 212h3V217h-3zM13 212h1V226h-1zM12 216h3V218h-3zM29 148h1V164h-1zM28 156h3V158h-3zM33 141h1V164h-1zM32 156h3V160h-3zM37 156h1V173h-1zM36 159h3V166h-3zM54 121h1V132h-1zM53 122h3V128h-3zM62 112h1V124h-1zM61 116h3V121h-3zM70 118h1V148h-1zM69 121h3V126h-3zM74 112h1V127h-1zM73 125h3V127h-3zM78 124h1V132h-1zM77 126h3V128h-3zM82 152h1V168h-1zM81 153h3V166h-3zM90 153h1V174h-1zM89 159h4V170h-4zM95 148h1V192h-1zM94 169h3V177h-3zM99 175h1V199h-1zM98 176h3V193h-3zM107 185h1V194h-1zM106 187h3V192h-3zM111 188h1V195h-1zM110 191h3V193h-3zM115 186h1V197h-1zM114 191h3V195h-3zM119 193h1V216h-1zM118 194h3V209h-3zM127 183h1V206h-1zM126 184h3V198h-3zM148 166h1V201h-1zM147 170h3V201h-3zM156 185h1V195h-1zM155 187h3V191h-3zM164 164h1V173h-1zM163 169h3V171h-3zM172 148h1V180h-1zM171 157h3V174h-3zM176 171h1V197h-1zM175 174h3V190h-3zM180 189h1V196h-1zM179 189h4V194h-4zM193 186h1V192h-1zM192 190h3V192h-3zM197 187h1V192h-1zM196 190h3V192h-3zM201 189h1V196h-1zM200 190h3V192h-3zM205 190h1V200h-1zM204 191h3V193h-3zM209 191h1V195h-1zM208 192h3V194h-3zM213 192h1V203h-1zM212 193h3V198h-3zM221 178h1V189h-1zM220 184h3V189h-3zM225 185h1V205h-1zM224 188h4V204h-4zM230 203h1V219h-1zM229 204h3V212h-3zM234 210h1V216h-1zM233 210h3V216h-3zM250 183h1V217h-1zM249 191h3V210h-3zM275 164h1V190h-1zM273 166h4V180h-4zM279 179h1V195h-1zM278 180h3V192h-3zM295 167h1V193h-1zM294 180h3V190h-3zM315 173h1V178h-1zM314 174h3V176h-3zM332 170h1V178h-1zM331 173h3V175h-3zM340 168h1V193h-1zM339 169h3V184h-3zM352 137h1V166h-1zM351 144h3V165h-3zM360 156h1V163h-1zM359 156h3V158h-3z" fill="#4a4af6" shape-rendering="crispEdges"/><path d="M9 213h1V216h-1zM33 157h1V159h-1zM37 160h1V165h-1zM54 123h1V127h-1zM62 117h1V120h-1zM70 122h1V125h-1zM82 154h1V165h-1zM90 160h2V169h-2zM95 170h1V176h-1zM99 177h1V192h-1zM107 188h1V191h-1zM115 192h1V194h-1zM119 195h1V208h-1zM127 185h1V197h-1zM148 171h1V200h-1zM156 188h1V190h-1zM172 158h1V173h-1zM176 175h1V189h-1zM180 190h2V193h-2zM213 194h1V197h-1zM221 185h1V188h-1zM225 189h2V203h-2zM230 205h1V211h-1zM234 211h1V215h-1zM250 192h1V209h-1zM274 167h2V179h-2zM279 181h1V191h-1zM295 181h1V189h-1zM340 170h1V183h-1zM352 145h1V164h-1z" fill="#3232b4" shape-rendering="crispEdges"/><path d="M1.4 275.4L9.9 268.8L17.3 261.3L24.8 250.1L32.3 237.9L39.8 225.7L47.3 212.6L54.8 199.5L62.3 186.4L66 178L71.6 168.4L77.3 160.9L82.9 156.3L90.4 151.9L97.9 149.7L105.4 149.3L111 150.6L116.6 153.8L124.1 157.2L131.6 161.9L139.1 166.6L146.6 172.2L152.2 178L155.9 180.2L161.5 183.2L169 185.1L176.5 185.9L182.1 186.4L185 186L192.5 186.4L200 186.4L205.6 185.6L213.1 186L219.6 185.1L226.2 187.5L233.7 188.8L241.2 191.2L248.7 193.5L254.3 195.7L259.9 196.9L265.5 195.7L273 195L280.5 195L289.9 194.4L299.2 193.9L306.7 193.5L314.2 191.2L321.7 187.9L329.2 185.1L336.7 183.2L344.2 179.4L349.8 176.6L355.4 176.1L361 175.1L365.7 173.3" stroke="#e0662c" stroke-width="1.05" fill="none" stroke-linejoin="round" /><path d="M1.4 237.9L6.1 226.7L11.7 216.4L17.3 211.3L23 203.3L27.6 189.2L31.4 178L36.1 164.7L41.7 153.4L47.3 144.1L52.9 134.7L57.6 127.2L62.3 123.1L67 121.2L73.5 121.2L78.2 123.9L82.9 132.8L88.5 144.1L94.1 155.3L98.8 172.2L101.6 176.1L107.2 184.5L112.9 190.1L118.5 193.9L124.1 194.8L131.6 195.8L137.2 195.2L142.8 191.1L150.3 187.3L157.8 185.1L163.4 179.9L169 173.3L175.6 171.4L180.3 174.2L185 181.3L188.8 187.9L194.4 190.7L200 190.7L205.6 191.2L213.1 191.6L218.7 190.1L224.3 189.7L229.9 195.4L235.6 201.9L241.2 207.5L246.8 206.2L252.4 204.4L258 201L263.6 198.7L269.3 193.5L274.9 185.1L280.5 182.6L286.1 182.6L291.7 185.1L297.4 187.9L303 186.9L308.6 183.2L314.2 180L319.8 176.6L325.5 174.4L331.1 173.4L336.7 172.9L340.4 174.4L345.1 174.4L349.8 169.5L355.4 164.5L361 157.9L365.7 155.1" stroke="#9a1fe8" stroke-width="1.1" fill="none" stroke-linejoin="round" /><path d="M0.5 0.5H408.5V412.5H0.5z" stroke="#000" stroke-width="1" fill="none" shape-rendering="crispEdges"/><text x="44.5" y="108.2" fill="#ff7a00" font-family="Liberation Sans,sans-serif" font-size="12.2">1.39053</text><text x="146.6" y="146.2" fill="#ff7a00" font-family="Liberation Sans,sans-serif" font-size="12.2">1.38643</text><text x="326.8" y="132" fill="#ff7a00" font-family="Liberation Sans,sans-serif" font-size="12.2">1.38793</text><text x="97.9" y="232" fill="#00c020" font-family="Liberation Sans,sans-serif" font-size="12.2">1.37888</text><text x="220.5" y="236.1" fill="#00c020" font-family="Liberation Sans,sans-serif" font-size="12.2">1.37848</text></svg>
<span class="t" style="left:1028.30px;top:501.50px;line-height:14px;color:#000;transform:scaleX(0.8297);">1.36000</span>
<span class="t" style="left:1028.30px;top:454.85px;line-height:14px;color:#000;transform:scaleX(0.8297);">1.36500</span>
<span class="t" style="left:1028.30px;top:408.20px;line-height:14px;color:#000;transform:scaleX(0.8297);">1.37000</span>
<span class="t" style="left:1028.30px;top:361.55px;line-height:14px;color:#000;transform:scaleX(0.8297);">1.37500</span>
<span class="t" style="left:1028.30px;top:314.90px;line-height:14px;color:#000;transform:scaleX(0.8297);">1.38000</span>
<span class="t" style="left:1028.30px;top:268.25px;line-height:14px;color:#000;transform:scaleX(0.8297);">1.38500</span>
<span class="t" style="left:1028.30px;top:221.60px;line-height:14px;color:#000;transform:scaleX(0.8297);">1.39000</span>
<span class="t" style="left:1028.30px;top:174.95px;line-height:14px;color:#000;transform:scaleX(0.8297);">1.39500</span>
<span class="t" style="left:1028.30px;top:128.30px;line-height:14px;color:#000;transform:scaleX(0.8297);">1.40000</span>
<div style="left:1014.00px;top:263.00px;width:65.00px;height:19.00px;background:#f8982e;border-top:1px solid #ef8410;border-bottom:1px solid #ef8410"></div>
<span class="t" style="left:1028.30px;top:266.00px;line-height:14px;color:#fff;transform:scaleX(0.8297);">1.38545</span>
<div style="left:601.0px;top:537.0px;width:479.0px;height:1px;background:#b4b4b4"></div>
<div class="pn" style="left:601.0px;top:542.0px;width:479.0px;height:151.0px"></div>
<span class="t" style="left:607.00px;top:543.10px;line-height:14px;color:#000;transform:scaleX(0.8996);">RSI:</span>
<span class="t" style="left:634.50px;top:543.10px;line-height:14px;color:#8c00ff;transform:scaleX(0.9500);">短期</span><span class="t" style="left:657.30px;top:543.10px;line-height:14px;color:#8c00ff;transform:scaleX(0.9291);">[9]82.0252</span>
<span class="t" style="left:718.50px;top:543.10px;line-height:14px;color:#ff6a00;transform:scaleX(0.9500);">長期</span><span class="t" style="left:741.30px;top:543.10px;line-height:14px;color:#ff6a00;transform:scaleX(0.9258);">[42]53.0508</span>
<svg style="left:605.0px;top:556.0px;background:#000" width="409" height="133" viewBox="0 0 409 133"><g fill="none" stroke-width="1" shape-rendering="crispEdges"><path d="M1 2.5H408M1 5.5H408M1 7.5H408M1 10.5H408M1 13.5H408M1 15.5H408M1 18.5H408M1 21.5H408M1 23.5H408M1 26.5H408M1 29.5H408M1 31.5H408M1 34.5H408M1 37.5H408M1 39.5H408M1 42.5H408M1 45.5H408M1 47.5H408M1 50.5H408M1 53.5H408M1 55.5H408M1 58.5H408M1 61.5H408M1 63.5H408M1 66.5H408M1 69.5H408M1 71.5H408M1 74.5H408M1 77.5H408M1 79.5H408M1 82.5H408M1 85.5H408M1 87.5H408M1 90.5H408M1 93.5H408M1 95.5H408M1 98.5H408M1 101.5H408M1 103.5H408M1 106.5H408M1 109.5H408M1 111.5H408M1 114.5H408M1 116.5H408M1 119.5H408M1 122.5H408M1 124.5H408M1 127.5H408M1 130.5H408" stroke="#282828"/><path d="M3.5 1V132M7.5 1V132M11.5 1V132M15.5 1V132M19.5 1V132M23.5 1V132M27.5 1V132M31.5 1V132M35.5 1V132M39.5 1V132M43.5 1V132M48.5 1V132M52.5 1V132M56.5 1V132M60.5 1V132M64.5 1V132M68.5 1V132M72.5 1V132M76.5 1V132M80.5 1V132M84.5 1V132M88.5 1V132M93.5 1V132M97.5 1V132M101.5 1V132M105.5 1V132M109.5 1V132M113.5 1V132M117.5 1V132M121.5 1V132M125.5 1V132M129.5 1V132M133.5 1V132M138.5 1V132M142.5 1V132M146.5 1V132M150.5 1V132M154.5 1V132M158.5 1V132M162.5 1V132M166.5 1V132M170.5 1V132M174.5 1V132M178.5 1V132M183.5 1V132M187.5 1V132M191.5 1V132M195.5 1V132M199.5 1V132M203.5 1V132M207.5 1V132M211.5 1V132M215.5 1V132M219.5 1V132M223.5 1V132M228.5 1V132M232.5 1V132M236.5 1V132M240.5 1V132M244.5 1V132M248.5 1V132M252.5 1V132M256.5 1V132M260.5 1V132M264.5 1V132M268.5 1V132M272.5 1V132M277.5 1V132M281.5 1V132M285.5 1V132M289.5 1V132M293.5 1V132M297.5 1V132M301.5 1V132M305.5 1V132M309.5 1V132M313.5 1V132M317.5 1V132M322.5 1V132M326.5 1V132M330.5 1V132M334.5 1V132M338.5 1V132M342.5 1V132M346.5 1V132M350.5 1V132M354.5 1V132M358.5 1V132M362.5 1V132M367.5 1V132M371.5 1V132M375.5 1V132M379.5 1V132M383.5 1V132M387.5 1V132M391.5 1V132M395.5 1V132M399.5 1V132M403.5 1V132M407.5 1V132" stroke="#282828"/><path d="M1 39.5H408M1 66.5H408M1 93.5H408" stroke="#424242"/><path d="M11.5 1V132M35.5 1V132M60.5 1V132M88.5 1V132M113.5 1V132M138.5 1V132M162.5 1V132M187.5 1V132M215.5 1V132M240.5 1V132M264.5 1V132M289.5 1V132M313.5 1V132M342.5 1V132" stroke="#3e3e3e"/><path d="M23.5 1V132M48.5 1V132M72.5 1V132M101.5 1V132M125.5 1V132M150.5 1V132M174.5 1V132M199.5 1V132M228.5 1V132M252.5 1V132M277.5 1V132M301.5 1V132M326.5 1V132M354.5 1V132" stroke="#6c6c6c"/><path d="M80.5 1V132M207.5 1V132M334.5 1V132" stroke="#aaa200"/></g><path d="M1.4 62.4L5.2 63.5L13.2 63.5L17.3 61.1L21.5 57.9L25.6 54.5L29.7 54.5L33.8 54.9L37.6 56.8L41.7 53L45.8 51.7L49.9 50.8L54 51.5L58.2 49.5L62.3 50.4L66.4 50.4L70.5 51.4L74.6 51.4L78.6 52.7L82.7 60.5L86.6 59.2L90.8 60.5L94.9 62L99 65.4L103.1 64.5L107.2 65.4L111.4 65.4L115.5 66.7L119.6 68.6L123.7 64.3L127.8 66.3L132 66.1L136.1 65.4L140.2 65.4L144.3 62.4L148.4 67.3L152.4 65.4L156.5 65.4L160.6 62.4L164.7 62.4L168.7 60.5L172.8 63.5L176.9 66.3L181 66.3L189.2 66.3L197.5 66.3L205.5 66.3L209.7 66.3L213.8 67.6L217.9 63.9L221.8 65.8L226.1 68.6L230.3 70.5L234.4 70.6L238.3 69.5L242.4 68L246.6 66.1L250.7 69.5L254.8 68.6L258.9 66.7L263 65.8L267.2 64.8L271.3 61.7L275.4 64.3L279.5 66.1L283.7 65.4L287.6 65.4L291.7 64.5L295.9 66.1L300 65.8L304.1 65.4L308.2 63.5L316.5 63.5L324.5 63.5L328.6 62.6L332.8 63.5L336.7 62.6L340.8 66.1L344.9 63L349 58.7L353 62.6L357.1 61.7L361.2 61.5L365.7 60.5" stroke="#f06c10" stroke-width="1.1" fill="none" stroke-linejoin="round" /><path d="M1.4 24.2L5.2 25.7L9.3 31.7L13.2 32.5L17.3 26.1L21.5 19.3L25.6 14.3L29.7 14.3L33.8 18L37.6 28.7L41.7 20.8L45.8 18.4L49.9 17.5L54 23.6L58.2 20.5L62.3 26.5L66.4 25.7L70.5 33.6L74.6 33.6L78.6 38.6L82.7 78.9L86.6 73.6L90.8 78.9L94.9 84.1L99 93.5L103.1 87.3L107.2 90.5L111.4 90.5L115.5 92.9L119.6 101.4L123.7 72.3L127.8 81.7L132 77.4L136.1 75.5L140.2 73.3L144.3 57.4L148.4 80.4L152.4 69.5L156.5 71.4L160.6 57.4L164.7 57.4L168.7 50.4L172.8 62L176.9 73.6L181 76.6L185.1 75.5L189.2 72.3L193.4 72.3L197.5 73.3L201.6 74.2L205.5 75.5L209.7 78L213.8 81.1L217.9 61.1L221.8 69.5L226.1 82.6L230.3 87.9L234.4 92.4L238.3 86.4L242.4 73.3L246.6 61.1L250.7 79.8L254.8 74.2L258.9 68.6L263 61.1L267.2 54.5L271.3 41.1L275.4 58.3L279.5 67.3L283.7 64.8L287.6 64.8L291.7 57.4L295.9 65.8L300 65.4L304.1 59.8L308.2 54.2L312.3 52.7L316.5 55.5L320.6 51.2L324.5 51.2L328.6 50.4L332.8 58.7L336.7 49.3L340.8 72.3L344.9 53.6L349 36.2L353 59.8L357.1 54.5L361.2 54.5L365.7 53.4" stroke="#8c14e0" stroke-width="1.1" fill="none" stroke-linejoin="round" /><path d="M0.5 0.5H408.5V132.5H0.5z" stroke="#000" stroke-width="1" fill="none" shape-rendering="crispEdges"/></svg>
<span class="t" style="left:1041.05px;top:588.00px;line-height:14px;color:#000;transform:scaleX(0.7860);">70</span>
<span class="t" style="left:1041.05px;top:614.80px;line-height:14px;color:#000;transform:scaleX(0.7860);">50</span>
<span class="t" style="left:1041.05px;top:641.50px;line-height:14px;color:#000;transform:scaleX(0.7860);">30</span>
<div style="left:601.0px;top:696.0px;width:479.0px;height:1px;background:#b4b4b4"></div>
<div class="pn" style="left:601.0px;top:701.0px;width:479.0px;height:167.0px"></div>
<span class="t" style="left:607.00px;top:702.10px;line-height:14px;color:#000;transform:scaleX(0.9438);">MACD:</span>
<span class="t" style="left:650.00px;top:702.10px;line-height:14px;color:#ff0000;transform:scaleX(0.9369);">MACD[12-26]0.0649</span>
<span class="t" style="left:760.50px;top:702.10px;line-height:14px;color:#00c0c8;transform:scaleX(0.8000);">シグナル</span><span class="t" style="left:798.90px;top:702.10px;line-height:14px;color:#00c0c8;transform:scaleX(0.9640);">[9]-0.0445</span>
<span class="t" style="left:859.00px;top:702.10px;line-height:14px;color:#999;transform:scaleX(0.9500);">乖離</span><span class="t" style="left:881.80px;top:702.10px;line-height:14px;color:#999;transform:scaleX(0.8773);">0.1093</span>
<svg style="left:605.0px;top:715.0px;background:#000" width="409" height="133" viewBox="0 0 409 133"><g fill="none" stroke-width="1" shape-rendering="crispEdges"><path d="M1 1.5H408M1 6.5H408M1 10.5H408M1 14.5H408M1 19.5H408M1 23.5H408M1 28.5H408M1 32.5H408M1 37.5H408M1 41.5H408M1 46.5H408M1 50.5H408M1 55.5H408M1 59.5H408M1 64.5H408M1 68.5H408M1 73.5H408M1 77.5H408M1 82.5H408M1 86.5H408M1 91.5H408M1 95.5H408M1 99.5H408M1 104.5H408M1 108.5H408M1 113.5H408M1 117.5H408M1 122.5H408M1 126.5H408M1 131.5H408" stroke="#282828"/><path d="M3.5 1V132M7.5 1V132M11.5 1V132M15.5 1V132M19.5 1V132M23.5 1V132M27.5 1V132M31.5 1V132M35.5 1V132M39.5 1V132M43.5 1V132M48.5 1V132M52.5 1V132M56.5 1V132M60.5 1V132M64.5 1V132M68.5 1V132M72.5 1V132M76.5 1V132M80.5 1V132M84.5 1V132M88.5 1V132M93.5 1V132M97.5 1V132M101.5 1V132M105.5 1V132M109.5 1V132M113.5 1V132M117.5 1V132M121.5 1V132M125.5 1V132M129.5 1V132M133.5 1V132M138.5 1V132M142.5 1V132M146.5 1V132M150.5 1V132M154.5 1V132M158.5 1V132M162.5 1V132M166.5 1V132M170.5 1V132M174.5 1V132M178.5 1V132M183.5 1V132M187.5 1V132M191.5 1V132M195.5 1V132M199.5 1V132M203.5 1V132M207.5 1V132M211.5 1V132M215.5 1V132M219.5 1V132M223.5 1V132M228.5 1V132M232.5 1V132M236.5 1V132M240.5 1V132M244.5 1V132M248.5 1V132M252.5 1V132M256.5 1V132M260.5 1V132M264.5 1V132M268.5 1V132M272.5 1V132M277.5 1V132M281.5 1V132M285.5 1V132M289.5 1V132M293.5 1V132M297.5 1V132M301.5 1V132M305.5 1V132M309.5 1V132M313.5 1V132M317.5 1V132M322.5 1V132M326.5 1V132M330.5 1V132M334.5 1V132M338.5 1V132M342.5 1V132M346.5 1V132M350.5 1V132M354.5 1V132M358.5 1V132M362.5 1V132M367.5 1V132M371.5 1V132M375.5 1V132M379.5 1V132M383.5 1V132M387.5 1V132M391.5 1V132M395.5 1V132M399.5 1V132M403.5 1V132M407.5 1V132" stroke="#282828"/><path d="M1 6.5H408M1 50.5H408M1 95.5H408" stroke="#424242"/><path d="M11.5 1V132M35.5 1V132M60.5 1V132M88.5 1V132M113.5 1V132M138.5 1V132M162.5 1V132M187.5 1V132M215.5 1V132M240.5 1V132M264.5 1V132M289.5 1V132M313.5 1V132M342.5 1V132" stroke="#3e3e3e"/><path d="M23.5 1V132M48.5 1V132M72.5 1V132M101.5 1V132M125.5 1V132M150.5 1V132M174.5 1V132M199.5 1V132M228.5 1V132M252.5 1V132M277.5 1V132M301.5 1V132M326.5 1V132M354.5 1V132" stroke="#6c6c6c"/><path d="M80.5 1V132M207.5 1V132M334.5 1V132" stroke="#aaa200"/></g><path d="M0 71h3V96h-3zM4 71h3V96h-3zM8 72h3V96h-3zM12 75h3V96h-3zM16 75h3V96h-3zM20 74h3V96h-3zM24 70h3V96h-3zM28 69h3V96h-3zM32 70h3V96h-3zM36 74h3V96h-3zM40 74h3V96h-3zM44 74h4V96h-4zM49 74h3V96h-3zM53 77h3V96h-3zM57 78h3V96h-3zM61 81h3V96h-3zM65 85h3V96h-3zM69 89h3V96h-3zM73 92h3V96h-3zM77 95h3V96h-3zM81 95h3V104h-3zM85 95h3V109h-3zM89 95h4V113h-4zM94 95h3V117h-3zM98 95h3V121h-3zM102 95h3V122h-3zM106 95h3V122h-3zM110 95h3V121h-3zM114 95h3V120h-3zM118 95h3V120h-3zM122 95h3V116h-3zM126 95h3V114h-3zM130 95h3V111h-3zM134 95h4V109h-4zM139 95h3V106h-3zM143 95h3V102h-3zM147 95h3V101h-3zM151 95h3V99h-3zM155 95h3V99h-3zM159 95h3V96h-3zM163 93h3V96h-3zM167 89h3V96h-3zM171 90h3V96h-3zM175 95h3V96h-3zM179 95h4V98h-4zM184 95h3V98h-3zM188 95h3V98h-3zM192 95h3V98h-3zM196 95h3V98h-3zM200 95h3V98h-3zM204 95h3V98h-3zM208 95h3V98h-3zM212 95h3V98h-3zM216 96h3V97h-3zM220 95h3V96h-3zM224 96h4V97h-4zM229 95h3V99h-3zM233 95h3V101h-3zM237 95h3V101h-3zM241 95h3V99h-3zM245 95h3V96h-3zM249 96h3V97h-3zM253 96h3V97h-3zM257 95h3V96h-3zM261 93h3V96h-3zM265 91h3V96h-3zM269 86h3V96h-3zM273 86h4V96h-4zM278 88h3V96h-3zM282 90h3V96h-3zM286 91h3V96h-3zM290 90h3V96h-3zM294 92h3V96h-3zM298 92h3V96h-3zM302 92h3V96h-3zM306 92h3V96h-3zM310 91h3V96h-3zM314 91h3V96h-3zM318 91h4V96h-4zM323 91h3V96h-3zM327 91h3V96h-3zM331 92h3V96h-3zM335 92h3V96h-3zM339 95h3V96h-3zM343 95h3V96h-3zM347 90h3V96h-3zM351 91h3V96h-3zM355 91h3V96h-3zM359 91h3V96h-3zM363 91h4V96h-4z" fill="#a2a2a2" shape-rendering="crispEdges"/><path d="M1 72h1V95h-1zM5 72h1V95h-1zM9 73h1V95h-1zM13 76h1V95h-1zM17 76h1V95h-1zM21 75h1V95h-1zM25 71h1V95h-1zM29 70h1V95h-1zM33 71h1V95h-1zM37 75h1V95h-1zM41 75h1V95h-1zM45 75h2V95h-2zM50 75h1V95h-1zM54 78h1V95h-1zM58 79h1V95h-1zM62 82h1V95h-1zM66 86h1V95h-1zM70 90h1V95h-1zM74 93h1V95h-1zM82 96h1V103h-1zM86 96h1V108h-1zM90 96h2V112h-2zM95 96h1V116h-1zM99 96h1V120h-1zM103 96h1V121h-1zM107 96h1V121h-1zM111 96h1V120h-1zM115 96h1V119h-1zM119 96h1V119h-1zM123 96h1V115h-1zM127 96h1V113h-1zM131 96h1V110h-1zM135 96h2V108h-2zM140 96h1V105h-1zM144 96h1V101h-1zM148 96h1V100h-1zM152 96h1V98h-1zM156 96h1V98h-1zM164 94h1V95h-1zM168 90h1V95h-1zM172 91h1V95h-1zM180 96h2V97h-2zM185 96h1V97h-1zM189 96h1V97h-1zM193 96h1V97h-1zM197 96h1V97h-1zM201 96h1V97h-1zM205 96h1V97h-1zM209 96h1V97h-1zM213 96h1V97h-1zM230 96h1V98h-1zM234 96h1V100h-1zM238 96h1V100h-1zM242 96h1V98h-1zM262 94h1V95h-1zM266 92h1V95h-1zM270 87h1V95h-1zM274 87h2V95h-2zM279 89h1V95h-1zM283 91h1V95h-1zM287 92h1V95h-1zM291 91h1V95h-1zM295 93h1V95h-1zM299 93h1V95h-1zM303 93h1V95h-1zM307 93h1V95h-1zM311 92h1V95h-1zM315 92h1V95h-1zM319 92h2V95h-2zM324 92h1V95h-1zM328 92h1V95h-1zM332 93h1V95h-1zM336 93h1V95h-1zM348 91h1V95h-1zM352 92h1V95h-1zM356 92h1V95h-1zM360 92h1V95h-1zM364 92h2V95h-2z" fill="#2e2e2e" shape-rendering="crispEdges"/><path d="M1.4 82.4L5.2 74.5L9.3 70.8L13.2 68.3L17.3 62.7L21.5 56.2L25.6 46.8L29.7 40.2L33.8 34.6L37.8 32.8L41.9 27.1L46 21.5L50.1 16.8L54.2 14.6L58.2 12.7L62.3 11.6L66.4 12.5L70.5 15L74.6 17.2L78.8 21.5L82.7 31.8L86.8 40.2L90.9 47.7L95.1 58L99.2 68.3L103.3 75.3L107.4 82.4L111.4 88.9L115.5 93.6L119.6 99.2L123.7 100.7L127.8 103.4L132 104.5L135.9 105.2L140 105.4L144.1 101.1L148.2 104.3L152.4 103.4L156.5 103L160.6 98.9L164.5 97L168.7 91.7L172.8 91.7L176.9 94L181 97L185.1 98.3L189.1 99.6L193.2 100.2L197.3 101.5L201.4 101.5L205.5 102.6L209.7 103.4L213.8 104.3L217.7 102L221.8 102L226 104.3L230.1 107.7L234.2 110.8L238.3 111.8L242.4 111.4L246.4 108.6L250.5 109.2L254.6 109.2L258.7 108.2L262.9 105.4L267 102L271.1 95.5L275 93.6L279.1 93.2L283.3 93.6L287.4 93.6L291.5 92.7L295.5 93.2L299.6 93.2L303.7 92.1L307.9 89.5L311.8 87.6L315.9 87.6L320 86.1L324.1 84.6L328.3 84.6L332.4 84.2L336.3 83.7L340.4 85.6L344.5 85.6L348.7 79.6L352.8 79.2L356.9 77.3L361 76.4L365.7 76.4" stroke="#e01010" stroke-width="1.1" fill="none" stroke-linejoin="round" /><path d="M1.4 106.4L6.1 99.2L11.7 90.8L17.3 82.4L23 74L28.6 64.6L34.2 57.1L39.8 50.2L45.4 44.9L51 37.4L56.7 31.4L62.3 26.2L67.9 22.5L73.5 21L78.8 20.6L84.8 24.3L91.3 30.3L97.9 40.2L103.5 49.6L109.1 59L114.7 67.4L120.3 74.9L126 82.4L131.6 88L137.2 91.7L142.8 95.1L148.4 97L154 98.3L159.7 99.2L165.3 99.2L170.9 97.4L176.5 95.9L182.1 96.8L189.6 97.9L197.1 99.2L204.6 100.2L212.1 101.5L219.6 101.5L227.1 103.4L234.6 105.8L242.1 107.7L249.5 107.7L257 108.6L264.5 107.1L272 103.9L279.5 100.2L287 97.4L293 95.9L297.4 95.1L304.9 94L312.3 92.7L319.8 90.8L327.3 88.9L334.8 87.1L342.3 86.1L345.1 85.8L349.8 83.9L357.3 82.4L365.7 80.5" stroke="#1fbcc4" stroke-width="1.1" fill="none" stroke-linejoin="round" /><path d="M0.5 0.5H408.5V132.5H0.5z" stroke="#000" stroke-width="1" fill="none" shape-rendering="crispEdges"/></svg>
<div style="left:1014.0px;top:714.5px;width:65.0px;height:133.5px;overflow:hidden">
<span class="t" style="left:16.80px;top:-1.60px;line-height:14px;color:#000;transform:scaleX(0.8446);">0.4000</span>
<span class="t" style="left:16.80px;top:43.50px;line-height:14px;color:#000;transform:scaleX(0.8446);">0.2000</span>
<span class="t" style="left:16.80px;top:88.50px;line-height:14px;color:#000;transform:scaleX(0.8446);">0.0000</span>
</div>
<div style="left:601.0px;top:851px;width:479.0px;height:17px;border:1px solid #ababab;background:#fff"></div>
<span class="t" style="left:605.60px;top:853.10px;line-height:14px;color:#000;transform:scaleX(0.9500);">始値</span><span class="t" style="left:628.40px;top:853.10px;line-height:14px;color:#000;transform:scaleX(0.8819);">:1.38498</span>
<span class="t" style="left:681.70px;top:853.10px;line-height:14px;color:#000;transform:scaleX(0.9500);">高値</span><span class="t" style="left:704.50px;top:853.10px;line-height:14px;color:#000;transform:scaleX(0.8819);">:1.38551</span>
<span class="t" style="left:757.80px;top:853.10px;line-height:14px;color:#000;transform:scaleX(0.9500);">安値</span><span class="t" style="left:780.60px;top:853.10px;line-height:14px;color:#000;transform:scaleX(0.8819);">:1.38489</span>
<span class="t" style="left:833.90px;top:853.10px;line-height:14px;color:#000;transform:scaleX(0.9500);">終値</span><span class="t" style="left:856.70px;top:853.10px;line-height:14px;color:#000;transform:scaleX(0.8819);">:1.38545</span>
<div class="sb" style="left:902.6px;top:852px;width:15.5px;height:15px"></div>
<svg style="left:906.0px;top:855.6px" width="8" height="8" viewBox="0 0 8 8"><path d="M7.4 0.4v7.2L0.8 4z" fill="#555"/></svg>
<div style="left:918.4px;top:852px;width:58.1px;height:15px;background:linear-gradient(#e8e8e8,#fcfcfc 45%,#fff)"></div>
<div style="left:952.6px;top:852px;width:13.7px;height:15px;background:linear-gradient(#e2e2e2,#cfcfcf 50%,#bdbdbd)"></div>
<div class="sb" style="left:976.5px;top:852px;width:15.5px;height:15px"></div>
<svg style="left:981.0px;top:855.6px" width="8" height="8" viewBox="0 0 8 8"><path d="M0.6 0.4v7.2L7.2 4z" fill="#555"/></svg>
<div style="left:992.5px;top:852px;width:1px;height:15px;background:#c8c8c8"></div>
<span class="t" style="left:996.50px;top:853.10px;line-height:14px;color:#000;transform:scaleX(0.8237);">100</span>
<div class="sb" style="left:1016.0px;top:852px;width:15px;height:15px"></div>
<svg style="left:1019.5px;top:856.0px" width="8" height="8" viewBox="0 0 8 8"><path d="M0.4 1h7.2L4 7.4z" fill="#555"/></svg>
<div style="left:1031.50px;top:852.00px;width:15.50px;height:15.00px;background:#f2f2f2"></div>
<div class="sb" style="left:1047.5px;top:852px;width:15.5px;height:15px"></div>
<svg style="left:1050.3px;top:854.6px" width="10" height="10" viewBox="0 0 10 10"><path d="M1 5h8M5 1v8" stroke="#4a4a4a" stroke-width="2.800" stroke-linecap="round"/></svg>
<div class="sb" style="left:1063.8px;top:852px;width:15.5px;height:15px"></div>
<svg style="left:1066.6px;top:854.6px" width="10" height="10" viewBox="0 0 10 10"><path d="M1 5h8" stroke="#4a4a4a" stroke-width="2.800" stroke-linecap="round"/></svg>
<div style="left:1093.00px;top:-2.00px;width:510.60px;height:881.00px;background:#f8f8f8"></div>
<div style="left:1089.00px;top:-2.00px;width:518.60px;height:27.00px;"></div>
<div class="tb" style="left:1089.0px;top:-2.0px;width:518.6px;height:26.6px;border-bottom:1px solid #cfcfcf"></div>
<svg style="left:1096.0px;top:5.0px" width="16" height="16" viewBox="0 0 16 16"><rect width="16" height="16" fill="#10295d"/><path d="M4.500 13.800V7.400L8 3.900L11.500 7.400V13.800" fill="none" stroke="#fff" stroke-width="2.700" stroke-linejoin="round"/></svg>
<span class="t" style="left:1115.60px;top:6.30px;line-height:14px;color:#777;transform:scaleX(0.8000);">チャート</span><span class="t" style="left:1154.00px;top:6.30px;line-height:14px;color:#777;transform:scaleX(1.0140);">: NZD/JPY 4</span><span class="t" style="left:1221.40px;top:6.30px;line-height:14px;color:#777;transform:scaleX(0.9500);">時間足</span>
<div class="btn" style="left:1574.6px;top:5.0px;width:25.5px;height:15.5px"></div>
<svg style="left:1582.3px;top:7.8px" width="10" height="10" viewBox="0 0 10 10"><path d="M1.5 1.5l7 7M8.5 1.5l-7 7" stroke="#8c8c8c" stroke-width="1.9" fill="none"/></svg>
<div class="btn" style="left:1546.4px;top:5.0px;width:25.5px;height:15.5px"></div>
<svg style="left:1554.1px;top:7.8px" width="10" height="10" viewBox="0 0 10 10"><path d="M1.6 2.4h6.8v6.2H1.6z" stroke="#8c8c8c" stroke-width="1.2" fill="none"/><path d="M1 1.9h8" stroke="#8c8c8c" stroke-width="1.8"/></svg>
<div class="btn" style="left:1518.2px;top:5.0px;width:25.5px;height:15.5px"></div>
<svg style="left:1525.9px;top:7.8px" width="10" height="10" viewBox="0 0 10 10"><path d="M1 8h8" stroke="#8c8c8c" stroke-width="2"/></svg>
<div class="btn" style="left:1490.0px;top:5.0px;width:25.5px;height:15.5px"></div>
<svg style="left:1497.7px;top:7.8px" width="10" height="10" viewBox="0 0 10 10"><path d="M1.2 8.8L6 4" stroke="#8c8c8c" stroke-width="1.8" fill="none"/><path d="M3.6 3.2L9 1 6.8 6.4z" fill="#8c8c8c"/></svg>
<div class="btn" style="left:1441.3px;top:5.0px;width:46.0px;height:15.5px"></div>
<span class="t" style="left:1449.90px;top:8.10px;line-height:11px;color:#8a8a8a;font-size:9px;font-weight:bold;transform:scaleX(0.7358);">MENU</span>
<svg style="left:1472.7px;top:10.2px" width="8" height="6" viewBox="0 0 8 6"><path d="M0.3 0.6h7.4L4 5.4z" fill="#8c8c8c"/></svg>
<div class="cb" style="left:1127.3px;top:32.0px;width:74.0px;height:21px"></div>
<div class="dd" style="left:1183.3px;top:33.0px;width:17px;height:19px"></div>
<div class="tri" style="left:1187.3px;top:39.5px;"></div>
<span class="t" style="left:1130.60px;top:36.50px;line-height:14px;color:#000;transform:scaleX(0.9897);">NZD/JPY</span>
<div class="cb" style="left:1207.0px;top:32.0px;width:64.5px;height:21px"></div>
<div class="dd" style="left:1253.5px;top:33.0px;width:17px;height:19px"></div>
<div class="tri" style="left:1257.5px;top:39.5px;"></div>
<span class="t" style="left:1210.30px;top:36.50px;line-height:14px;color:#000;transform:scaleX(0.9421);">4</span><span class="t" style="left:1216.60px;top:36.50px;line-height:14px;color:#000;transform:scaleX(0.9500);">時間足</span>
<div class="cb" style="left:1276.0px;top:32.0px;width:88.5px;height:21px"></div>
<div class="dd" style="left:1346.5px;top:33.0px;width:17px;height:19px"></div>
<div class="tri" style="left:1350.5px;top:39.5px;"></div>
<span class="t" style="left:1279.30px;top:36.50px;line-height:14px;color:#000;transform:scaleX(0.8000);">ローソク</span><span class="t" style="left:1317.70px;top:36.50px;line-height:14px;color:#000;transform:scaleX(0.8250);">(BID)</span>
<div class="cb" style="left:1381.0px;top:32.0px;width:82.5px;height:21px"></div>
<div class="dd" style="left:1445.5px;top:33.0px;width:17px;height:19px"></div>
<div class="tri" style="left:1449.5px;top:39.5px;border-top-color:#8a8a8a"></div>
<span class="t" style="left:1408.50px;top:36.00px;line-height:14px;color:#666;">/</span>
<span class="t" style="left:1426.50px;top:36.00px;line-height:14px;color:#666;">/</span>
<div style="left:1469.5px;top:32.0px;width:41.5px;height:21px;border:1px solid #c6c6c6;border-radius:4px;background:linear-gradient(#fbfbfb,#ededed);box-shadow:0 1px 1px rgba(0,0,0,.12)"></div>
<span class="t" style="left:1478.20px;top:36.50px;line-height:14px;color:#9a9a9a;">検索</span>
<div class="tool sel" style="left:1099.2px;top:60.0px;width:22px;height:22px"></div>
<svg style="left:1099.2px;top:60.0px" width="22" height="22" viewBox="0 0 22 22"><path d="M3 7.5h16M7.5 3v16" stroke="#4a4a4a" stroke-width="1" fill="none"/><path d="M9 9.3l0.2 8 2-2 1.6 3.4 1.6-0.8-1.6-3.3 2.8-0.2z" fill="#3c3c3c"/></svg>
<div class="tool" style="left:1099.2px;top:85.0px;width:22px;height:22px"></div>
<svg style="left:1099.2px;top:85.0px" width="22" height="22" viewBox="0 0 22 22"><path d="M4.500 17.500h12.500" stroke="#666" stroke-width="1"/><path d="M5.600 15.800L15.600 5.600" stroke="#5a5a5a" stroke-width="3.200" stroke-linecap="butt"/><path d="M14.400 4.400l2.600 2.600" stroke="#333" stroke-width="1.800"/><path d="M4.300 17.100l0.600-2.600 2 2z" fill="#444"/></svg>
<div class="tool" style="left:1099.2px;top:110.0px;width:22px;height:22px"></div>
<svg style="left:1099.2px;top:110.0px" width="22" height="22" viewBox="0 0 22 22"><path d="M3.5 3v12.5H18" stroke="#444" stroke-width="1.2" fill="none"/><path d="M6 10.5l3.3-6 3 6.6 3.2-5.6 2.6 6" stroke="#444" stroke-width="1.2" fill="none"/><path d="M6 14.3c1.6-.4 2.4-2 4-2s2.600 1.800 4.500 1.800 2.600-1 3.800-1.200" stroke="#444" stroke-width="1.1" fill="none"/><path d="M3.500 4.500h1.500M3.500 6.500h1.500M3.500 8.500h1.500M3.500 10.500h1.500M3.500 12.500h1.500" stroke="#444" stroke-width="1"/></svg>
<div class="tool" style="left:1099.2px;top:135.0px;width:22px;height:22px"></div>
<svg style="left:1099.2px;top:135.0px" width="22" height="22" viewBox="0 0 22 22"><path d="M5 3.500H3.500v15H5M3.500 6.500h1.500M3.500 9.500h1.500M3.500 12.500h1.500M3.500 15.500h1.500" stroke="#444" stroke-width="1.1" fill="none"/><text x="6.200" y="9.600" font-family="Liberation Sans,sans-serif" font-size="6.500" font-weight="bold" fill="#444" textLength="12.500" lengthAdjust="spacingAndGlyphs">70.0</text><text x="6.200" y="16.600" font-family="Liberation Sans,sans-serif" font-size="6.500" font-weight="bold" fill="#444" textLength="12.500" lengthAdjust="spacingAndGlyphs">60.0</text></svg>
<div class="tool" style="left:1099.2px;top:160.0px;width:22px;height:22px"></div>
<svg style="left:1099.2px;top:160.0px" width="22" height="22" viewBox="0 0 22 22"><circle cx="7" cy="7" r="3.300" fill="#666"/><path d="M5.300 6.200h1.200M7.600 6.200h1.200M5.400 8.200q1.600 1.300 3.200 0" stroke="#aaa" stroke-width=".7" fill="none"/><path d="M15.600 3l1.100 2.600 2.800.2-2.200 1.800.8 2.800-2.500-1.600-2.500 1.600.8-2.800-2.200-1.800 2.800-.2z" fill="#4a4a4a"/><path d="M7 18.400c-2-1.600-3.600-2.800-3.600-4.600 0-1.100.9-1.900 1.900-1.900.7 0 1.300.4 1.700 1 .4-.6 1-1 1.700-1 1 0 1.900.8 1.900 1.900 0 1.800-1.600 3-3.600 4.600z" fill="#4a4a4a"/><circle cx="15.600" cy="15" r="3.300" fill="#666"/><path d="M13.600 15.200h4" stroke="#ccc" stroke-width="1"/></svg>
<div class="tool" style="left:1099.2px;top:185.0px;width:22px;height:22px"></div>
<svg style="left:1099.2px;top:185.0px" width="22" height="22" viewBox="0 0 22 22"><path d="M2.600 11.400c2.200-3.600 5.200-5.400 8.400-5.400s6.200 1.800 8.400 5.400c-2.200 3.400-5.200 5-8.400 5s-6.200-1.600-8.400-5z" fill="#eee" stroke="#444" stroke-width="1.300"/><circle cx="11" cy="10.400" r="3.900" fill="#3a3a3a"/><path d="M4 9.500c2-2.800 4.400-4.100 7-4.100s5 1.300 7 4.100" stroke="#333" stroke-width="1.600" fill="none"/><circle cx="9.600" cy="9.400" r="1" fill="#fff"/></svg>
<div class="tool" style="left:1099.2px;top:210.0px;width:22px;height:22px"></div>
<svg style="left:1099.2px;top:210.0px" width="22" height="22" viewBox="0 0 22 22"><path d="M7 3.500h6l2 2v4H7z" fill="#d8d8d8" stroke="#777" stroke-width=".8"/><rect x="2.800" y="8" width="16.400" height="7.200" rx="1.800" fill="#5c5c5c"/><rect x="3" y="8" width="16" height="2" rx="1" fill="#7a7a7a"/><rect x="6.200" y="13" width="9.600" height="6" fill="#d4d4d4" stroke="#666" stroke-width=".8"/><rect x="15" y="10.600" width="2.400" height="1" fill="#eee"/></svg>
<div class="tool" style="left:1099.2px;top:235.0px;width:22px;height:22px"></div>
<svg style="left:1099.2px;top:235.0px" width="22" height="22" viewBox="0 0 22 22"><rect x="3" y="3.300" width="13" height="10.600" rx="1" fill="#555"/><path d="M4.500 5.700h2.300v2.100H4.500zM7.900 5.700h2.300v2.100H7.900zM11.300 5.700h2.300v2.100h-2.300zM4.500 8.800h2.300v2H4.500zM7.900 8.800h2.300v2H7.900zM4.500 11.600h2.300v1.600H4.500zM7.900 11.600h2.300v1.600H7.900z" fill="#eee"/><rect x="10.800" y="10.200" width="8.200" height="8.600" fill="#f2f2f2"/><path d="M11.300 10.600h6l1.400 1.400v6.400h-7.400z" fill="#444"/><rect x="12.800" y="10.800" width="3.600" height="2.200" fill="#ddd"/><rect x="12.300" y="14.600" width="5.400" height="3.300" fill="#eee"/><path d="M4.200 14.800v2.700h4" stroke="#444" stroke-width="1.300" fill="none"/><path d="M7.600 15.600l2.600 1.900-2.600 1.900z" fill="#444"/></svg>
<div class="pn" style="left:1127.0px;top:59.0px;width:470.0px;height:475.0px"></div>
<div style="left:1127.0px;top:59.0px;width:470.0px;height:16px;border:1px solid #ababab;background:#f4f4f4"></div>
<span class="t" style="left:1131.60px;top:60.70px;line-height:14px;color:#000;transform:scaleX(0.9473);">2014/04/09 00:00</span>
<span class="t" style="left:1228.60px;top:60.70px;line-height:14px;color:#000;transform:scaleX(0.9500);">始値</span><span class="t" style="left:1251.40px;top:60.70px;line-height:14px;color:#000;transform:scaleX(0.8790);">:88.339</span>
<span class="t" style="left:1294.60px;top:60.70px;line-height:14px;color:#000;transform:scaleX(0.9500);">高値</span><span class="t" style="left:1317.40px;top:60.70px;line-height:14px;color:#000;transform:scaleX(0.8790);">:88.596</span>
<span class="t" style="left:1360.60px;top:60.70px;line-height:14px;color:#000;transform:scaleX(0.9500);">安値</span><span class="t" style="left:1383.40px;top:60.70px;line-height:14px;color:#000;transform:scaleX(0.8790);">:88.056</span>
<span class="t" style="left:1426.60px;top:60.70px;line-height:14px;color:#000;transform:scaleX(0.9500);">終値</span><span class="t" style="left:1449.40px;top:60.70px;line-height:14px;color:#000;transform:scaleX(0.8790);">:88.093</span>
<span class="t" style="left:1133.00px;top:75.10px;line-height:14px;color:#000;">単純移動平均</span><span class="t" style="left:1205.15px;top:75.10px;line-height:14px;color:#000;">:</span>
<span class="t" style="left:1214.40px;top:75.10px;line-height:14px;color:#8c00ff;transform:scaleX(0.9500);">短期</span><span class="t" style="left:1237.20px;top:75.10px;line-height:14px;color:#8c00ff;transform:scaleX(0.9431);">[5]88.625</span>
<span class="t" style="left:1292.90px;top:75.10px;line-height:14px;color:#ff6a00;transform:scaleX(0.9500);">長期</span><span class="t" style="left:1315.70px;top:75.10px;line-height:14px;color:#ff6a00;transform:scaleX(0.9291);">[21]88.738</span>
<span class="t" style="left:1133.00px;top:89.10px;line-height:14px;color:#000;transform:scaleX(0.7634);">ボリンジャーバンド</span><span class="t" style="left:1215.45px;top:89.10px;line-height:14px;color:#000;transform:scaleX(0.7634);">:</span>
<span class="t" style="left:1223.80px;top:89.10px;line-height:14px;color:#0030ff;transform:scaleX(0.9500);">基準線</span><span class="t" style="left:1258.00px;top:89.10px;line-height:14px;color:#0030ff;transform:scaleX(0.9485);">[21]88.738</span>
<span class="t" style="left:1320.30px;top:89.10px;line-height:14px;color:#0a80ff;transform:scaleX(0.9500);">偏差</span><span class="t" style="left:1343.10px;top:89.10px;line-height:14px;color:#0a80ff;transform:scaleX(0.9271);">A</span><span class="t" style="left:1350.53px;top:89.10px;line-height:14px;color:#0a80ff;transform:scaleX(0.9500);">上</span><span class="t" style="left:1361.93px;top:89.10px;line-height:14px;color:#0a80ff;transform:scaleX(0.9271);">[2.00]89.141</span>
<span class="t" style="left:1432.30px;top:89.10px;line-height:14px;color:#0a80ff;transform:scaleX(0.9500);">偏差</span><span class="t" style="left:1455.10px;top:89.10px;line-height:14px;color:#0a80ff;transform:scaleX(0.9271);">A</span><span class="t" style="left:1462.53px;top:89.10px;line-height:14px;color:#0a80ff;transform:scaleX(0.9500);">下</span><span class="t" style="left:1473.93px;top:89.10px;line-height:14px;color:#0a80ff;transform:scaleX(0.9271);">[2.00]88.336</span>
<span class="t" style="left:1544.30px;top:89.10px;line-height:14px;color:#60a8ff;transform:scaleX(0.9500);">偏差</span><span class="t" style="left:1567.10px;top:89.10px;line-height:14px;color:#60a8ff;transform:scaleX(0.9271);">B</span><span class="t" style="left:1574.53px;top:89.10px;line-height:14px;color:#60a8ff;transform:scaleX(0.9500);">上</span><span class="t" style="left:1585.93px;top:89.10px;line-height:14px;color:#60a8ff;transform:scaleX(0.9271);width:10.86px;overflow:hidden;">[3.00]89.342</span>
<div style="left:1128.00px;top:103.00px;width:3.00px;height:427.00px;background:#fff"></div>
<span class="t" style="left:1200.50px;top:103.50px;line-height:14px;color:#000;transform:scaleX(0.9490);">04/12</span>
<span class="t" style="left:1251.80px;top:103.50px;line-height:14px;color:#000;transform:scaleX(0.9490);">04/16</span>
<span class="t" style="left:1300.40px;top:103.50px;line-height:14px;color:#000;transform:scaleX(0.9490);">04/18</span>
<span class="t" style="left:1332.80px;top:103.50px;line-height:14px;color:#000;transform:scaleX(0.9490);">04/21</span>
<span class="t" style="left:1376.50px;top:103.50px;line-height:14px;color:#000;transform:scaleX(0.9490);">04/23</span>
<span class="t" style="left:1425.10px;top:103.50px;line-height:14px;color:#000;transform:scaleX(0.9490);">04/25</span>
<span class="t" style="left:1457.50px;top:103.50px;line-height:14px;color:#000;transform:scaleX(0.9490);">04/28</span>
<div style="left:1128.00px;top:103.00px;width:93.50px;height:14.00px;background:#3c5280;border-top:1px solid #142c62;border-bottom:1px solid #142c62"></div>
<span class="t" style="left:1129.00px;top:103.30px;line-height:14px;color:#fff;transform:scaleX(0.9473);">2014/04/09 00:00</span>
<svg style="left:1131.0px;top:117.0px;background:#000" width="400" height="413" viewBox="0 0 400 413"><g fill="none" stroke-width="1" shape-rendering="crispEdges"><path d="M1 1.5H399M1 3.5H399M1 6.5H399M1 8.5H399M1 11.5H399M1 14.5H399M1 16.5H399M1 19.5H399M1 21.5H399M1 24.5H399M1 27.5H399M1 29.5H399M1 32.5H399M1 34.5H399M1 37.5H399M1 39.5H399M1 42.5H399M1 45.5H399M1 47.5H399M1 50.5H399M1 52.5H399M1 55.5H399M1 57.5H399M1 60.5H399M1 63.5H399M1 65.5H399M1 68.5H399M1 70.5H399M1 73.5H399M1 76.5H399M1 78.5H399M1 81.5H399M1 83.5H399M1 86.5H399M1 88.5H399M1 91.5H399M1 94.5H399M1 96.5H399M1 99.5H399M1 101.5H399M1 104.5H399M1 107.5H399M1 109.5H399M1 112.5H399M1 114.5H399M1 117.5H399M1 119.5H399M1 122.5H399M1 125.5H399M1 127.5H399M1 130.5H399M1 132.5H399M1 135.5H399M1 137.5H399M1 140.5H399M1 143.5H399M1 145.5H399M1 148.5H399M1 150.5H399M1 153.5H399M1 156.5H399M1 158.5H399M1 161.5H399M1 163.5H399M1 166.5H399M1 168.5H399M1 171.5H399M1 174.5H399M1 176.5H399M1 179.5H399M1 181.5H399M1 184.5H399M1 186.5H399M1 189.5H399M1 192.5H399M1 194.5H399M1 197.5H399M1 199.5H399M1 202.5H399M1 205.5H399M1 207.5H399M1 210.5H399M1 212.5H399M1 215.5H399M1 217.5H399M1 220.5H399M1 223.5H399M1 225.5H399M1 228.5H399M1 230.5H399M1 233.5H399M1 236.5H399M1 238.5H399M1 241.5H399M1 243.5H399M1 246.5H399M1 248.5H399M1 251.5H399M1 254.5H399M1 256.5H399M1 259.5H399M1 261.5H399M1 264.5H399M1 266.5H399M1 269.5H399M1 272.5H399M1 274.5H399M1 277.5H399M1 279.5H399M1 282.5H399M1 285.5H399M1 287.5H399M1 290.5H399M1 292.5H399M1 295.5H399M1 297.5H399M1 300.5H399M1 303.5H399M1 305.5H399M1 308.5H399M1 310.5H399M1 313.5H399M1 316.5H399M1 318.5H399M1 321.5H399M1 323.5H399M1 326.5H399M1 328.5H399M1 331.5H399M1 334.5H399M1 336.5H399M1 339.5H399M1 341.5H399M1 344.5H399M1 346.5H399M1 349.5H399M1 352.5H399M1 354.5H399M1 357.5H399M1 359.5H399M1 362.5H399M1 365.5H399M1 367.5H399M1 370.5H399M1 372.5H399M1 375.5H399M1 377.5H399M1 380.5H399M1 383.5H399M1 385.5H399M1 388.5H399M1 390.5H399M1 393.5H399M1 395.5H399M1 398.5H399M1 401.5H399M1 403.5H399M1 406.5H399M1 408.5H399M1 411.5H399" stroke="#282828"/><path d="M3.5 1V412M7.5 1V412M11.5 1V412M15.5 1V412M19.5 1V412M23.5 1V412M27.5 1V412M31.5 1V412M35.5 1V412M39.5 1V412M43.5 1V412M47.5 1V412M51.5 1V412M55.5 1V412M59.5 1V412M63.5 1V412M67.5 1V412M71.5 1V412M75.5 1V412M79.5 1V412M83.5 1V412M87.5 1V412M91.5 1V412M95.5 1V412M99.5 1V412M103.5 1V412M107.5 1V412M111.5 1V412M115.5 1V412M119.5 1V412M123.5 1V412M127.5 1V412M131.5 1V412M135.5 1V412M139.5 1V412M143.5 1V412M147.5 1V412M151.5 1V412M155.5 1V412M159.5 1V412M163.5 1V412M167.5 1V412M171.5 1V412M175.5 1V412M179.5 1V412M183.5 1V412M187.5 1V412M191.5 1V412M195.5 1V412M199.5 1V412M203.5 1V412M207.5 1V412M211.5 1V412M215.5 1V412M219.5 1V412M223.5 1V412M227.5 1V412M231.5 1V412M235.5 1V412M239.5 1V412M243.5 1V412M247.5 1V412M251.5 1V412M255.5 1V412M259.5 1V412M263.5 1V412M267.5 1V412M271.5 1V412M275.5 1V412M279.5 1V412M283.5 1V412M287.5 1V412M291.5 1V412M295.5 1V412M299.5 1V412M303.5 1V412M307.5 1V412M311.5 1V412M315.5 1V412M319.5 1V412M323.5 1V412M327.5 1V412M331.5 1V412M335.5 1V412M339.5 1V412M343.5 1V412M347.5 1V412M351.5 1V412M355.5 1V412M359.5 1V412M363.5 1V412M367.5 1V412M371.5 1V412M375.5 1V412M379.5 1V412M383.5 1V412M387.5 1V412M391.5 1V412M395.5 1V412" stroke="#282828"/><path d="M1 6.5H399M1 32.5H399M1 57.5H399M1 83.5H399M1 109.5H399M1 135.5H399M1 161.5H399M1 186.5H399M1 212.5H399M1 238.5H399M1 264.5H399M1 290.5H399M1 316.5H399M1 341.5H399M1 367.5H399M1 393.5H399" stroke="#424242"/><path d="M11.5 1V412M35.5 1V412M59.5 1V412M87.5 1V412M111.5 1V412M135.5 1V412M159.5 1V412M183.5 1V412M211.5 1V412M235.5 1V412M259.5 1V412M283.5 1V412M307.5 1V412M335.5 1V412" stroke="#3e3e3e"/><path d="M23.5 1V412M47.5 1V412M71.5 1V412M99.5 1V412M123.5 1V412M147.5 1V412M171.5 1V412M195.5 1V412M223.5 1V412M247.5 1V412M271.5 1V412M295.5 1V412M319.5 1V412M347.5 1V412" stroke="#6c6c6c"/><path d="M79.5 1V412M203.5 1V412M327.5 1V412" stroke="#aaa200"/></g><path d="M1 316.5H399" stroke="#ff9a10" stroke-width="1.2" fill="none"/><path d="M1.4 68.2L5.2 59.4L8.9 60.2L13.6 60.8L17.3 63.6L22 54.2L25.8 54.2L29.5 56.4L33.3 53.8L37.9 52.7L41.7 54.6L45.4 57.6L49.2 54.6L52.9 46.7L57.6 34.5L61.3 36.4L65.1 39.6L69.8 44.8L73.5 56.1L78.2 67.7L84.8 66.4L89.4 63.6L93.2 69.2L97.9 76.7L101.6 81.3L105.4 78.5L110 87.9L113.8 101L117.5 117.9L121.3 136.6L125 151.2L129.7 151.6L133.5 150.6L137.2 148.2L140.9 151.2L149.4 151.6L154 154.4L157.8 156.8L161.5 160.6L169 160.6L173.7 157.2L177.5 159.4L182.1 164.3L185.9 170.3L187.8 178L190.6 189.2L193.4 197.6L199 198.6L203.7 199.5L210.2 198.6L217.7 198.6L225.2 199.5L229.9 200.4L232.7 206.4L234 209.2L237.1 210.5L240.2 209L243.4 205.5L246.5 198L249.6 189.2L252.8 181.8L255.2 178.6L260.2 177.4L266.5 176.1L272.8 174.9L277.8 172.4L282.8 169.9L287.8 166.8L290.9 163L292.9 157.5L297.6 152.9L301.3 146.3L308.8 142.6L316.3 138.8L321 137.4L324.7 138.8L328.4 143.1L333.1 151L336.8 163.1L341.5 169.7L345.3 179.2L349 179.5L353.7 181.4L357.9 183.5" stroke="#5aa6ee" stroke-width="1.05" fill="none" stroke-linejoin="round" /><path d="M1.4 226.7L5.2 233.8L9.8 234.5L17.3 235.1L21.1 250.1L26.7 251.4L32.3 250.6L37.9 250.6L43.6 252.9L47.3 260.4L51 275.4L54.8 294.1L57.6 306.3L62.3 311.9L67.9 315.6L72.6 312.8L77.3 309.4L81 312.8L85.7 313.8L89.4 321.2L93.2 322.6L99.7 320.3L107.2 316.6L112.8 309.1L116.6 301.6L121.3 293.1L125 290.3L128.8 296L133.5 302.5L137.2 306.3L140.9 301.6L146.6 303.8L154 303.1L161.5 303.1L167.2 306.3L172.8 310.9L177.5 314.7L179 316.1L185.2 316.5L187.8 308L190.9 301.1L194 297.4L199 299.2L204 300.5L209.6 299.2L215.2 296.8L221.5 293.6L225.9 295.2L229.6 294.2L232.8 288.6L237.1 286.5L241.5 289.9L246.5 295.5L250.2 299.9L254 303.2L259 299.9L264 297L269 296.8L272.8 297.4L277.8 296.1L282.8 292.4L285.9 289.2L289 295.5L292.8 306.8L296.5 316.1L300.9 329.9L305.2 334.2L310.2 340.5L315.2 346.8L319 354.2L322.8 360.5L326.5 364.9L330.2 365.5L334 366.5L337.8 362.8L341.5 367.4L345.2 366.5L347.8 368.1L351.5 371.1L354 374.9L357.8 379" stroke="#5aa6ee" stroke-width="1.05" fill="none" stroke-linejoin="round" /><path d="M1.4 93.5L5.2 88.8L8.9 89.4L13.6 89.8L17.3 91.3L22 87.5L25.8 87.5L29.5 88.8L33.3 86.4L37.9 85.7L41.7 87.5L45.4 90.2L49.2 89.4L52.9 85.7L57.6 80.4L61.3 82.3L65.1 85.1L69.8 89.8L73.5 99.1L78.2 107.2L84.8 107.2L89.4 106.3L93.2 110.4L97.9 116.9L101.6 120.1L105.4 118.2L110 126.3L113.8 138.5L117.5 151.6L121.3 165.6L125 174.1L129.7 175L137.2 174.4L142.8 176.9L150.3 178.4L157.8 180.2L161.5 183.6L169 184.5L174.7 184.5L180.3 187.3L185 192L188.7 200.4L192.4 211.7L197.1 214.5L202.7 217.3L208.4 215.4L217.7 216L225.2 215.4L229.9 216.4L232.7 220.7L234 222.8L237.1 223.6L240.2 221.8L243.4 218.6L246.5 213L249.6 206.8L252.8 200.5L256.5 197.4L260.2 195.8L266.5 196.5L272.8 196.5L277.8 193L282.8 189.9L287.8 187.8L291.5 184.2L296.5 180.5L301.5 177.4L306.5 176.1L311.5 174.9L316.5 174.5L321.5 174.5L325.2 177.4L329 181.8L332.8 187.4L336.5 195.5L340.2 201.8L342.8 205.5L345.9 210.2L349.6 211.1L354 214L357.8 216.8" stroke="#1c7fe6" stroke-width="1.05" fill="none" stroke-linejoin="round" /><path d="M1.4 201.4L5.2 203.3L9.8 205.7L17.3 206.1L21.1 216.4L26.7 217.7L32.3 217.3L37.9 217.3L43.6 219.2L47.3 224.8L51 237.9L54.8 251L58.5 264.1L62.3 267.9L67.9 270.1L73.5 270.1L77.3 268.8L82.9 272.6L86.6 276.3L90.4 279.1L95.1 280.6L101.6 280L105.4 277.2L112.8 276.3L116.6 272.6L121.3 268.2L125 267.5L128.8 271.6L133.5 278.2L137.2 280.6L140.9 277.2L146.6 278.2L154 278.7L161.5 280L167.2 282.9L172.8 287.5L177.5 290.3L179 290.2L182.1 291.8L185.2 292.4L187.8 286.1L190.9 282.4L194 281.5L199 283L204 283.6L209.6 283.6L215.2 280.5L221.5 278.6L225.9 279.5L229.6 279.2L232.8 274.9L236.5 274.2L241.5 276.1L246.5 279.9L250.2 282.4L254 283.6L259 279.9L264 276.8L269 276.5L272.8 276.5L277.8 276.5L282.8 272.4L285.9 269.2L289 274.2L292.8 283L296.5 289.9L300.2 299.2L304 301.8L309 305.5L314 310.5L317.8 316.8L321.5 322.4L325.2 326.1L329 328L334 331.8L337.8 329.5L341.5 335.5L345.9 335.8L350.2 340.5L354 343L357.8 345.5" stroke="#1c7fe6" stroke-width="1.05" fill="none" stroke-linejoin="round" /><path d="M5 192h1V230h-1zM4 203h3V229h-3zM9 143h1V206h-1zM8 153h3V203h-3zM13 130h1V157h-1zM12 146h3V154h-3zM25 130h1V226h-1zM24 146h3V223h-3zM29 111h1V158h-1zM28 121h3V147h-3zM61 208h1V273h-1zM60 217h3V270h-3zM65 188h1V221h-1zM64 202h3V218h-3zM77 188h1V221h-1zM76 203h3V210h-3zM85 206h1V238h-1zM84 225h3V227h-3zM93 217h1V272h-1zM92 218h3V250h-3zM97 190h1V231h-1zM96 203h3V219h-3zM105 166h1V223h-1zM104 176h3V209h-3zM117 224h1V253h-1zM116 230h3V249h-3zM125 229h1V289h-1zM124 235h3V254h-3zM141 226h1V280h-1zM140 242h3V266h-3zM149 199h1V252h-1zM148 204h3V250h-3zM177 260h1V279h-1zM176 262h3V271h-3zM185 254h1V267h-1zM184 257h3V263h-3zM189 243h1V259h-1zM188 244h3V258h-3zM201 259h1V273h-1zM200 260h3V262h-3zM205 226h1V272h-1zM204 232h3V267h-3zM213 234h1V259h-1zM212 234h3V251h-3zM229 235h1V267h-1zM228 244h3V260h-3zM233 219h1V250h-1zM232 229h3V246h-3zM237 222h1V242h-1zM236 226h3V230h-3zM241 219h1V247h-1zM240 222h3V227h-3zM245 185h1V223h-1zM244 208h3V223h-3zM249 198h1V217h-1zM248 207h3V209h-3zM253 188h1V215h-1zM252 194h3V208h-3zM273 247h1V278h-1zM272 249h3V257h-3zM277 186h1V256h-1zM276 211h3V250h-3zM281 176h1V217h-1zM280 202h3V212h-3zM297 279h1V306h-1zM296 279h3V294h-3zM305 268h1V303h-1zM304 272h3V300h-3zM313 268h1V298h-1zM312 284h3V286h-3zM325 285h1V297h-1zM324 289h3V294h-3zM329 279h1V294h-1zM328 284h3V294h-3zM337 277h1V297h-1zM336 287h3V291h-3zM345 293h1V333h-1zM344 294h3V324h-3zM353 294h1V316h-1zM352 301h3V316h-3z" fill="#ff2a2a" shape-rendering="crispEdges"/><path d="M5 204h1V228h-1zM9 154h1V202h-1zM13 147h1V153h-1zM25 147h1V222h-1zM29 122h1V146h-1zM61 218h1V269h-1zM65 203h1V217h-1zM77 204h1V209h-1zM93 219h1V249h-1zM97 204h1V218h-1zM105 177h1V208h-1zM117 231h1V248h-1zM125 236h1V253h-1zM141 243h1V265h-1zM149 205h1V249h-1zM177 263h1V270h-1zM185 258h1V262h-1zM189 245h1V257h-1zM205 233h1V266h-1zM213 235h1V250h-1zM229 245h1V259h-1zM233 230h1V245h-1zM237 227h1V229h-1zM241 223h1V226h-1zM245 209h1V222h-1zM253 195h1V207h-1zM273 250h1V256h-1zM277 212h1V249h-1zM281 203h1V211h-1zM297 280h1V293h-1zM305 273h1V299h-1zM325 290h1V293h-1zM329 285h1V293h-1zM337 288h1V290h-1zM345 295h1V323h-1zM353 302h1V315h-1z" fill="#d41c1c" shape-rendering="crispEdges"/><path d="M1 159h1V233h-1zM0 195h3V227h-3zM17 132h1V174h-1zM16 146h3V158h-3zM21 154h1V224h-1zM20 157h3V223h-3zM33 81h1V140h-1zM32 121h3V130h-3zM37 126h1V162h-1zM36 129h3V134h-3zM41 117h1V195h-1zM40 134h3V170h-3zM45 158h1V193h-1zM44 169h3V192h-3zM49 182h1V222h-1zM48 191h3V210h-3zM53 208h1V253h-1zM52 209h3V246h-3zM57 226h1V287h-1zM56 245h3V270h-3zM69 199h1V269h-1zM68 202h3V207h-3zM73 196h1V219h-1zM72 206h3V211h-3zM81 207h1V234h-1zM80 210h3V226h-3zM89 206h1V263h-1zM88 225h3V250h-3zM101 192h1V215h-1zM100 203h3V209h-3zM109 169h1V204h-1zM108 176h3V203h-3zM113 200h1V252h-1zM112 202h3V249h-3zM121 203h1V278h-1zM120 230h3V254h-3zM129 227h1V304h-1zM128 235h3V265h-3zM133 250h1V302h-1zM132 264h3V266h-3zM137 250h1V276h-1zM136 264h3V266h-3zM145 231h1V263h-1zM144 242h3V250h-3zM153 204h1V224h-1zM152 204h3V224h-3zM157 199h1V246h-1zM156 222h3V235h-3zM161 232h1V262h-1zM160 234h3V241h-3zM165 232h1V252h-1zM164 240h3V244h-3zM169 237h1V281h-1zM168 243h3V264h-3zM173 252h1V282h-1zM172 263h3V271h-3zM181 243h1V267h-1zM180 262h3V264h-3zM193 240h1V261h-1zM192 244h3V248h-3zM197 247h1V271h-1zM196 249h3V262h-3zM209 220h1V262h-1zM208 232h3V250h-3zM217 234h1V254h-1zM216 234h3V243h-3zM221 236h1V256h-1zM220 243h3V246h-3zM225 243h1V270h-1zM224 246h3V260h-3zM257 179h1V223h-1zM256 193h3V212h-3zM261 199h1V233h-1zM260 211h3V218h-3zM265 217h1V268h-1zM264 217h3V256h-3zM269 253h1V297h-1zM268 255h3V257h-3zM285 191h1V221h-1zM284 202h3V217h-3zM289 213h1V274h-1zM288 216h3V270h-3zM293 260h1V308h-1zM292 270h3V294h-3zM301 276h1V300h-1zM300 279h3V300h-3zM309 271h1V290h-1zM308 272h3V286h-3zM317 277h1V303h-1zM316 284h3V293h-3zM321 280h1V313h-1zM320 292h3V294h-3zM333 279h1V304h-1zM332 284h3V291h-3zM341 270h1V331h-1zM340 287h3V324h-3zM349 294h1V338h-1zM348 294h3V316h-3zM357 296h1V322h-1zM356 301h3V317h-3z" fill="#4a4af6" shape-rendering="crispEdges"/><path d="M1 196h1V226h-1zM17 147h1V157h-1zM21 158h1V222h-1zM33 122h1V129h-1zM37 130h1V133h-1zM41 135h1V169h-1zM45 170h1V191h-1zM49 192h1V209h-1zM53 210h1V245h-1zM57 246h1V269h-1zM69 203h1V206h-1zM73 207h1V210h-1zM81 211h1V225h-1zM89 226h1V249h-1zM101 204h1V208h-1zM109 177h1V202h-1zM113 203h1V248h-1zM121 231h1V253h-1zM129 236h1V264h-1zM145 243h1V249h-1zM153 205h1V223h-1zM157 223h1V234h-1zM161 235h1V240h-1zM165 241h1V243h-1zM169 244h1V263h-1zM173 264h1V270h-1zM193 245h1V247h-1zM197 250h1V261h-1zM209 233h1V249h-1zM217 235h1V242h-1zM221 244h1V245h-1zM225 247h1V259h-1zM257 194h1V211h-1zM261 212h1V217h-1zM265 218h1V255h-1zM285 203h1V216h-1zM289 217h1V269h-1zM293 271h1V293h-1zM301 280h1V299h-1zM309 273h1V285h-1zM317 285h1V292h-1zM333 285h1V290h-1zM341 288h1V323h-1zM349 295h1V315h-1zM357 302h1V316h-1z" fill="#3232b4" shape-rendering="crispEdges"/><path d="M1.4 144.5L6.1 146.9L11.7 147.5L17.3 150.6L23 152.5L29.5 153.1L37 151.6L42.6 155.3L48.2 160.9L53.9 168.4L59.5 174.4L62.3 174.6L67.9 178.9L73.5 184.5L79.1 189.2L84.8 190.7L90.4 193.9L96 197.6L101.6 200.4L105.4 198.6L109.1 200.4L114.7 207.9L120.3 215.4L126 221.1L131.6 224.8L137.2 227L142.8 226.7L148.4 228.2L154 228.5L159.7 230.8L165.3 232.7L170.9 235.1L176.5 237.5L182.1 240.7L187.8 243.9L193.4 247.3L199 249.1L204.6 250.1L210.2 249.5L215.8 248.2L221.5 247.3L227.1 247.3L232.7 248.2L236.5 248.6L241.5 248.6L246.5 246.1L251.5 243L256.5 239.5L261.5 236.8L266.5 236.5L272.8 236.5L277.8 234.9L281.5 232.4L285.5 229.5L289 231.1L294 234L299 236.8L302.8 238.6L307.8 239.9L311.5 241.5L316.5 244.2L321.5 248.2L326.5 252.8L331.5 256.8L336.5 262.4L341.5 268.6L346.5 274.2L354 278.6L357.8 281.5" stroke="#e0662c" stroke-width="1.05" fill="none" stroke-linejoin="round" /><path d="M1.4 156.3L5.2 170.3L8.9 178.9L13.2 185.9L17.3 178.9L21.1 176.1L24.8 168.6L28.6 160.9L33.3 155.3L37.9 147.8L41.7 141.3L45.4 149.7L49.2 164.7L52.9 181.7L56.7 209.8L60.4 222.9L65.1 228.5L68.8 228.5L72.6 222.9L76.3 209.8L80.1 207.9L84.8 215.4L89.4 222.9L94.1 224.4L98.8 223.9L102.5 219.2L106.3 209.8L110 200.4L113.8 206.1L117.5 213.6L121.3 221.1L125 234.2L128.8 243.5L133.5 250.1L137.2 255.7L141.9 254.8L145.6 255.7L149.4 247.3L153.1 237.9L156.9 231.4L160.6 230L165.3 229.5L169 237.9L172.8 251L177.5 257.6L181.2 260.4L185 263.2L188.7 259.4L192.4 256.6L197.1 254.8L200.9 253.8L205.5 250.1L209.3 250.1L213 247.3L216.8 244.5L221.5 243.1L225.2 245.4L229 246.3L232.7 245.4L234 244.9L237.8 241.8L241.5 235.5L245.2 226.8L249 218L252.8 212.4L256.5 208.6L261.5 207.4L265.2 215.5L269 226.1L273.4 237L277.8 237.8L281.5 235.5L285.5 227.4L289 229.2L292.8 236.1L296.5 248L299.6 261.8L302.1 273L305.2 281.8L309 286.1L313.4 284.9L317.8 286.1L321.5 286.1L325.2 289.2L329 289.9L334 290.5L337.8 289.9L341.5 294.2L345.9 296.1L349.6 301.1L354 305.5L357.8 309.9" stroke="#9a1fe8" stroke-width="1.1" fill="none" stroke-linejoin="round" /><path d="M0.5 0.5H399.5V412.5H0.5z" stroke="#000" stroke-width="1" fill="none" shape-rendering="crispEdges"/><text x="14.5" y="81.1" fill="#ff7a00" font-family="Liberation Sans,sans-serif" font-size="12.2">89.221</text><text x="238.3" y="179" fill="#ff7a00" font-family="Liberation Sans,sans-serif" font-size="12.2">88.488</text><text x="262" y="176.4" fill="#ff7a00" font-family="Liberation Sans,sans-serif" font-size="12.2">88.484</text><text x="-17.5" y="248.4" fill="#00c020" font-family="Liberation Sans,sans-serif" font-size="12.2">88.056</text><text x="111" y="319" fill="#00c020" font-family="Liberation Sans,sans-serif" font-size="12.2">87.505</text><text x="251" y="312.1" fill="#00c020" font-family="Liberation Sans,sans-serif" font-size="12.2">87.560</text><text x="331" y="353" fill="#00c020" font-family="Liberation Sans,sans-serif" font-size="12.2">87.239</text></svg>
<span class="t" style="left:1548.05px;top:502.90px;line-height:14px;color:#000;transform:scaleX(0.8310);">86.800</span>
<span class="t" style="left:1548.05px;top:477.10px;line-height:14px;color:#000;transform:scaleX(0.8310);">87.000</span>
<span class="t" style="left:1548.05px;top:451.30px;line-height:14px;color:#000;transform:scaleX(0.8310);">87.200</span>
<span class="t" style="left:1548.05px;top:425.50px;line-height:14px;color:#000;transform:scaleX(0.8310);">87.400</span>
<span class="t" style="left:1548.05px;top:399.70px;line-height:14px;color:#000;transform:scaleX(0.8310);">87.600</span>
<span class="t" style="left:1548.05px;top:373.90px;line-height:14px;color:#000;transform:scaleX(0.8310);">87.800</span>
<span class="t" style="left:1548.05px;top:348.10px;line-height:14px;color:#000;transform:scaleX(0.8310);">88.000</span>
<span class="t" style="left:1548.05px;top:322.30px;line-height:14px;color:#000;transform:scaleX(0.8310);">88.200</span>
<span class="t" style="left:1548.05px;top:296.50px;line-height:14px;color:#000;transform:scaleX(0.8310);">88.400</span>
<span class="t" style="left:1548.05px;top:270.70px;line-height:14px;color:#000;transform:scaleX(0.8310);">88.600</span>
<span class="t" style="left:1548.05px;top:244.90px;line-height:14px;color:#000;transform:scaleX(0.8310);">88.800</span>
<span class="t" style="left:1548.05px;top:219.10px;line-height:14px;color:#000;transform:scaleX(0.8310);">89.000</span>
<span class="t" style="left:1548.05px;top:193.30px;line-height:14px;color:#000;transform:scaleX(0.8310);">89.200</span>
<span class="t" style="left:1548.05px;top:167.50px;line-height:14px;color:#000;transform:scaleX(0.8310);">89.400</span>
<span class="t" style="left:1548.05px;top:141.70px;line-height:14px;color:#000;transform:scaleX(0.8310);">89.600</span>
<span class="t" style="left:1548.05px;top:115.90px;line-height:14px;color:#000;transform:scaleX(0.8310);">89.800</span>
<div style="left:1531.00px;top:424.00px;width:65.00px;height:19.00px;background:#f8982e;border-top:1px solid #ef8410;border-bottom:1px solid #ef8410"></div>
<span class="t" style="left:1548.05px;top:427.00px;line-height:14px;color:#fff;transform:scaleX(0.8310);">87.401</span>
<div style="left:1127.0px;top:537.0px;width:470.0px;height:1px;background:#b4b4b4"></div>
<div class="pn" style="left:1127.0px;top:542.0px;width:470.0px;height:151.0px"></div>
<span class="t" style="left:1133.00px;top:543.10px;line-height:14px;color:#000;transform:scaleX(0.8996);">RSI:</span>
<span class="t" style="left:1160.50px;top:543.10px;line-height:14px;color:#8c00ff;transform:scaleX(0.9500);">短期</span><span class="t" style="left:1183.30px;top:543.10px;line-height:14px;color:#8c00ff;transform:scaleX(0.9291);">[9]27.0381</span>
<span class="t" style="left:1244.50px;top:543.10px;line-height:14px;color:#ff6a00;transform:scaleX(0.9500);">長期</span><span class="t" style="left:1267.30px;top:543.10px;line-height:14px;color:#ff6a00;transform:scaleX(0.9258);">[42]46.8972</span>
<svg style="left:1131.0px;top:556.0px;background:#000" width="400" height="133" viewBox="0 0 400 133"><g fill="none" stroke-width="1" shape-rendering="crispEdges"><path d="M1 2.5H399M1 5.5H399M1 7.5H399M1 10.5H399M1 13.5H399M1 15.5H399M1 18.5H399M1 21.5H399M1 23.5H399M1 26.5H399M1 29.5H399M1 31.5H399M1 34.5H399M1 37.5H399M1 39.5H399M1 42.5H399M1 45.5H399M1 47.5H399M1 50.5H399M1 53.5H399M1 55.5H399M1 58.5H399M1 61.5H399M1 63.5H399M1 66.5H399M1 69.5H399M1 71.5H399M1 74.5H399M1 77.5H399M1 79.5H399M1 82.5H399M1 85.5H399M1 87.5H399M1 90.5H399M1 93.5H399M1 95.5H399M1 98.5H399M1 101.5H399M1 103.5H399M1 106.5H399M1 109.5H399M1 111.5H399M1 114.5H399M1 116.5H399M1 119.5H399M1 122.5H399M1 124.5H399M1 127.5H399M1 130.5H399" stroke="#282828"/><path d="M3.5 1V132M7.5 1V132M11.5 1V132M15.5 1V132M19.5 1V132M23.5 1V132M27.5 1V132M31.5 1V132M35.5 1V132M39.5 1V132M43.5 1V132M47.5 1V132M51.5 1V132M55.5 1V132M59.5 1V132M63.5 1V132M67.5 1V132M71.5 1V132M75.5 1V132M79.5 1V132M83.5 1V132M87.5 1V132M91.5 1V132M95.5 1V132M99.5 1V132M103.5 1V132M107.5 1V132M111.5 1V132M115.5 1V132M119.5 1V132M123.5 1V132M127.5 1V132M131.5 1V132M135.5 1V132M139.5 1V132M143.5 1V132M147.5 1V132M151.5 1V132M155.5 1V132M159.5 1V132M163.5 1V132M167.5 1V132M171.5 1V132M175.5 1V132M179.5 1V132M183.5 1V132M187.5 1V132M191.5 1V132M195.5 1V132M199.5 1V132M203.5 1V132M207.5 1V132M211.5 1V132M215.5 1V132M219.5 1V132M223.5 1V132M227.5 1V132M231.5 1V132M235.5 1V132M239.5 1V132M243.5 1V132M247.5 1V132M251.5 1V132M255.5 1V132M259.5 1V132M263.5 1V132M267.5 1V132M271.5 1V132M275.5 1V132M279.5 1V132M283.5 1V132M287.5 1V132M291.5 1V132M295.5 1V132M299.5 1V132M303.5 1V132M307.5 1V132M311.5 1V132M315.5 1V132M319.5 1V132M323.5 1V132M327.5 1V132M331.5 1V132M335.5 1V132M339.5 1V132M343.5 1V132M347.5 1V132M351.5 1V132M355.5 1V132M359.5 1V132M363.5 1V132M367.5 1V132M371.5 1V132M375.5 1V132M379.5 1V132M383.5 1V132M387.5 1V132M391.5 1V132M395.5 1V132" stroke="#282828"/><path d="M1 39.5H399M1 66.5H399M1 93.5H399" stroke="#424242"/><path d="M11.5 1V132M35.5 1V132M59.5 1V132M87.5 1V132M111.5 1V132M135.5 1V132M159.5 1V132M183.5 1V132M211.5 1V132M235.5 1V132M259.5 1V132M283.5 1V132M307.5 1V132M335.5 1V132" stroke="#3e3e3e"/><path d="M23.5 1V132M47.5 1V132M71.5 1V132M99.5 1V132M123.5 1V132M147.5 1V132M171.5 1V132M195.5 1V132M223.5 1V132M247.5 1V132M271.5 1V132M295.5 1V132M319.5 1V132M347.5 1V132" stroke="#6c6c6c"/><path d="M79.5 1V132M203.5 1V132M327.5 1V132" stroke="#aaa200"/></g><path d="M1.4 71.4L5.5 68L9.5 64.3L13.6 63.5L17.5 64.8L21.5 70.5L25.6 64.3L29.5 62.4L33.5 62.4L37.6 63.5L41.5 66.1L45.4 68.6L49.5 69.9L53.5 72.3L57.4 73.6L61.5 69.9L65.5 68.6L69.6 68.6L73.5 68.6L77.5 68.6L81.6 70.5L85.5 70.5L89.4 71.4L93.6 69.1L97.5 68.6L101.4 68.6L105.5 65.4L109.5 67.3L113.6 71.4L117.5 69.9L121.5 71.4L125.6 70.5L129.5 72.3L133.5 72.3L137.6 72.3L141.5 70.5L145.4 70.5L149.5 67.3L153.5 68.6L157.6 69.5L161.5 70.5L165.5 71L169.6 71.8L173.5 72.3L177.5 71.4L181.6 71.4L185.5 71.4L189.4 69.5L193.6 69.9L197.5 71.4L201.4 71.4L205.5 68.6L209.5 70.5L213.4 68.6L217.5 69.5L221.5 69.9L225.6 70.5L229.5 69.1L233.5 67.3L237.6 67.3L241.5 67.3L245.4 65.4L249.5 65.4L253.5 64.3L257.4 66.1L261.5 66.7L265.5 70.5L269.4 70.5L273.5 69.5L277.5 65.4L281.4 65.4L285.5 66.1L289.4 70.5L293.5 73.3L297.6 72.3L301.5 74.2L305.5 71.4L309.6 72.3L313.5 72.3L317.5 73.3L321.6 73.3L325.5 72.3L329.4 72.3L333.5 72.3L337.5 72.3L341.6 75.1L345.5 72.3L349.5 74.2L353.6 72.3L357.5 74.6" stroke="#f06c10" stroke-width="1.1" fill="none" stroke-linejoin="round" /><path d="M1.4 98L5.5 83.6L9.5 66.1L13.6 64.3L17.5 69.9L21.5 87.3L25.6 63L29.5 58.7L33.5 60.2L37.6 61.1L41.5 72.3L45.4 77L49.5 83L53.5 90.1L57.4 94.8L61.5 75.1L65.5 71.4L69.6 72.3L73.5 73.6L77.5 70.5L81.6 78.5L85.5 77.4L89.4 85.4L93.6 71.8L97.5 65.4L101.4 66.7L105.5 54.9L109.5 64.8L113.6 81.1L117.5 74.8L121.5 80.4L125.6 73.6L129.5 81.1L133.5 82.3L137.6 82.3L141.5 71.4L145.4 74.2L149.5 56.4L153.5 63L157.6 67.6L161.5 69.9L165.5 72.3L169.6 78.9L173.5 82.3L177.5 78.9L181.6 78.5L185.5 74.2L189.4 65.4L193.6 68.6L197.5 77.4L201.4 75.5L205.5 56.8L209.5 69.5L213.4 59.2L217.5 64.8L221.5 66.7L225.6 75.5L229.5 65.8L233.5 56.4L237.6 55.5L241.5 52.7L245.4 45.5L249.5 45.2L253.5 38.6L257.4 54.5L261.5 59.8L265.5 82.3L269.4 83.6L273.5 77.4L277.5 55.5L281.4 51.7L285.5 60.2L289.4 84.5L293.5 90.5L297.6 83.6L301.5 89.8L305.5 75.5L309.6 80.4L313.5 79.8L317.5 82.6L321.6 83.6L325.5 80.8L329.4 76.6L333.5 80.4L337.5 77.4L341.6 94.2L345.5 73.6L349.5 82.3L353.6 74.6L357.5 80.8" stroke="#8c14e0" stroke-width="1.1" fill="none" stroke-linejoin="round" /><path d="M0.5 0.5H399.5V132.5H0.5z" stroke="#000" stroke-width="1" fill="none" shape-rendering="crispEdges"/></svg>
<span class="t" style="left:1558.05px;top:588.00px;line-height:14px;color:#000;transform:scaleX(0.7860);">70</span>
<span class="t" style="left:1558.05px;top:614.80px;line-height:14px;color:#000;transform:scaleX(0.7860);">50</span>
<span class="t" style="left:1558.05px;top:641.50px;line-height:14px;color:#000;transform:scaleX(0.7860);">30</span>
<div style="left:1127.0px;top:696.0px;width:470.0px;height:1px;background:#b4b4b4"></div>
<div class="pn" style="left:1127.0px;top:701.0px;width:470.0px;height:167.0px"></div>
<span class="t" style="left:1133.00px;top:702.10px;line-height:14px;color:#000;transform:scaleX(0.9438);">MACD:</span>
<span class="t" style="left:1176.00px;top:702.10px;line-height:14px;color:#ff0000;transform:scaleX(0.9535);">MACD[12-26]-10.2169</span>
<span class="t" style="left:1298.50px;top:702.10px;line-height:14px;color:#00c0c8;transform:scaleX(0.8000);">シグナル</span><span class="t" style="left:1336.90px;top:702.10px;line-height:14px;color:#00c0c8;transform:scaleX(0.9640);">[9]-5.0347</span>
<span class="t" style="left:1397.00px;top:702.10px;line-height:14px;color:#999;transform:scaleX(0.9500);">乖離</span><span class="t" style="left:1419.80px;top:702.10px;line-height:14px;color:#999;transform:scaleX(0.9385);">-5.1822</span>
<svg style="left:1131.0px;top:715.0px;background:#000" width="400" height="133" viewBox="0 0 400 133"><g fill="none" stroke-width="1" shape-rendering="crispEdges"><path d="M1 2.5H399M1 7.5H399M1 12.5H399M1 16.5H399M1 21.5H399M1 26.5H399M1 30.5H399M1 35.5H399M1 40.5H399M1 44.5H399M1 49.5H399M1 54.5H399M1 59.5H399M1 63.5H399M1 68.5H399M1 73.5H399M1 77.5H399M1 82.5H399M1 87.5H399M1 91.5H399M1 96.5H399M1 101.5H399M1 106.5H399M1 110.5H399M1 115.5H399M1 120.5H399M1 124.5H399M1 129.5H399" stroke="#282828"/><path d="M3.5 1V132M7.5 1V132M11.5 1V132M15.5 1V132M19.5 1V132M23.5 1V132M27.5 1V132M31.5 1V132M35.5 1V132M39.5 1V132M43.5 1V132M47.5 1V132M51.5 1V132M55.5 1V132M59.5 1V132M63.5 1V132M67.5 1V132M71.5 1V132M75.5 1V132M79.5 1V132M83.5 1V132M87.5 1V132M91.5 1V132M95.5 1V132M99.5 1V132M103.5 1V132M107.5 1V132M111.5 1V132M115.5 1V132M119.5 1V132M123.5 1V132M127.5 1V132M131.5 1V132M135.5 1V132M139.5 1V132M143.5 1V132M147.5 1V132M151.5 1V132M155.5 1V132M159.5 1V132M163.5 1V132M167.5 1V132M171.5 1V132M175.5 1V132M179.5 1V132M183.5 1V132M187.5 1V132M191.5 1V132M195.5 1V132M199.5 1V132M203.5 1V132M207.5 1V132M211.5 1V132M215.5 1V132M219.5 1V132M223.5 1V132M227.5 1V132M231.5 1V132M235.5 1V132M239.5 1V132M243.5 1V132M247.5 1V132M251.5 1V132M255.5 1V132M259.5 1V132M263.5 1V132M267.5 1V132M271.5 1V132M275.5 1V132M279.5 1V132M283.5 1V132M287.5 1V132M291.5 1V132M295.5 1V132M299.5 1V132M303.5 1V132M307.5 1V132M311.5 1V132M315.5 1V132M319.5 1V132M323.5 1V132M327.5 1V132M331.5 1V132M335.5 1V132M339.5 1V132M343.5 1V132M347.5 1V132M351.5 1V132M355.5 1V132M359.5 1V132M363.5 1V132M367.5 1V132M371.5 1V132M375.5 1V132M379.5 1V132M383.5 1V132M387.5 1V132M391.5 1V132M395.5 1V132" stroke="#282828"/><path d="M1 40.5H399M1 87.5H399" stroke="#424242"/><path d="M11.5 1V132M35.5 1V132M59.5 1V132M87.5 1V132M111.5 1V132M135.5 1V132M159.5 1V132M183.5 1V132M211.5 1V132M235.5 1V132M259.5 1V132M283.5 1V132M307.5 1V132M335.5 1V132" stroke="#3e3e3e"/><path d="M23.5 1V132M47.5 1V132M71.5 1V132M99.5 1V132M123.5 1V132M147.5 1V132M171.5 1V132M195.5 1V132M223.5 1V132M247.5 1V132M271.5 1V132M295.5 1V132M319.5 1V132M347.5 1V132" stroke="#6c6c6c"/><path d="M79.5 1V132M203.5 1V132M327.5 1V132" stroke="#aaa200"/></g><path d="M0 40h3V64h-3zM4 40h3V68h-3zM8 40h3V57h-3zM12 40h3V47h-3zM16 40h3V43h-3zM20 40h3V55h-3zM24 40h3V43h-3zM28 29h3V41h-3zM32 24h3V41h-3zM36 21h3V41h-3zM40 29h3V41h-3zM44 39h3V40h-3zM48 40h3V49h-3zM52 40h3V64h-3zM56 40h3V77h-3zM60 40h3V70h-3zM64 40h3V61h-3zM68 40h3V54h-3zM72 40h3V49h-3zM76 40h3V45h-3zM80 40h3V45h-3zM84 40h3V45h-3zM88 40h3V49h-3zM92 40h3V44h-3zM96 35h3V41h-3zM100 32h3V41h-3zM104 22h3V41h-3zM108 22h3V41h-3zM112 33h3V41h-3zM116 36h3V41h-3zM120 40h3V43h-3zM124 41h3V42h-3zM128 40h3V48h-3zM132 40h3V51h-3zM136 40h3V52h-3zM140 40h3V46h-3zM144 40h3V43h-3zM148 29h3V41h-3zM152 25h3V41h-3zM156 26h3V41h-3zM160 28h3V41h-3zM164 30h3V41h-3zM168 36h3V41h-3zM172 40h3V41h-3zM176 41h3V42h-3zM180 41h3V42h-3zM184 40h3V41h-3zM188 36h3V41h-3zM192 34h3V41h-3zM196 35h3V41h-3zM200 36h3V41h-3zM204 30h3V41h-3zM208 30h3V41h-3zM212 27h3V41h-3zM216 27h3V41h-3zM220 29h3V41h-3zM224 33h3V41h-3zM228 32h3V41h-3zM232 28h3V41h-3zM236 26h3V41h-3zM240 23h3V41h-3zM244 20h3V41h-3zM248 18h3V41h-3zM252 15h3V41h-3zM256 18h3V41h-3zM260 23h3V41h-3zM264 36h3V41h-3zM268 40h3V45h-3zM272 40h3V48h-3zM276 40h3V41h-3zM280 35h3V41h-3zM284 35h3V41h-3zM288 40h3V47h-3zM292 40h3V60h-3zM296 40h3V64h-3zM300 40h3V70h-3zM304 40h3V66h-3zM308 40h3V65h-3zM312 40h3V62h-3zM316 40h3V61h-3zM320 40h3V60h-3zM324 40h3V56h-3zM328 40h3V52h-3zM332 40h3V49h-3zM336 40h3V46h-3zM340 40h3V52h-3zM344 40h3V47h-3zM348 40h3V49h-3zM352 40h3V45h-3zM356 40h3V46h-3z" fill="#a2a2a2" shape-rendering="crispEdges"/><path d="M1 41h1V63h-1zM5 41h1V67h-1zM9 41h1V56h-1zM13 41h1V46h-1zM17 41h1V42h-1zM21 41h1V54h-1zM25 41h1V42h-1zM29 30h1V40h-1zM33 25h1V40h-1zM37 22h1V40h-1zM41 30h1V40h-1zM49 41h1V48h-1zM53 41h1V63h-1zM57 41h1V76h-1zM61 41h1V69h-1zM65 41h1V60h-1zM69 41h1V53h-1zM73 41h1V48h-1zM77 41h1V44h-1zM81 41h1V44h-1zM85 41h1V44h-1zM89 41h1V48h-1zM93 41h1V43h-1zM97 36h1V40h-1zM101 33h1V40h-1zM105 23h1V40h-1zM109 23h1V40h-1zM113 34h1V40h-1zM117 37h1V40h-1zM121 41h1V42h-1zM129 41h1V47h-1zM133 41h1V50h-1zM137 41h1V51h-1zM141 41h1V45h-1zM145 41h1V42h-1zM149 30h1V40h-1zM153 26h1V40h-1zM157 27h1V40h-1zM161 29h1V40h-1zM165 31h1V40h-1zM169 37h1V40h-1zM189 37h1V40h-1zM193 35h1V40h-1zM197 36h1V40h-1zM201 37h1V40h-1zM205 31h1V40h-1zM209 31h1V40h-1zM213 28h1V40h-1zM217 28h1V40h-1zM221 30h1V40h-1zM225 34h1V40h-1zM229 33h1V40h-1zM233 29h1V40h-1zM237 27h1V40h-1zM241 24h1V40h-1zM245 21h1V40h-1zM249 19h1V40h-1zM253 16h1V40h-1zM257 19h1V40h-1zM261 24h1V40h-1zM265 37h1V40h-1zM269 41h1V44h-1zM273 41h1V47h-1zM281 36h1V40h-1zM285 36h1V40h-1zM289 41h1V46h-1zM293 41h1V59h-1zM297 41h1V63h-1zM301 41h1V69h-1zM305 41h1V65h-1zM309 41h1V64h-1zM313 41h1V61h-1zM317 41h1V60h-1zM321 41h1V59h-1zM325 41h1V55h-1zM329 41h1V51h-1zM333 41h1V48h-1zM337 41h1V45h-1zM341 41h1V51h-1zM345 41h1V46h-1zM349 41h1V48h-1zM353 41h1V44h-1zM357 41h1V45h-1z" fill="#2e2e2e" shape-rendering="crispEdges"/><path d="M1.4 83.9L5.5 99.6L9.5 92.7L13.6 83.3L17.5 80.1L21.5 97L25.6 82.4L29.5 67.4L33.5 57.1L37.6 51.5L41.5 56.5L45.4 66.5L49.5 82.4L53.5 102L57.4 121.3L61.5 122.6L65.5 118.3L69.6 114.2L73.5 112.3L77.5 107.1L81.6 110.1L85.5 110.1L89.4 117.6L93.6 113.3L97.5 104.5L101.4 98.3L105.5 82.8L109.5 78.3L113.6 88L117.5 89.5L121.5 97.4L125.6 97.4L129.5 105.2L133.5 110.1L137.6 114.6L141.5 109.5L145.4 106.7L149.5 91.7L153.5 83.3L157.6 80.5L161.5 79.6L165.5 79.6L169.6 85.2L173.5 89.9L177.5 91.7L181.6 92.1L185.5 90.2L189.4 84.2L193.6 80.5L197.5 81.4L201.4 80.5L205.5 73L209.5 70.2L213.4 62.7L217.5 59.9L221.5 59.3L225.6 61.8L229.5 58L233.5 49.6L237.6 43L241.5 37.4L245.4 30.9L249.5 22.5L253.5 13.5L257.4 11.6L261.5 12.7L265.5 24.3L269.4 33.7L273.5 39.7L277.5 31.8L281.4 24.7L285.5 23.4L289.4 32.8L293.5 56.2L297.6 65.5L301.5 79.6L305.5 82.4L309.6 87.1L313.5 90.2L317.5 94L321.6 97.4L325.5 97.4L329.4 95.5L333.5 95.5L337.5 94.5L341.6 102.6L345.5 100.7L349.5 103.5L353.6 101.7L357.5 103.5" stroke="#e01010" stroke-width="1.1" fill="none" stroke-linejoin="round" /><path d="M1.4 63.6L6.1 71.5L11.7 76.8L17.3 77.7L21.1 81.4L25.8 82.4L30.5 78.3L35.1 72.1L39.8 67.8L44.5 67.4L48.2 69.3L52.9 76.8L57.6 88L62.3 95.5L67.9 100.7L73.5 103.9L79.1 104.9L84.8 106.4L90.4 109L95.1 109.5L99.7 108.2L105.4 103L111 97.4L116.6 94.5L122.2 94.5L127.8 96.4L133.5 99.6L139.1 103.4L144.7 104.5L150.3 101.1L155.9 95.5L161.5 90.8L167.2 88.4L172.8 88.4L180.3 89.5L187.8 89.5L195.2 87.1L201.8 85.2L208.4 80.5L214 75.3L219.6 71.1L225.2 67.4L230.8 64.6L236.5 59.9L242.1 53.4L247.7 45.3L253.3 36.5L258.9 30.3L264.5 28.5L270.2 29.9L275.8 31.4L281.4 29.9L286.1 28.5L292 34.1L297.6 42.1L303.2 51.5L308.8 59.9L314.5 68.3L320.1 75.8L325.7 81.4L331.3 85.2L336.9 88L342.5 91.7L348.2 95.1L353.8 96.6L357.5 97.7" stroke="#1fbcc4" stroke-width="1.1" fill="none" stroke-linejoin="round" /><path d="M0.5 0.5H399.5V132.5H0.5z" stroke="#000" stroke-width="1" fill="none" shape-rendering="crispEdges"/></svg>
<div style="left:1531.0px;top:714.5px;width:65.0px;height:133.5px;overflow:hidden">
<span class="t" style="left:16.80px;top:33.50px;line-height:14px;color:#000;transform:scaleX(0.8446);">0.0000</span>
<span class="t" style="left:13.80px;top:80.50px;line-height:14px;color:#000;transform:scaleX(0.7810);">-10.0000</span>
<span class="t" style="left:13.80px;top:127.30px;line-height:14px;color:#000;transform:scaleX(0.7810);">-20.0000</span>
</div>
<div style="left:1127.0px;top:851px;width:470.0px;height:17px;border:1px solid #ababab;background:#fff"></div>
<span class="t" style="left:1131.60px;top:853.10px;line-height:14px;color:#000;transform:scaleX(0.9500);">始値</span><span class="t" style="left:1154.40px;top:853.10px;line-height:14px;color:#000;transform:scaleX(0.8790);">:87.492</span>
<span class="t" style="left:1209.80px;top:853.10px;line-height:14px;color:#000;transform:scaleX(0.9500);">高値</span><span class="t" style="left:1232.60px;top:853.10px;line-height:14px;color:#000;transform:scaleX(0.8790);">:87.575</span>
<span class="t" style="left:1288.00px;top:853.10px;line-height:14px;color:#000;transform:scaleX(0.9500);">安値</span><span class="t" style="left:1310.80px;top:853.10px;line-height:14px;color:#000;transform:scaleX(0.8790);">:87.365</span>
<span class="t" style="left:1366.20px;top:853.10px;line-height:14px;color:#000;transform:scaleX(0.9500);">終値</span><span class="t" style="left:1389.00px;top:853.10px;line-height:14px;color:#000;transform:scaleX(0.8790);">:87.403</span>
<div class="sb" style="left:1428.6px;top:852px;width:15.5px;height:15px"></div>
<svg style="left:1432.0px;top:855.6px" width="8" height="8" viewBox="0 0 8 8"><path d="M7.4 0.4v7.2L0.8 4z" fill="#555"/></svg>
<div style="left:1444.4px;top:852px;width:49.1px;height:15px;background:linear-gradient(#e8e8e8,#fcfcfc 45%,#fff)"></div>
<div style="left:1471.7px;top:852px;width:13.7px;height:15px;background:linear-gradient(#e2e2e2,#cfcfcf 50%,#bdbdbd)"></div>
<div class="sb" style="left:1493.5px;top:852px;width:15.5px;height:15px"></div>
<svg style="left:1498.0px;top:855.6px" width="8" height="8" viewBox="0 0 8 8"><path d="M0.6 0.4v7.2L7.2 4z" fill="#555"/></svg>
<div style="left:1509.5px;top:852px;width:1px;height:15px;background:#c8c8c8"></div>
<span class="t" style="left:1513.50px;top:853.10px;line-height:14px;color:#000;transform:scaleX(0.8237);">100</span>
<div class="sb" style="left:1533.0px;top:852px;width:15px;height:15px"></div>
<svg style="left:1536.5px;top:856.0px" width="8" height="8" viewBox="0 0 8 8"><path d="M0.4 1h7.2L4 7.4z" fill="#555"/></svg>
<div style="left:1548.50px;top:852.00px;width:15.50px;height:15.00px;background:#f2f2f2"></div>
<div class="sb" style="left:1564.5px;top:852px;width:15.5px;height:15px"></div>
<svg style="left:1567.3px;top:854.6px" width="10" height="10" viewBox="0 0 10 10"><path d="M1 5h8M5 1v8" stroke="#4a4a4a" stroke-width="2.800" stroke-linecap="round"/></svg>
<div class="sb" style="left:1580.8px;top:852px;width:15.5px;height:15px"></div>
<svg style="left:1583.6px;top:854.6px" width="10" height="10" viewBox="0 0 10 10"><path d="M1 5h8" stroke="#4a4a4a" stroke-width="2.800" stroke-linecap="round"/></svg>
<div style="left:563.2px;top:2px;width:3.8px;height:879px;background:linear-gradient(90deg,#bdbdbd,#e6e6e6 30%,#e2e2e2 70%,#c4c4c4)"></div>
<div style="left:1089.4px;top:2px;width:3.8px;height:879px;background:linear-gradient(90deg,#bdbdbd,#e6e6e6 30%,#e2e2e2 70%,#c4c4c4)"></div>
<div style="left:1086.2px;top:2px;width:3.2px;height:879px;background:linear-gradient(90deg,#c4c4c4,#e4e4e4 35%,#e0e0e0 70%,#bdbdbd)"></div>
<div style="left:1603.2px;top:2px;width:2px;height:879px;background:linear-gradient(90deg,#c4c4c4,#e4e4e4)"></div>
<div style="left:0;top:876px;width:1605px;height:5px;background:linear-gradient(#cfcfcf,#e2e2e2 25%,#dcdcdc 62%,#9c9c9c 80%,#8e8e8e)"></div>
<div style="left:0;top:0;width:1605px;height:2px;background:#0a1e4c"></div>
</div>
</body></html>
